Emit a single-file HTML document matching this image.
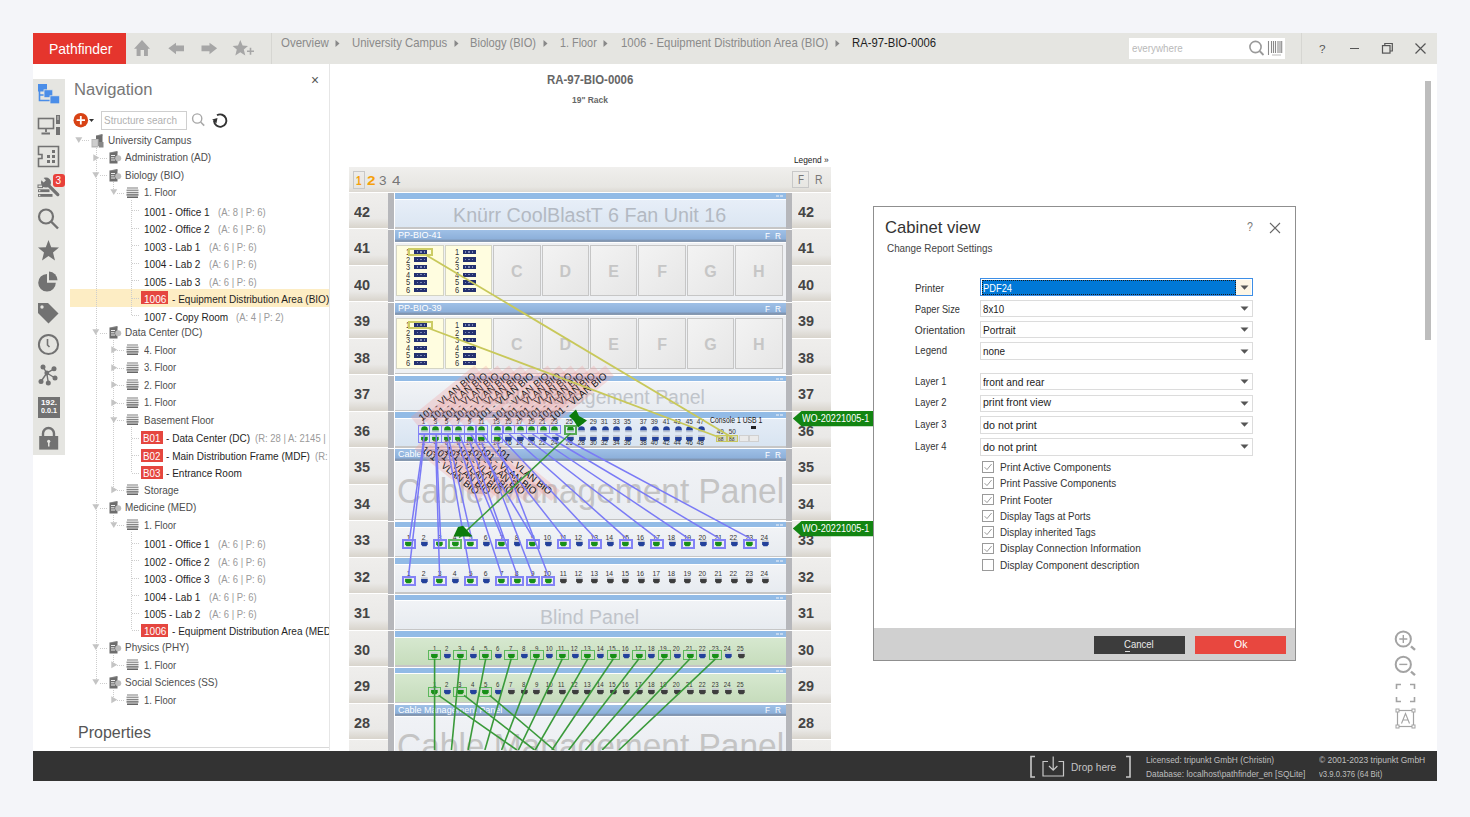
<!DOCTYPE html><html><head><meta charset="utf-8"><style>
html,body{margin:0;padding:0;}
body{width:1470px;height:817px;position:relative;overflow:hidden;background:#f4f5f9;font-family:"Liberation Sans", sans-serif;}
div{position:absolute;box-sizing:border-box;}
.t{white-space:nowrap;line-height:1;transform-origin:0 0;}
</style></head><body>
<div style="left:33.00px;top:33.00px;width:1404.00px;height:748.00px;background:#fff;"></div>
<div style="left:33.00px;top:33.00px;width:1404.00px;height:31.00px;background:#e5e5e1;"></div>
<div style="left:33.00px;top:33.00px;width:93.00px;height:31.00px;background:#e5352d;"></div>
<div class="t" style="left:48.50px;top:40.80px;font-size:15px;color:#fff;transform:scaleX(0.9284);">Pathfinder</div>
<div style="left:271.00px;top:33.00px;width:1.00px;height:31.00px;background:#d6d6d2;"></div>
<div style="left:1301.00px;top:33.00px;width:1.00px;height:31.00px;background:#d6d6d2;"></div>
<svg style="position:absolute;left:133px;top:39px;" width="20" height="18" viewBox="0 0 20 18"><path d="M1 9.8 L9 1 L17 9.8 Z M3.6 9 H14.9 V17 H11 V11 H7.6 V17 H3.6 Z" fill="#a6a6a6"/></svg>
<svg style="position:absolute;left:167px;top:42px;" width="19" height="14" viewBox="0 0 19 14"><path d="M1.3 6.2 L9 0.7 V3.4 H17 V9.2 H9 V12.2 Z" fill="#a6a6a6"/></svg>
<svg style="position:absolute;left:200px;top:42px;" width="19" height="14" viewBox="0 0 19 14"><path d="M17.1 6.2 L9.5 0.7 V3.4 H1.5 V9.2 H9.5 V12.2 Z" fill="#a6a6a6"/></svg>
<svg style="position:absolute;left:231px;top:39px;" width="26" height="18" viewBox="0 0 26 18"><path d="M9.3 1 L11.6 6.6 L17 6.9 L12.8 10.5 L14.3 16.4 L9.3 13.2 L4.3 16.4 L5.8 10.5 L1.6 6.9 L7 6.6 Z" fill="#a6a6a6"/><path d="M16 12.3 H23 M19.5 8.8 V15.8" stroke="#a6a6a6" stroke-width="1.6"/></svg>
<div class="t" style="left:280.60px;top:36.97px;font-size:12.2px;color:#8a8a8a;transform:scaleX(0.9415);">Overview</div>
<div class="t" style="left:351.60px;top:36.97px;font-size:12.2px;color:#8a8a8a;transform:scaleX(0.9310);">University Campus</div>
<div class="t" style="left:470.20px;top:36.97px;font-size:12.2px;color:#8a8a8a;transform:scaleX(0.9114);">Biology (BIO)</div>
<div class="t" style="left:559.70px;top:36.97px;font-size:12.2px;color:#8a8a8a;transform:scaleX(0.8898);">1. Floor</div>
<div class="t" style="left:620.90px;top:36.97px;font-size:12.2px;color:#8a8a8a;transform:scaleX(0.9354);">1006 - Equipment Distribution Area (BIO)</div>
<div class="t" style="left:852.40px;top:36.97px;font-size:12.2px;color:#1e1e1e;transform:scaleX(0.9253);">RA-97-BIO-0006</div>
<svg style="position:absolute;left:335px;top:39px;" width="6" height="9" viewBox="0 0 6 9"><path d="M0.5 1 L4.5 4.5 L0.5 8 Z" fill="#888"/></svg>
<svg style="position:absolute;left:454.3px;top:39px;" width="6" height="9" viewBox="0 0 6 9"><path d="M0.5 1 L4.5 4.5 L0.5 8 Z" fill="#888"/></svg>
<svg style="position:absolute;left:542.7px;top:39px;" width="6" height="9" viewBox="0 0 6 9"><path d="M0.5 1 L4.5 4.5 L0.5 8 Z" fill="#888"/></svg>
<svg style="position:absolute;left:603.3px;top:39px;" width="6" height="9" viewBox="0 0 6 9"><path d="M0.5 1 L4.5 4.5 L0.5 8 Z" fill="#888"/></svg>
<svg style="position:absolute;left:835.1px;top:39px;" width="6" height="9" viewBox="0 0 6 9"><path d="M0.5 1 L4.5 4.5 L0.5 8 Z" fill="#888"/></svg>
<div style="left:1129.00px;top:38.00px;width:156.00px;height:21.00px;background:#fff;"></div>
<div class="t" style="left:1132.40px;top:42.61px;font-size:10.5px;color:#b9b9b9;transform:scaleX(0.9321);">everywhere</div>
<svg style="position:absolute;left:1248px;top:40px;" width="18" height="17" viewBox="0 0 18 17"><circle cx="7.5" cy="7" r="5.6" fill="none" stroke="#9a9a9a" stroke-width="1.6"/><path d="M11.6 11 L15.5 15" stroke="#9a9a9a" stroke-width="1.8"/></svg>
<svg style="position:absolute;left:1267px;top:40px;" width="17" height="17" viewBox="0 0 17 17"><path d="M1.5 1 V15 M4.5 1 V13 M6.5 1 V13 M8.5 1 V13 M11 1 V13 M13 1 V13 M14.7 1 V13" stroke="#8a8a8a" stroke-width="1.1"/><path d="M5 15 H14" stroke="#aaa" stroke-width="0.8"/></svg>
<div class="t" style="left:1318.50px;top:43.77px;font-size:11.5px;color:#555;transform:scaleX(1.0184);">?</div>
<div style="left:1349.60px;top:47.60px;width:9.80px;height:1.20px;background:#555;"></div>
<svg style="position:absolute;left:1381px;top:42px;" width="13" height="13" viewBox="0 0 13 13"><rect x="1.5" y="3.6" width="7.5" height="7.5" fill="none" stroke="#555" stroke-width="1.2"/><path d="M3.8 3.6 V1.5 H11.3 V9 H9" fill="none" stroke="#555" stroke-width="1.2"/></svg>
<svg style="position:absolute;left:1414px;top:42px;" width="13" height="13" viewBox="0 0 13 13"><path d="M1.5 1.5 L11.5 11.5 M11.5 1.5 L1.5 11.5" stroke="#555" stroke-width="1.2"/></svg>
<div style="left:33.00px;top:79.00px;width:32.00px;height:376.00px;background:#e5e5e1;"></div>
<svg style="position:absolute;left:37px;top:83px;" width="24" height="22" viewBox="0 0 24 22"><path d="M2.5 8 V17.5 H13 M2.5 12 H7" fill="none" stroke="#4a8de8" stroke-width="1.6"/><rect x="1" y="1" width="9" height="7.5" fill="#4a8de8"/><rect x="7" y="6.8" width="8.8" height="7.9" fill="#4a8de8" stroke="#e5e5e1" stroke-width="0.8"/><rect x="13" y="12.8" width="9.7" height="8" fill="#4a8de8" stroke="#e5e5e1" stroke-width="0.8"/></svg>
<svg style="position:absolute;left:37px;top:114px;" width="24" height="23" viewBox="0 0 24 23"><rect x="1.5" y="4.5" width="15" height="10" fill="none" stroke="#727272" stroke-width="1.6"/><path d="M9 14.5 V18 M4.5 19.5 H13" stroke="#727272" stroke-width="1.8"/><rect x="19" y="1" width="4" height="9" fill="#727272"/><rect x="19" y="13" width="4" height="8" fill="#727272"/><path d="M20 3 H22 M20 5 H22" stroke="#e5e5e1" stroke-width="0.8"/></svg>
<svg style="position:absolute;left:37px;top:145px;" width="24" height="23" viewBox="0 0 24 23"><path d="M1.5 1.5 H21.5 V21.5 H1.5 V13.5 H5 V9.5 H1.5 Z" fill="none" stroke="#727272" stroke-width="1.6"/><rect x="15" y="5" width="3" height="3" fill="#727272"/><rect x="10" y="10" width="3" height="3" fill="#727272"/><rect x="15" y="10" width="3" height="3" fill="#727272"/><rect x="10" y="15" width="3" height="3" fill="#727272"/><rect x="15" y="15" width="3" height="3" fill="#727272"/></svg>
<svg style="position:absolute;left:37px;top:175px;" width="28" height="26" viewBox="0 0 28 26"><path d="M9 7.8 L20.8 19.6" stroke="#727272" stroke-width="3.3" stroke-linecap="round"/><circle cx="9" cy="7.6" r="5" fill="#727272"/><path d="M3 1.6 L7.8 6.4" stroke="#e5e5e1" stroke-width="3.2"/><rect x="1" y="10" width="4.6" height="2.6" fill="none" stroke="#727272" stroke-width="1"/><rect x="1" y="14.3" width="11.5" height="2.8" fill="#727272"/><rect x="1" y="19" width="14.5" height="2.8" fill="#727272"/><rect x="2" y="15" width="1.3" height="1.3" fill="#e5e5e1"/><rect x="2" y="19.8" width="1.3" height="1.3" fill="#e5e5e1"/></svg>
<div style="left:52.50px;top:174.00px;width:12.00px;height:12.50px;background:#e8413a;border-radius:3px;"></div>
<div class="t" style="left:55.50px;top:175.53px;font-size:10px;color:#fff;">3</div>
<svg style="position:absolute;left:37px;top:207px;" width="24" height="24" viewBox="0 0 24 24"><circle cx="9" cy="9.5" r="7" fill="none" stroke="#727272" stroke-width="2.2"/><path d="M14 14.5 L21 21.5" stroke="#727272" stroke-width="2.4"/></svg>
<svg style="position:absolute;left:37px;top:239px;" width="24" height="24" viewBox="0 0 24 24"><path d="M11.5 1 L14.2 8.2 L22 8.6 L16 13.5 L18 21.5 L11.5 17 L5 21.5 L7 13.5 L1 8.6 L8.8 8.2 Z" fill="#727272"/></svg>
<svg style="position:absolute;left:37px;top:270px;" width="24" height="24" viewBox="0 0 24 24"><path d="M10 4 A8.8 8.8 0 1 0 18.8 12.8 H10 Z" fill="#727272"/><path d="M12 1.5 A8.8 8.8 0 0 1 20.5 10.3 H12 Z" fill="#727272"/></svg>
<svg style="position:absolute;left:37px;top:302px;" width="24" height="24" viewBox="0 0 24 24"><path d="M1 1 H11 L21.5 11.5 L11.5 21.5 L1 11 Z" fill="#727272"/><circle cx="5" cy="5" r="1.7" fill="#e5e5e1"/></svg>
<svg style="position:absolute;left:37px;top:333px;" width="24" height="24" viewBox="0 0 24 24"><circle cx="11.5" cy="11.5" r="9.6" fill="none" stroke="#727272" stroke-width="2"/><path d="M10.5 6 V12 L12.5 14" fill="none" stroke="#727272" stroke-width="1.6"/></svg>
<svg style="position:absolute;left:37px;top:364px;" width="24" height="24" viewBox="0 0 24 24"><path d="M6 3 L9.8 9 L17 4.8 M9.8 9 L4 17.5 M9.8 9 L11.3 19 M9.8 9 L18 14" fill="none" stroke="#727272" stroke-width="1.4"/><circle cx="6" cy="3" r="2.5" fill="#727272"/><circle cx="17" cy="4.8" r="2.5" fill="#727272"/><circle cx="9.8" cy="9" r="2.4" fill="#727272"/><circle cx="4" cy="17.5" r="2.5" fill="#727272"/><circle cx="11.3" cy="19" r="2.5" fill="#727272"/><circle cx="18" cy="14" r="2.5" fill="#727272"/></svg>
<div style="left:38.00px;top:396.70px;width:21.60px;height:21.30px;background:#727272;"></div>
<div class="t" style="left:40.50px;top:399.15px;font-size:7.5px;color:#fff;font-weight:bold;transform:scaleX(1.0968);">192.</div>
<div class="t" style="left:40.50px;top:407.25px;font-size:7.5px;color:#fff;font-weight:bold;transform:scaleX(0.9588);">0.0.1</div>
<svg style="position:absolute;left:37px;top:426px;" width="24" height="26" viewBox="0 0 24 26"><path d="M6 11 V7.5 A5.5 5.5 0 0 1 17 7.5 V11" fill="none" stroke="#727272" stroke-width="2.4"/><rect x="2.2" y="10" width="19" height="13.6" fill="#727272"/><circle cx="11.7" cy="15.3" r="1.6" fill="#e5e5e1"/><rect x="11" y="15.5" width="1.5" height="5" fill="#e5e5e1"/></svg>
<div style="left:329.00px;top:64.00px;width:1.00px;height:686.00px;background:#e6e6e6;"></div>
<div class="t" style="left:73.50px;top:81.16px;font-size:17.3px;color:#777;transform:scaleX(0.9603);">Navigation</div>
<div class="t" style="left:311.00px;top:72.65px;font-size:14px;color:#555;transform:scaleX(0.9768);">×</div>
<svg style="position:absolute;left:72px;top:111px;" width="26" height="19" viewBox="0 0 26 19"><circle cx="8.8" cy="9.2" r="7.3" fill="#d84315"/><path d="M8.8 5 V13.4 M4.6 9.2 H13" stroke="#fff" stroke-width="1.8"/><path d="M17 8 H22 L19.5 11 Z" fill="#333"/></svg>
<div style="left:101.30px;top:110.60px;width:86.20px;height:19.00px;border:1px solid #cfcfcf;background:#fff;"></div>
<div class="t" style="left:104.00px;top:116.17px;font-size:10.2px;color:#b0b0b0;transform:scaleX(0.9757);">Structure search</div>
<svg style="position:absolute;left:191px;top:112px;" width="16" height="16" viewBox="0 0 16 16"><circle cx="6.2" cy="6.5" r="4.6" fill="none" stroke="#a8a8a8" stroke-width="1.4"/><path d="M9.6 10 L13.2 13.6" stroke="#a8a8a8" stroke-width="1.5"/></svg>
<svg style="position:absolute;left:210px;top:110px;" width="20" height="20" viewBox="0 0 20 20"><path d="M4 11 A6.2 6.2 0 1 0 7 5.3" fill="none" stroke="#333" stroke-width="1.9"/><path d="M2.2 9.5 L6.4 13.4 L7.5 8 Z" fill="#333"/></svg>
<div style="left:70.40px;top:289.30px;width:258.60px;height:17.30px;background:#fdedc4;"></div>
<div style="left:95.70px;top:148.00px;width:1.00px;height:533.70px;background:repeating-linear-gradient(#cdcdcd 0 1px,transparent 1px 2px);"></div>
<div style="left:113.20px;top:182.20px;width:1.00px;height:9.50px;background:repeating-linear-gradient(#cdcdcd 0 1px,transparent 1px 2px);"></div>
<div style="left:113.20px;top:339.70px;width:1.00px;height:149.50px;background:repeating-linear-gradient(#cdcdcd 0 1px,transparent 1px 2px);"></div>
<div style="left:113.20px;top:514.70px;width:1.00px;height:9.50px;background:repeating-linear-gradient(#cdcdcd 0 1px,transparent 1px 2px);"></div>
<div style="left:113.20px;top:654.70px;width:1.00px;height:9.50px;background:repeating-linear-gradient(#cdcdcd 0 1px,transparent 1px 2px);"></div>
<div style="left:113.20px;top:689.70px;width:1.00px;height:9.50px;background:repeating-linear-gradient(#cdcdcd 0 1px,transparent 1px 2px);"></div>
<div style="left:130.80px;top:199.70px;width:1.00px;height:115.50px;background:repeating-linear-gradient(#cdcdcd 0 1px,transparent 1px 2px);"></div>
<div style="left:130.80px;top:427.20px;width:1.00px;height:45.50px;background:repeating-linear-gradient(#cdcdcd 0 1px,transparent 1px 2px);"></div>
<div style="left:130.80px;top:532.20px;width:1.00px;height:98.00px;background:repeating-linear-gradient(#cdcdcd 0 1px,transparent 1px 2px);"></div>
<svg style="position:absolute;left:74.7px;top:136.8px;" width="8" height="7" viewBox="0 0 8 7"><path d="M0.3 0.3 H7.3 L3.8 6 Z" fill="#c4c4c4"/></svg>
<div style="left:82.20px;top:140.00px;width:7.50px;height:1.00px;background:repeating-linear-gradient(90deg,#cdcdcd 0 1px,transparent 1px 2px);"></div>
<svg style="position:absolute;left:90.7px;top:134.0px;" width="13" height="14" viewBox="0 0 13 14"><rect x="5" y="1.5" width="6.5" height="10.5" fill="#6d6d6d"/><path d="M5 1.5 L11.5 0 V2 Z" fill="#6d6d6d"/><rect x="0.5" y="5" width="7" height="8.5" fill="#b8b8b8"/><path d="M1.5 7 H6.5 M1.5 9 H6.5 M1.5 11 H6.5" stroke="#eee" stroke-width="0.8"/><rect x="8" y="8" width="4.5" height="5.5" fill="#888"/></svg>
<div class="t" style="left:107.70px;top:135.57px;font-size:10.2px;color:#4d4d4d;transform:scaleX(0.9750);">University Campus</div>
<svg style="position:absolute;left:93.4px;top:153.7px;" width="7" height="8" viewBox="0 0 7 8"><path d="M0.3 0.3 V7.3 L6.3 3.8 Z" fill="#c4c4c4"/></svg>
<div style="left:99.90px;top:157.50px;width:8.20px;height:1.00px;background:repeating-linear-gradient(90deg,#cdcdcd 0 1px,transparent 1px 2px);"></div>
<svg style="position:absolute;left:109.1px;top:151.0px;" width="13" height="13" viewBox="0 0 13 13"><rect x="0.5" y="1.5" width="8" height="11" fill="#6d6d6d"/><path d="M0.5 1.5 L8.5 0 V2 Z" fill="#6d6d6d"/><path d="M2 4.5 H6 M2 6.8 H5.5 M2 9 H6" stroke="#eee" stroke-width="1"/><circle cx="9.2" cy="7.2" r="3" fill="#bdbdbd"/></svg>
<div class="t" style="left:124.90px;top:153.07px;font-size:10.2px;color:#4d4d4d;transform:scaleX(0.9750);">Administration (AD)</div>
<svg style="position:absolute;left:92.4px;top:171.8px;" width="8" height="7" viewBox="0 0 8 7"><path d="M0.3 0.3 H7.3 L3.8 6 Z" fill="#c4c4c4"/></svg>
<div style="left:99.90px;top:175.00px;width:8.20px;height:1.00px;background:repeating-linear-gradient(90deg,#cdcdcd 0 1px,transparent 1px 2px);"></div>
<svg style="position:absolute;left:109.1px;top:168.5px;" width="13" height="13" viewBox="0 0 13 13"><rect x="0.5" y="1.5" width="8" height="11" fill="#6d6d6d"/><path d="M0.5 1.5 L8.5 0 V2 Z" fill="#6d6d6d"/><path d="M2 4.5 H6 M2 6.8 H5.5 M2 9 H6" stroke="#eee" stroke-width="1"/><circle cx="9.2" cy="7.2" r="3" fill="#bdbdbd"/></svg>
<div class="t" style="left:124.90px;top:170.57px;font-size:10.2px;color:#4d4d4d;transform:scaleX(0.9750);">Biology (BIO)</div>
<svg style="position:absolute;left:109.9px;top:189.3px;" width="8" height="7" viewBox="0 0 8 7"><path d="M0.3 0.3 H7.3 L3.8 6 Z" fill="#c4c4c4"/></svg>
<div style="left:117.40px;top:192.50px;width:7.20px;height:1.00px;background:repeating-linear-gradient(90deg,#cdcdcd 0 1px,transparent 1px 2px);"></div>
<svg style="position:absolute;left:125.6px;top:186.9px;" width="13" height="12" viewBox="0 0 13 12"><path d="M1 1 H12" stroke="#a8a8a8" stroke-width="1.5"/><path d="M0.5 3.3 H12.5" stroke="#999" stroke-width="1.5"/><path d="M0.5 5.6 H12.5" stroke="#858585" stroke-width="1.5"/><path d="M0.5 7.9 H12.5" stroke="#707070" stroke-width="1.5"/><path d="M1 10.2 H12" stroke="#5e5e5e" stroke-width="1.5"/></svg>
<div class="t" style="left:143.60px;top:188.07px;font-size:10.2px;color:#4d4d4d;transform:scaleX(0.9300);">1. Floor</div>
<div style="left:131.50px;top:210.00px;width:8.50px;height:1.00px;background:repeating-linear-gradient(90deg,#cdcdcd 0 1px,transparent 1px 2px);"></div>
<div class="t" style="left:143.50px;top:207.77px;font-size:10.2px;color:#1f1f1f;transform:scaleX(0.9850);">1001 - Office 1</div>
<div class="t" style="left:217.81px;top:207.77px;font-size:10.2px;color:#9a9a9a;transform:scaleX(0.9300);">(A: 8 | P: 6)</div>
<div style="left:131.50px;top:227.50px;width:8.50px;height:1.00px;background:repeating-linear-gradient(90deg,#cdcdcd 0 1px,transparent 1px 2px);"></div>
<div class="t" style="left:143.50px;top:225.27px;font-size:10.2px;color:#1f1f1f;transform:scaleX(0.9850);">1002 - Office 2</div>
<div class="t" style="left:217.81px;top:225.27px;font-size:10.2px;color:#9a9a9a;transform:scaleX(0.9300);">(A: 6 | P: 6)</div>
<div style="left:131.50px;top:245.00px;width:8.50px;height:1.00px;background:repeating-linear-gradient(90deg,#cdcdcd 0 1px,transparent 1px 2px);"></div>
<div class="t" style="left:143.50px;top:242.77px;font-size:10.2px;color:#1f1f1f;transform:scaleX(0.9850);">1003 - Lab 1</div>
<div class="t" style="left:208.51px;top:242.77px;font-size:10.2px;color:#9a9a9a;transform:scaleX(0.9300);">(A: 6 | P: 6)</div>
<div style="left:131.50px;top:262.50px;width:8.50px;height:1.00px;background:repeating-linear-gradient(90deg,#cdcdcd 0 1px,transparent 1px 2px);"></div>
<div class="t" style="left:143.50px;top:260.27px;font-size:10.2px;color:#1f1f1f;transform:scaleX(0.9850);">1004 - Lab 2</div>
<div class="t" style="left:208.51px;top:260.27px;font-size:10.2px;color:#9a9a9a;transform:scaleX(0.9300);">(A: 6 | P: 6)</div>
<div style="left:131.50px;top:280.00px;width:8.50px;height:1.00px;background:repeating-linear-gradient(90deg,#cdcdcd 0 1px,transparent 1px 2px);"></div>
<div class="t" style="left:143.50px;top:277.77px;font-size:10.2px;color:#1f1f1f;transform:scaleX(0.9850);">1005 - Lab 3</div>
<div class="t" style="left:208.51px;top:277.77px;font-size:10.2px;color:#9a9a9a;transform:scaleX(0.9300);">(A: 6 | P: 6)</div>
<div style="left:131.50px;top:297.50px;width:8.50px;height:1.00px;background:repeating-linear-gradient(90deg,#cdcdcd 0 1px,transparent 1px 2px);"></div>
<div style="left:140.80px;top:291.20px;width:27.00px;height:13.00px;background:#e5463f;"></div>
<div class="t" style="left:143.60px;top:294.77px;font-size:10.2px;color:#fff;transform:scaleX(0.9850);">1006</div>
<div class="t" style="left:171.80px;top:294.77px;font-size:10.2px;color:#1f1f1f;transform:scaleX(0.9850);"> - Equipment Distribution Area (BIO)</div>
<div style="left:131.50px;top:315.00px;width:8.50px;height:1.00px;background:repeating-linear-gradient(90deg,#cdcdcd 0 1px,transparent 1px 2px);"></div>
<div class="t" style="left:143.50px;top:312.77px;font-size:10.2px;color:#1f1f1f;transform:scaleX(0.9850);">1007 - Copy Room</div>
<div class="t" style="left:236.44px;top:312.77px;font-size:10.2px;color:#9a9a9a;transform:scaleX(0.9300);">(A: 4 | P: 2)</div>
<svg style="position:absolute;left:92.4px;top:329.3px;" width="8" height="7" viewBox="0 0 8 7"><path d="M0.3 0.3 H7.3 L3.8 6 Z" fill="#c4c4c4"/></svg>
<div style="left:99.90px;top:332.50px;width:8.20px;height:1.00px;background:repeating-linear-gradient(90deg,#cdcdcd 0 1px,transparent 1px 2px);"></div>
<svg style="position:absolute;left:109.1px;top:326.0px;" width="13" height="13" viewBox="0 0 13 13"><rect x="0.5" y="1.5" width="8" height="11" fill="#6d6d6d"/><path d="M0.5 1.5 L8.5 0 V2 Z" fill="#6d6d6d"/><path d="M2 4.5 H6 M2 6.8 H5.5 M2 9 H6" stroke="#eee" stroke-width="1"/><circle cx="9.2" cy="7.2" r="3" fill="#bdbdbd"/></svg>
<div class="t" style="left:124.90px;top:328.07px;font-size:10.2px;color:#4d4d4d;transform:scaleX(0.9750);">Data Center (DC)</div>
<svg style="position:absolute;left:110.9px;top:346.2px;" width="7" height="8" viewBox="0 0 7 8"><path d="M0.3 0.3 V7.3 L6.3 3.8 Z" fill="#c4c4c4"/></svg>
<div style="left:117.40px;top:350.00px;width:7.20px;height:1.00px;background:repeating-linear-gradient(90deg,#cdcdcd 0 1px,transparent 1px 2px);"></div>
<svg style="position:absolute;left:125.6px;top:344.4px;" width="13" height="12" viewBox="0 0 13 12"><path d="M1 1 H12" stroke="#a8a8a8" stroke-width="1.5"/><path d="M0.5 3.3 H12.5" stroke="#999" stroke-width="1.5"/><path d="M0.5 5.6 H12.5" stroke="#858585" stroke-width="1.5"/><path d="M0.5 7.9 H12.5" stroke="#707070" stroke-width="1.5"/><path d="M1 10.2 H12" stroke="#5e5e5e" stroke-width="1.5"/></svg>
<div class="t" style="left:143.60px;top:345.57px;font-size:10.2px;color:#4d4d4d;transform:scaleX(0.9300);">4. Floor</div>
<svg style="position:absolute;left:110.9px;top:363.7px;" width="7" height="8" viewBox="0 0 7 8"><path d="M0.3 0.3 V7.3 L6.3 3.8 Z" fill="#c4c4c4"/></svg>
<div style="left:117.40px;top:367.50px;width:7.20px;height:1.00px;background:repeating-linear-gradient(90deg,#cdcdcd 0 1px,transparent 1px 2px);"></div>
<svg style="position:absolute;left:125.6px;top:361.9px;" width="13" height="12" viewBox="0 0 13 12"><path d="M1 1 H12" stroke="#a8a8a8" stroke-width="1.5"/><path d="M0.5 3.3 H12.5" stroke="#999" stroke-width="1.5"/><path d="M0.5 5.6 H12.5" stroke="#858585" stroke-width="1.5"/><path d="M0.5 7.9 H12.5" stroke="#707070" stroke-width="1.5"/><path d="M1 10.2 H12" stroke="#5e5e5e" stroke-width="1.5"/></svg>
<div class="t" style="left:143.60px;top:363.07px;font-size:10.2px;color:#4d4d4d;transform:scaleX(0.9300);">3. Floor</div>
<svg style="position:absolute;left:110.9px;top:381.2px;" width="7" height="8" viewBox="0 0 7 8"><path d="M0.3 0.3 V7.3 L6.3 3.8 Z" fill="#c4c4c4"/></svg>
<div style="left:117.40px;top:385.00px;width:7.20px;height:1.00px;background:repeating-linear-gradient(90deg,#cdcdcd 0 1px,transparent 1px 2px);"></div>
<svg style="position:absolute;left:125.6px;top:379.4px;" width="13" height="12" viewBox="0 0 13 12"><path d="M1 1 H12" stroke="#a8a8a8" stroke-width="1.5"/><path d="M0.5 3.3 H12.5" stroke="#999" stroke-width="1.5"/><path d="M0.5 5.6 H12.5" stroke="#858585" stroke-width="1.5"/><path d="M0.5 7.9 H12.5" stroke="#707070" stroke-width="1.5"/><path d="M1 10.2 H12" stroke="#5e5e5e" stroke-width="1.5"/></svg>
<div class="t" style="left:143.60px;top:380.57px;font-size:10.2px;color:#4d4d4d;transform:scaleX(0.9300);">2. Floor</div>
<svg style="position:absolute;left:110.9px;top:398.7px;" width="7" height="8" viewBox="0 0 7 8"><path d="M0.3 0.3 V7.3 L6.3 3.8 Z" fill="#c4c4c4"/></svg>
<div style="left:117.40px;top:402.50px;width:7.20px;height:1.00px;background:repeating-linear-gradient(90deg,#cdcdcd 0 1px,transparent 1px 2px);"></div>
<svg style="position:absolute;left:125.6px;top:396.9px;" width="13" height="12" viewBox="0 0 13 12"><path d="M1 1 H12" stroke="#a8a8a8" stroke-width="1.5"/><path d="M0.5 3.3 H12.5" stroke="#999" stroke-width="1.5"/><path d="M0.5 5.6 H12.5" stroke="#858585" stroke-width="1.5"/><path d="M0.5 7.9 H12.5" stroke="#707070" stroke-width="1.5"/><path d="M1 10.2 H12" stroke="#5e5e5e" stroke-width="1.5"/></svg>
<div class="t" style="left:143.60px;top:398.07px;font-size:10.2px;color:#4d4d4d;transform:scaleX(0.9300);">1. Floor</div>
<svg style="position:absolute;left:109.9px;top:416.8px;" width="8" height="7" viewBox="0 0 8 7"><path d="M0.3 0.3 H7.3 L3.8 6 Z" fill="#c4c4c4"/></svg>
<div style="left:117.40px;top:420.00px;width:7.20px;height:1.00px;background:repeating-linear-gradient(90deg,#cdcdcd 0 1px,transparent 1px 2px);"></div>
<svg style="position:absolute;left:125.6px;top:414.4px;" width="13" height="12" viewBox="0 0 13 12"><path d="M1 1 H12" stroke="#a8a8a8" stroke-width="1.5"/><path d="M0.5 3.3 H12.5" stroke="#999" stroke-width="1.5"/><path d="M0.5 5.6 H12.5" stroke="#858585" stroke-width="1.5"/><path d="M0.5 7.9 H12.5" stroke="#707070" stroke-width="1.5"/><path d="M1 10.2 H12" stroke="#5e5e5e" stroke-width="1.5"/></svg>
<div class="t" style="left:143.60px;top:415.57px;font-size:10.2px;color:#4d4d4d;transform:scaleX(0.9750);">Basement Floor</div>
<div style="left:131.50px;top:437.50px;width:8.50px;height:1.00px;background:repeating-linear-gradient(90deg,#cdcdcd 0 1px,transparent 1px 2px);"></div>
<div style="left:141.00px;top:431.20px;width:21.50px;height:13.00px;background:#e5463f;"></div>
<div class="t" style="left:143.00px;top:434.27px;font-size:10.2px;color:#fff;transform:scaleX(0.9600);">B01</div>
<div class="t" style="left:165.50px;top:434.27px;font-size:10.2px;color:#1f1f1f;transform:scaleX(0.9850);"> - Data Center (DC)</div>
<div class="t" style="left:254.81px;top:434.27px;font-size:10.2px;color:#9a9a9a;transform:scaleX(0.9300);">(R: 28 | A: 2145 |</div>
<div style="left:131.50px;top:455.00px;width:8.50px;height:1.00px;background:repeating-linear-gradient(90deg,#cdcdcd 0 1px,transparent 1px 2px);"></div>
<div style="left:141.00px;top:448.70px;width:21.50px;height:13.00px;background:#e5463f;"></div>
<div class="t" style="left:143.00px;top:451.77px;font-size:10.2px;color:#fff;transform:scaleX(0.9600);">B02</div>
<div class="t" style="left:165.50px;top:451.77px;font-size:10.2px;color:#1f1f1f;transform:scaleX(0.9850);"> - Main Distribution Frame (MDF)</div>
<div class="t" style="left:314.54px;top:451.77px;font-size:10.2px;color:#9a9a9a;transform:scaleX(0.9300);">(R:</div>
<div style="left:131.50px;top:472.50px;width:8.50px;height:1.00px;background:repeating-linear-gradient(90deg,#cdcdcd 0 1px,transparent 1px 2px);"></div>
<div style="left:141.00px;top:466.20px;width:21.50px;height:13.00px;background:#e5463f;"></div>
<div class="t" style="left:143.00px;top:469.27px;font-size:10.2px;color:#fff;transform:scaleX(0.9600);">B03</div>
<div class="t" style="left:165.50px;top:469.27px;font-size:10.2px;color:#1f1f1f;transform:scaleX(0.9850);"> - Entrance Room</div>
<svg style="position:absolute;left:110.9px;top:486.2px;" width="7" height="8" viewBox="0 0 7 8"><path d="M0.3 0.3 V7.3 L6.3 3.8 Z" fill="#c4c4c4"/></svg>
<div style="left:117.40px;top:490.00px;width:7.20px;height:1.00px;background:repeating-linear-gradient(90deg,#cdcdcd 0 1px,transparent 1px 2px);"></div>
<svg style="position:absolute;left:125.6px;top:484.4px;" width="13" height="12" viewBox="0 0 13 12"><path d="M1 1 H12" stroke="#a8a8a8" stroke-width="1.5"/><path d="M0.5 3.3 H12.5" stroke="#999" stroke-width="1.5"/><path d="M0.5 5.6 H12.5" stroke="#858585" stroke-width="1.5"/><path d="M0.5 7.9 H12.5" stroke="#707070" stroke-width="1.5"/><path d="M1 10.2 H12" stroke="#5e5e5e" stroke-width="1.5"/></svg>
<div class="t" style="left:143.60px;top:485.57px;font-size:10.2px;color:#4d4d4d;transform:scaleX(0.9750);">Storage</div>
<svg style="position:absolute;left:92.4px;top:504.3px;" width="8" height="7" viewBox="0 0 8 7"><path d="M0.3 0.3 H7.3 L3.8 6 Z" fill="#c4c4c4"/></svg>
<div style="left:99.90px;top:507.50px;width:8.20px;height:1.00px;background:repeating-linear-gradient(90deg,#cdcdcd 0 1px,transparent 1px 2px);"></div>
<svg style="position:absolute;left:109.1px;top:501.0px;" width="13" height="13" viewBox="0 0 13 13"><rect x="0.5" y="1.5" width="8" height="11" fill="#6d6d6d"/><path d="M0.5 1.5 L8.5 0 V2 Z" fill="#6d6d6d"/><path d="M2 4.5 H6 M2 6.8 H5.5 M2 9 H6" stroke="#eee" stroke-width="1"/><circle cx="9.2" cy="7.2" r="3" fill="#bdbdbd"/></svg>
<div class="t" style="left:124.90px;top:503.07px;font-size:10.2px;color:#4d4d4d;transform:scaleX(0.9750);">Medicine (MED)</div>
<svg style="position:absolute;left:109.9px;top:521.8px;" width="8" height="7" viewBox="0 0 8 7"><path d="M0.3 0.3 H7.3 L3.8 6 Z" fill="#c4c4c4"/></svg>
<div style="left:117.40px;top:525.00px;width:7.20px;height:1.00px;background:repeating-linear-gradient(90deg,#cdcdcd 0 1px,transparent 1px 2px);"></div>
<svg style="position:absolute;left:125.6px;top:519.4px;" width="13" height="12" viewBox="0 0 13 12"><path d="M1 1 H12" stroke="#a8a8a8" stroke-width="1.5"/><path d="M0.5 3.3 H12.5" stroke="#999" stroke-width="1.5"/><path d="M0.5 5.6 H12.5" stroke="#858585" stroke-width="1.5"/><path d="M0.5 7.9 H12.5" stroke="#707070" stroke-width="1.5"/><path d="M1 10.2 H12" stroke="#5e5e5e" stroke-width="1.5"/></svg>
<div class="t" style="left:143.60px;top:520.57px;font-size:10.2px;color:#4d4d4d;transform:scaleX(0.9300);">1. Floor</div>
<div style="left:131.50px;top:542.50px;width:8.50px;height:1.00px;background:repeating-linear-gradient(90deg,#cdcdcd 0 1px,transparent 1px 2px);"></div>
<div class="t" style="left:143.50px;top:540.27px;font-size:10.2px;color:#1f1f1f;transform:scaleX(0.9850);">1001 - Office 1</div>
<div class="t" style="left:217.81px;top:540.27px;font-size:10.2px;color:#9a9a9a;transform:scaleX(0.9300);">(A: 6 | P: 6)</div>
<div style="left:131.50px;top:560.00px;width:8.50px;height:1.00px;background:repeating-linear-gradient(90deg,#cdcdcd 0 1px,transparent 1px 2px);"></div>
<div class="t" style="left:143.50px;top:557.77px;font-size:10.2px;color:#1f1f1f;transform:scaleX(0.9850);">1002 - Office 2</div>
<div class="t" style="left:217.81px;top:557.77px;font-size:10.2px;color:#9a9a9a;transform:scaleX(0.9300);">(A: 6 | P: 6)</div>
<div style="left:131.50px;top:577.50px;width:8.50px;height:1.00px;background:repeating-linear-gradient(90deg,#cdcdcd 0 1px,transparent 1px 2px);"></div>
<div class="t" style="left:143.50px;top:575.27px;font-size:10.2px;color:#1f1f1f;transform:scaleX(0.9850);">1003 - Office 3</div>
<div class="t" style="left:217.81px;top:575.27px;font-size:10.2px;color:#9a9a9a;transform:scaleX(0.9300);">(A: 6 | P: 6)</div>
<div style="left:131.50px;top:595.00px;width:8.50px;height:1.00px;background:repeating-linear-gradient(90deg,#cdcdcd 0 1px,transparent 1px 2px);"></div>
<div class="t" style="left:143.50px;top:592.77px;font-size:10.2px;color:#1f1f1f;transform:scaleX(0.9850);">1004 - Lab 1</div>
<div class="t" style="left:208.51px;top:592.77px;font-size:10.2px;color:#9a9a9a;transform:scaleX(0.9300);">(A: 6 | P: 6)</div>
<div style="left:131.50px;top:612.50px;width:8.50px;height:1.00px;background:repeating-linear-gradient(90deg,#cdcdcd 0 1px,transparent 1px 2px);"></div>
<div class="t" style="left:143.50px;top:610.27px;font-size:10.2px;color:#1f1f1f;transform:scaleX(0.9850);">1005 - Lab 2</div>
<div class="t" style="left:208.51px;top:610.27px;font-size:10.2px;color:#9a9a9a;transform:scaleX(0.9300);">(A: 6 | P: 6)</div>
<div style="left:131.50px;top:630.00px;width:8.50px;height:1.00px;background:repeating-linear-gradient(90deg,#cdcdcd 0 1px,transparent 1px 2px);"></div>
<div style="left:140.80px;top:623.70px;width:27.00px;height:13.00px;background:#e5463f;"></div>
<div class="t" style="left:143.60px;top:627.27px;font-size:10.2px;color:#fff;transform:scaleX(0.9850);">1006</div>
<div class="t" style="left:171.80px;top:627.27px;font-size:10.2px;color:#1f1f1f;transform:scaleX(0.9850);"> - Equipment Distribution Area (MED</div>
<svg style="position:absolute;left:92.4px;top:644.3px;" width="8" height="7" viewBox="0 0 8 7"><path d="M0.3 0.3 H7.3 L3.8 6 Z" fill="#c4c4c4"/></svg>
<div style="left:99.90px;top:647.50px;width:8.20px;height:1.00px;background:repeating-linear-gradient(90deg,#cdcdcd 0 1px,transparent 1px 2px);"></div>
<svg style="position:absolute;left:109.1px;top:641.0px;" width="13" height="13" viewBox="0 0 13 13"><rect x="0.5" y="1.5" width="8" height="11" fill="#6d6d6d"/><path d="M0.5 1.5 L8.5 0 V2 Z" fill="#6d6d6d"/><path d="M2 4.5 H6 M2 6.8 H5.5 M2 9 H6" stroke="#eee" stroke-width="1"/><circle cx="9.2" cy="7.2" r="3" fill="#bdbdbd"/></svg>
<div class="t" style="left:124.90px;top:643.07px;font-size:10.2px;color:#4d4d4d;transform:scaleX(0.9750);">Physics (PHY)</div>
<svg style="position:absolute;left:110.9px;top:661.2px;" width="7" height="8" viewBox="0 0 7 8"><path d="M0.3 0.3 V7.3 L6.3 3.8 Z" fill="#c4c4c4"/></svg>
<div style="left:117.40px;top:665.00px;width:7.20px;height:1.00px;background:repeating-linear-gradient(90deg,#cdcdcd 0 1px,transparent 1px 2px);"></div>
<svg style="position:absolute;left:125.6px;top:659.4px;" width="13" height="12" viewBox="0 0 13 12"><path d="M1 1 H12" stroke="#a8a8a8" stroke-width="1.5"/><path d="M0.5 3.3 H12.5" stroke="#999" stroke-width="1.5"/><path d="M0.5 5.6 H12.5" stroke="#858585" stroke-width="1.5"/><path d="M0.5 7.9 H12.5" stroke="#707070" stroke-width="1.5"/><path d="M1 10.2 H12" stroke="#5e5e5e" stroke-width="1.5"/></svg>
<div class="t" style="left:143.60px;top:660.57px;font-size:10.2px;color:#4d4d4d;transform:scaleX(0.9300);">1. Floor</div>
<svg style="position:absolute;left:92.4px;top:679.3px;" width="8" height="7" viewBox="0 0 8 7"><path d="M0.3 0.3 H7.3 L3.8 6 Z" fill="#c4c4c4"/></svg>
<div style="left:99.90px;top:682.50px;width:8.20px;height:1.00px;background:repeating-linear-gradient(90deg,#cdcdcd 0 1px,transparent 1px 2px);"></div>
<svg style="position:absolute;left:109.1px;top:676.0px;" width="13" height="13" viewBox="0 0 13 13"><rect x="0.5" y="1.5" width="8" height="11" fill="#6d6d6d"/><path d="M0.5 1.5 L8.5 0 V2 Z" fill="#6d6d6d"/><path d="M2 4.5 H6 M2 6.8 H5.5 M2 9 H6" stroke="#eee" stroke-width="1"/><circle cx="9.2" cy="7.2" r="3" fill="#bdbdbd"/></svg>
<div class="t" style="left:124.90px;top:678.07px;font-size:10.2px;color:#4d4d4d;transform:scaleX(0.9750);">Social Sciences (SS)</div>
<svg style="position:absolute;left:110.9px;top:696.2px;" width="7" height="8" viewBox="0 0 7 8"><path d="M0.3 0.3 V7.3 L6.3 3.8 Z" fill="#c4c4c4"/></svg>
<div style="left:117.40px;top:700.00px;width:7.20px;height:1.00px;background:repeating-linear-gradient(90deg,#cdcdcd 0 1px,transparent 1px 2px);"></div>
<svg style="position:absolute;left:125.6px;top:694.4px;" width="13" height="12" viewBox="0 0 13 12"><path d="M1 1 H12" stroke="#a8a8a8" stroke-width="1.5"/><path d="M0.5 3.3 H12.5" stroke="#999" stroke-width="1.5"/><path d="M0.5 5.6 H12.5" stroke="#858585" stroke-width="1.5"/><path d="M0.5 7.9 H12.5" stroke="#707070" stroke-width="1.5"/><path d="M1 10.2 H12" stroke="#5e5e5e" stroke-width="1.5"/></svg>
<div class="t" style="left:143.60px;top:695.57px;font-size:10.2px;color:#4d4d4d;transform:scaleX(0.9300);">1. Floor</div>
<div style="left:329.00px;top:64.00px;width:1108.00px;height:686.00px;background:#fff;"></div>
<div style="left:329.00px;top:64.00px;width:1.00px;height:686.00px;background:#e6e6e6;"></div>
<div class="t" style="left:547.00px;top:73.74px;font-size:12px;color:#666;font-weight:bold;transform:scaleX(0.9513);">RA-97-BIO-0006</div>
<div class="t" style="left:572.10px;top:96.38px;font-size:9px;color:#666;font-weight:bold;transform:scaleX(0.9390);">19" Rack</div>
<div class="t" style="left:793.80px;top:155.62px;font-size:8.6px;color:#222;transform:scaleX(0.9676);">Legend »</div>
<div style="left:349.00px;top:167.30px;width:482.00px;height:24.50px;background:linear-gradient(#f0efed,#e7e6e2 80%,#dcd8d2);"></div>
<div style="left:353.30px;top:171.30px;width:11.60px;height:17.30px;border:1px solid #c8c8c8;"></div>
<div class="t" style="left:356.00px;top:174.00px;font-size:13px;color:#f5a00a;font-weight:bold;transform:scaleX(0.7623);">1</div>
<div class="t" style="left:367.00px;top:174.00px;font-size:13px;color:#f5a00a;font-weight:bold;transform:scaleX(1.1781);">2</div>
<div class="t" style="left:379.00px;top:174.00px;font-size:13px;color:#777;transform:scaleX(1.0395);">3</div>
<div class="t" style="left:391.50px;top:174.00px;font-size:13px;color:#777;transform:scaleX(1.1781);">4</div>
<div style="left:792.10px;top:171.20px;width:17.30px;height:17.10px;border:1px solid #c8c8c8;"></div>
<div class="t" style="left:797.50px;top:174.42px;font-size:12.5px;color:#777;transform:scaleX(0.7869);">F</div>
<div class="t" style="left:814.50px;top:174.42px;font-size:12.5px;color:#777;transform:scaleX(0.8333);">R</div>
<div style="left:349.00px;top:192.80px;width:38.50px;height:35.70px;background:linear-gradient(#efeeec 0,#eae9e7 72%,#d8d4cc 100%);"></div>
<div style="left:792.00px;top:192.80px;width:39.00px;height:35.70px;background:linear-gradient(#efeeec 0,#eae9e7 72%,#d8d4cc 100%);"></div>
<div class="t" style="left:353.60px;top:203.90px;font-size:15px;color:#454545;font-weight:bold;transform:scaleX(0.9610);">42</div>
<div class="t" style="left:797.60px;top:203.90px;font-size:15px;color:#454545;font-weight:bold;transform:scaleX(0.9610);">42</div>
<div style="left:349.00px;top:229.30px;width:38.50px;height:35.70px;background:linear-gradient(#efeeec 0,#eae9e7 72%,#d8d4cc 100%);"></div>
<div style="left:792.00px;top:229.30px;width:39.00px;height:35.70px;background:linear-gradient(#efeeec 0,#eae9e7 72%,#d8d4cc 100%);"></div>
<div class="t" style="left:353.60px;top:240.40px;font-size:15px;color:#454545;font-weight:bold;transform:scaleX(0.9610);">41</div>
<div class="t" style="left:797.60px;top:240.40px;font-size:15px;color:#454545;font-weight:bold;transform:scaleX(0.9610);">41</div>
<div style="left:349.00px;top:265.80px;width:38.50px;height:35.70px;background:linear-gradient(#efeeec 0,#eae9e7 72%,#d8d4cc 100%);"></div>
<div style="left:792.00px;top:265.80px;width:39.00px;height:35.70px;background:linear-gradient(#efeeec 0,#eae9e7 72%,#d8d4cc 100%);"></div>
<div class="t" style="left:353.60px;top:276.90px;font-size:15px;color:#454545;font-weight:bold;transform:scaleX(0.9610);">40</div>
<div class="t" style="left:797.60px;top:276.90px;font-size:15px;color:#454545;font-weight:bold;transform:scaleX(0.9610);">40</div>
<div style="left:349.00px;top:302.30px;width:38.50px;height:35.70px;background:linear-gradient(#efeeec 0,#eae9e7 72%,#d8d4cc 100%);"></div>
<div style="left:792.00px;top:302.30px;width:39.00px;height:35.70px;background:linear-gradient(#efeeec 0,#eae9e7 72%,#d8d4cc 100%);"></div>
<div class="t" style="left:353.60px;top:313.40px;font-size:15px;color:#454545;font-weight:bold;transform:scaleX(0.9610);">39</div>
<div class="t" style="left:797.60px;top:313.40px;font-size:15px;color:#454545;font-weight:bold;transform:scaleX(0.9610);">39</div>
<div style="left:349.00px;top:338.80px;width:38.50px;height:35.70px;background:linear-gradient(#efeeec 0,#eae9e7 72%,#d8d4cc 100%);"></div>
<div style="left:792.00px;top:338.80px;width:39.00px;height:35.70px;background:linear-gradient(#efeeec 0,#eae9e7 72%,#d8d4cc 100%);"></div>
<div class="t" style="left:353.60px;top:349.90px;font-size:15px;color:#454545;font-weight:bold;transform:scaleX(0.9610);">38</div>
<div class="t" style="left:797.60px;top:349.90px;font-size:15px;color:#454545;font-weight:bold;transform:scaleX(0.9610);">38</div>
<div style="left:349.00px;top:375.30px;width:38.50px;height:35.70px;background:linear-gradient(#efeeec 0,#eae9e7 72%,#d8d4cc 100%);"></div>
<div style="left:792.00px;top:375.30px;width:39.00px;height:35.70px;background:linear-gradient(#efeeec 0,#eae9e7 72%,#d8d4cc 100%);"></div>
<div class="t" style="left:353.60px;top:386.40px;font-size:15px;color:#454545;font-weight:bold;transform:scaleX(0.9610);">37</div>
<div class="t" style="left:797.60px;top:386.40px;font-size:15px;color:#454545;font-weight:bold;transform:scaleX(0.9610);">37</div>
<div style="left:349.00px;top:411.80px;width:38.50px;height:35.70px;background:linear-gradient(#efeeec 0,#eae9e7 72%,#d8d4cc 100%);"></div>
<div style="left:792.00px;top:411.80px;width:39.00px;height:35.70px;background:linear-gradient(#efeeec 0,#eae9e7 72%,#d8d4cc 100%);"></div>
<div class="t" style="left:353.60px;top:422.90px;font-size:15px;color:#454545;font-weight:bold;transform:scaleX(0.9610);">36</div>
<div class="t" style="left:797.60px;top:422.90px;font-size:15px;color:#454545;font-weight:bold;transform:scaleX(0.9610);">36</div>
<div style="left:349.00px;top:448.30px;width:38.50px;height:35.70px;background:linear-gradient(#efeeec 0,#eae9e7 72%,#d8d4cc 100%);"></div>
<div style="left:792.00px;top:448.30px;width:39.00px;height:35.70px;background:linear-gradient(#efeeec 0,#eae9e7 72%,#d8d4cc 100%);"></div>
<div class="t" style="left:353.60px;top:459.40px;font-size:15px;color:#454545;font-weight:bold;transform:scaleX(0.9610);">35</div>
<div class="t" style="left:797.60px;top:459.40px;font-size:15px;color:#454545;font-weight:bold;transform:scaleX(0.9610);">35</div>
<div style="left:349.00px;top:484.80px;width:38.50px;height:35.70px;background:linear-gradient(#efeeec 0,#eae9e7 72%,#d8d4cc 100%);"></div>
<div style="left:792.00px;top:484.80px;width:39.00px;height:35.70px;background:linear-gradient(#efeeec 0,#eae9e7 72%,#d8d4cc 100%);"></div>
<div class="t" style="left:353.60px;top:495.90px;font-size:15px;color:#454545;font-weight:bold;transform:scaleX(0.9610);">34</div>
<div class="t" style="left:797.60px;top:495.90px;font-size:15px;color:#454545;font-weight:bold;transform:scaleX(0.9610);">34</div>
<div style="left:349.00px;top:521.30px;width:38.50px;height:35.70px;background:linear-gradient(#efeeec 0,#eae9e7 72%,#d8d4cc 100%);"></div>
<div style="left:792.00px;top:521.30px;width:39.00px;height:35.70px;background:linear-gradient(#efeeec 0,#eae9e7 72%,#d8d4cc 100%);"></div>
<div class="t" style="left:353.60px;top:532.40px;font-size:15px;color:#454545;font-weight:bold;transform:scaleX(0.9610);">33</div>
<div class="t" style="left:797.60px;top:532.40px;font-size:15px;color:#454545;font-weight:bold;transform:scaleX(0.9610);">33</div>
<div style="left:349.00px;top:557.80px;width:38.50px;height:35.70px;background:linear-gradient(#efeeec 0,#eae9e7 72%,#d8d4cc 100%);"></div>
<div style="left:792.00px;top:557.80px;width:39.00px;height:35.70px;background:linear-gradient(#efeeec 0,#eae9e7 72%,#d8d4cc 100%);"></div>
<div class="t" style="left:353.60px;top:568.90px;font-size:15px;color:#454545;font-weight:bold;transform:scaleX(0.9610);">32</div>
<div class="t" style="left:797.60px;top:568.90px;font-size:15px;color:#454545;font-weight:bold;transform:scaleX(0.9610);">32</div>
<div style="left:349.00px;top:594.30px;width:38.50px;height:35.70px;background:linear-gradient(#efeeec 0,#eae9e7 72%,#d8d4cc 100%);"></div>
<div style="left:792.00px;top:594.30px;width:39.00px;height:35.70px;background:linear-gradient(#efeeec 0,#eae9e7 72%,#d8d4cc 100%);"></div>
<div class="t" style="left:353.60px;top:605.40px;font-size:15px;color:#454545;font-weight:bold;transform:scaleX(0.9610);">31</div>
<div class="t" style="left:797.60px;top:605.40px;font-size:15px;color:#454545;font-weight:bold;transform:scaleX(0.9610);">31</div>
<div style="left:349.00px;top:630.80px;width:38.50px;height:35.70px;background:linear-gradient(#efeeec 0,#eae9e7 72%,#d8d4cc 100%);"></div>
<div style="left:792.00px;top:630.80px;width:39.00px;height:35.70px;background:linear-gradient(#efeeec 0,#eae9e7 72%,#d8d4cc 100%);"></div>
<div class="t" style="left:353.60px;top:641.90px;font-size:15px;color:#454545;font-weight:bold;transform:scaleX(0.9610);">30</div>
<div class="t" style="left:797.60px;top:641.90px;font-size:15px;color:#454545;font-weight:bold;transform:scaleX(0.9610);">30</div>
<div style="left:349.00px;top:667.30px;width:38.50px;height:35.70px;background:linear-gradient(#efeeec 0,#eae9e7 72%,#d8d4cc 100%);"></div>
<div style="left:792.00px;top:667.30px;width:39.00px;height:35.70px;background:linear-gradient(#efeeec 0,#eae9e7 72%,#d8d4cc 100%);"></div>
<div class="t" style="left:353.60px;top:678.40px;font-size:15px;color:#454545;font-weight:bold;transform:scaleX(0.9610);">29</div>
<div class="t" style="left:797.60px;top:678.40px;font-size:15px;color:#454545;font-weight:bold;transform:scaleX(0.9610);">29</div>
<div style="left:349.00px;top:703.80px;width:38.50px;height:35.70px;background:linear-gradient(#efeeec 0,#eae9e7 72%,#d8d4cc 100%);"></div>
<div style="left:792.00px;top:703.80px;width:39.00px;height:35.70px;background:linear-gradient(#efeeec 0,#eae9e7 72%,#d8d4cc 100%);"></div>
<div class="t" style="left:353.60px;top:714.90px;font-size:15px;color:#454545;font-weight:bold;transform:scaleX(0.9610);">28</div>
<div class="t" style="left:797.60px;top:714.90px;font-size:15px;color:#454545;font-weight:bold;transform:scaleX(0.9610);">28</div>
<div style="left:349.00px;top:740.30px;width:38.50px;height:35.70px;background:linear-gradient(#efeeec 0,#eae9e7 72%,#d8d4cc 100%);"></div>
<div style="left:792.00px;top:740.30px;width:39.00px;height:35.70px;background:linear-gradient(#efeeec 0,#eae9e7 72%,#d8d4cc 100%);"></div>
<div class="t" style="left:353.60px;top:751.40px;font-size:15px;color:#454545;font-weight:bold;transform:scaleX(0.9610);">27</div>
<div class="t" style="left:797.60px;top:751.40px;font-size:15px;color:#454545;font-weight:bold;transform:scaleX(0.9610);">27</div>
<div style="left:388.20px;top:193.10px;width:5.80px;height:35.90px;background:#b6b7bb;"></div>
<div style="left:786.20px;top:193.10px;width:5.80px;height:35.90px;background:#b6b7bb;"></div>
<div style="left:388.20px;top:229.60px;width:5.80px;height:72.40px;background:#b6b7bb;"></div>
<div style="left:786.20px;top:229.60px;width:5.80px;height:72.40px;background:#b6b7bb;"></div>
<div style="left:388.20px;top:302.60px;width:5.80px;height:72.40px;background:#b6b7bb;"></div>
<div style="left:786.20px;top:302.60px;width:5.80px;height:72.40px;background:#b6b7bb;"></div>
<div style="left:388.20px;top:375.60px;width:5.80px;height:35.90px;background:#b6b7bb;"></div>
<div style="left:786.20px;top:375.60px;width:5.80px;height:35.90px;background:#b6b7bb;"></div>
<div style="left:388.20px;top:412.10px;width:5.80px;height:35.90px;background:#b6b7bb;"></div>
<div style="left:786.20px;top:412.10px;width:5.80px;height:35.90px;background:#b6b7bb;"></div>
<div style="left:388.20px;top:448.60px;width:5.80px;height:72.40px;background:#b6b7bb;"></div>
<div style="left:786.20px;top:448.60px;width:5.80px;height:72.40px;background:#b6b7bb;"></div>
<div style="left:388.20px;top:521.60px;width:5.80px;height:35.90px;background:#b6b7bb;"></div>
<div style="left:786.20px;top:521.60px;width:5.80px;height:35.90px;background:#b6b7bb;"></div>
<div style="left:388.20px;top:558.10px;width:5.80px;height:35.90px;background:#b6b7bb;"></div>
<div style="left:786.20px;top:558.10px;width:5.80px;height:35.90px;background:#b6b7bb;"></div>
<div style="left:388.20px;top:594.60px;width:5.80px;height:35.90px;background:#b6b7bb;"></div>
<div style="left:786.20px;top:594.60px;width:5.80px;height:35.90px;background:#b6b7bb;"></div>
<div style="left:388.20px;top:631.10px;width:5.80px;height:35.90px;background:#b6b7bb;"></div>
<div style="left:786.20px;top:631.10px;width:5.80px;height:35.90px;background:#b6b7bb;"></div>
<div style="left:388.20px;top:667.60px;width:5.80px;height:35.90px;background:#b6b7bb;"></div>
<div style="left:786.20px;top:667.60px;width:5.80px;height:35.90px;background:#b6b7bb;"></div>
<div style="left:388.20px;top:704.10px;width:5.80px;height:72.40px;background:#b6b7bb;"></div>
<div style="left:786.20px;top:704.10px;width:5.80px;height:72.40px;background:#b6b7bb;"></div>
<div style="left:395.00px;top:193.10px;width:391.00px;height:35.20px;background:#fff;"></div>
<div style="left:395.00px;top:193.40px;width:391.00px;height:5.40px;background:#92bbe6;"></div>
<div style="left:395.00px;top:199.60px;width:391.00px;height:28.40px;background:linear-gradient(#e7eef8,#dbe6f2);"></div>
<div style="left:395.00px;top:227.40px;width:391.00px;height:1.30px;background:#c6c6c6;"></div>
<div style="left:776.00px;top:195.00px;width:3.00px;height:2.00px;background:#c4d8ef;"></div>
<div style="left:780.00px;top:195.00px;width:3.00px;height:2.00px;background:#c4d8ef;"></div>
<div class="t" style="left:453.40px;top:206.41px;font-size:19.6px;color:#b3b9c2;transform:scaleX(1.0046);">Knürr CoolBlastT 6 Fan Unit 16</div>
<div style="left:395.00px;top:229.60px;width:391.00px;height:72.20px;background:#fff;"></div>
<div style="left:395.00px;top:230.30px;width:391.00px;height:11.60px;background:linear-gradient(#9fc0e6,#8db0da 75%,#7f95b3 85%,#8a9bb0);"></div>
<div class="t" style="left:397.60px;top:231.03px;font-size:9.3px;color:#fff;transform:scaleX(0.9700);">PP-BIO-41</div>
<div class="t" style="left:764.50px;top:231.68px;font-size:9px;color:#fff;transform:scaleX(0.9000);">F</div>
<div class="t" style="left:774.50px;top:231.68px;font-size:9px;color:#fff;transform:scaleX(0.9000);">R</div>
<div style="left:395.00px;top:242.60px;width:391.00px;height:57.60px;background:#eef0f3;"></div>
<div style="left:395.00px;top:299.90px;width:391.00px;height:1.60px;background:#c2c2c2;"></div>
<div style="left:396.30px;top:245.20px;width:47.60px;height:50.80px;background:#fffde0;border:1px solid #d4d4c4;"></div>
<div class="t" style="left:406.10px;top:248.07px;font-size:8.3px;color:#333;transform:scaleX(0.9000);">1</div>
<div style="left:414.30px;top:249.80px;width:13.10px;height:4.40px;background:#243170;"></div>
<div style="left:416.50px;top:251.20px;width:1.60px;height:1.40px;background:#7d89b5;"></div>
<div style="left:420.00px;top:251.20px;width:1.60px;height:1.40px;background:#7d89b5;"></div>
<div style="left:423.50px;top:251.20px;width:1.60px;height:1.40px;background:#7d89b5;"></div>
<div class="t" style="left:406.10px;top:255.65px;font-size:8.3px;color:#333;transform:scaleX(0.9000);">2</div>
<div style="left:414.30px;top:257.38px;width:13.10px;height:4.40px;background:#243170;"></div>
<div style="left:416.50px;top:258.78px;width:1.60px;height:1.40px;background:#7d89b5;"></div>
<div style="left:420.00px;top:258.78px;width:1.60px;height:1.40px;background:#7d89b5;"></div>
<div style="left:423.50px;top:258.78px;width:1.60px;height:1.40px;background:#7d89b5;"></div>
<div class="t" style="left:406.10px;top:263.23px;font-size:8.3px;color:#333;transform:scaleX(0.9000);">3</div>
<div style="left:414.30px;top:264.96px;width:13.10px;height:4.40px;background:#243170;"></div>
<div style="left:416.50px;top:266.36px;width:1.60px;height:1.40px;background:#7d89b5;"></div>
<div style="left:420.00px;top:266.36px;width:1.60px;height:1.40px;background:#7d89b5;"></div>
<div style="left:423.50px;top:266.36px;width:1.60px;height:1.40px;background:#7d89b5;"></div>
<div class="t" style="left:406.10px;top:270.81px;font-size:8.3px;color:#333;transform:scaleX(0.9000);">4</div>
<div style="left:414.30px;top:272.54px;width:13.10px;height:4.40px;background:#243170;"></div>
<div style="left:416.50px;top:273.94px;width:1.60px;height:1.40px;background:#7d89b5;"></div>
<div style="left:420.00px;top:273.94px;width:1.60px;height:1.40px;background:#7d89b5;"></div>
<div style="left:423.50px;top:273.94px;width:1.60px;height:1.40px;background:#7d89b5;"></div>
<div class="t" style="left:406.10px;top:278.39px;font-size:8.3px;color:#333;transform:scaleX(0.9000);">5</div>
<div style="left:414.30px;top:280.12px;width:13.10px;height:4.40px;background:#243170;"></div>
<div style="left:416.50px;top:281.52px;width:1.60px;height:1.40px;background:#7d89b5;"></div>
<div style="left:420.00px;top:281.52px;width:1.60px;height:1.40px;background:#7d89b5;"></div>
<div style="left:423.50px;top:281.52px;width:1.60px;height:1.40px;background:#7d89b5;"></div>
<div class="t" style="left:406.10px;top:285.97px;font-size:8.3px;color:#333;transform:scaleX(0.9000);">6</div>
<div style="left:414.30px;top:287.70px;width:13.10px;height:4.40px;background:#243170;"></div>
<div style="left:416.50px;top:289.10px;width:1.60px;height:1.40px;background:#7d89b5;"></div>
<div style="left:420.00px;top:289.10px;width:1.60px;height:1.40px;background:#7d89b5;"></div>
<div style="left:423.50px;top:289.10px;width:1.60px;height:1.40px;background:#7d89b5;"></div>
<div style="left:408.00px;top:247.70px;width:24.60px;height:8.20px;border:2px solid #cccc66;"></div>
<div style="left:444.70px;top:245.20px;width:47.60px;height:50.80px;background:#fffde0;border:1px solid #d4d4c4;"></div>
<div class="t" style="left:454.50px;top:248.07px;font-size:8.3px;color:#333;transform:scaleX(0.9000);">1</div>
<div style="left:462.60px;top:249.80px;width:13.10px;height:4.40px;background:#243170;"></div>
<div style="left:464.80px;top:251.20px;width:1.60px;height:1.40px;background:#7d89b5;"></div>
<div style="left:468.30px;top:251.20px;width:1.60px;height:1.40px;background:#7d89b5;"></div>
<div style="left:471.80px;top:251.20px;width:1.60px;height:1.40px;background:#7d89b5;"></div>
<div class="t" style="left:454.50px;top:255.65px;font-size:8.3px;color:#333;transform:scaleX(0.9000);">2</div>
<div style="left:462.60px;top:257.38px;width:13.10px;height:4.40px;background:#243170;"></div>
<div style="left:464.80px;top:258.78px;width:1.60px;height:1.40px;background:#7d89b5;"></div>
<div style="left:468.30px;top:258.78px;width:1.60px;height:1.40px;background:#7d89b5;"></div>
<div style="left:471.80px;top:258.78px;width:1.60px;height:1.40px;background:#7d89b5;"></div>
<div class="t" style="left:454.50px;top:263.23px;font-size:8.3px;color:#333;transform:scaleX(0.9000);">3</div>
<div style="left:462.60px;top:264.96px;width:13.10px;height:4.40px;background:#243170;"></div>
<div style="left:464.80px;top:266.36px;width:1.60px;height:1.40px;background:#7d89b5;"></div>
<div style="left:468.30px;top:266.36px;width:1.60px;height:1.40px;background:#7d89b5;"></div>
<div style="left:471.80px;top:266.36px;width:1.60px;height:1.40px;background:#7d89b5;"></div>
<div class="t" style="left:454.50px;top:270.81px;font-size:8.3px;color:#333;transform:scaleX(0.9000);">4</div>
<div style="left:462.60px;top:272.54px;width:13.10px;height:4.40px;background:#243170;"></div>
<div style="left:464.80px;top:273.94px;width:1.60px;height:1.40px;background:#7d89b5;"></div>
<div style="left:468.30px;top:273.94px;width:1.60px;height:1.40px;background:#7d89b5;"></div>
<div style="left:471.80px;top:273.94px;width:1.60px;height:1.40px;background:#7d89b5;"></div>
<div class="t" style="left:454.50px;top:278.39px;font-size:8.3px;color:#333;transform:scaleX(0.9000);">5</div>
<div style="left:462.60px;top:280.12px;width:13.10px;height:4.40px;background:#243170;"></div>
<div style="left:464.80px;top:281.52px;width:1.60px;height:1.40px;background:#7d89b5;"></div>
<div style="left:468.30px;top:281.52px;width:1.60px;height:1.40px;background:#7d89b5;"></div>
<div style="left:471.80px;top:281.52px;width:1.60px;height:1.40px;background:#7d89b5;"></div>
<div class="t" style="left:454.50px;top:285.97px;font-size:8.3px;color:#333;transform:scaleX(0.9000);">6</div>
<div style="left:462.60px;top:287.70px;width:13.10px;height:4.40px;background:#243170;"></div>
<div style="left:464.80px;top:289.10px;width:1.60px;height:1.40px;background:#7d89b5;"></div>
<div style="left:468.30px;top:289.10px;width:1.60px;height:1.40px;background:#7d89b5;"></div>
<div style="left:471.80px;top:289.10px;width:1.60px;height:1.40px;background:#7d89b5;"></div>
<div style="left:493.10px;top:245.20px;width:47.60px;height:50.80px;background:linear-gradient(135deg,#f3f3f3,#e6e6e6);border:1px solid #c6c6c6;"></div>
<div class="t" style="left:516.90px;top:264.06px;font-size:16px;color:#c6c6c6;font-weight:bold;transform:translateX(-50%);">C</div>
<div style="left:541.50px;top:245.20px;width:47.60px;height:50.80px;background:linear-gradient(135deg,#f3f3f3,#e6e6e6);border:1px solid #c6c6c6;"></div>
<div class="t" style="left:565.30px;top:264.06px;font-size:16px;color:#c6c6c6;font-weight:bold;transform:translateX(-50%);">D</div>
<div style="left:589.90px;top:245.20px;width:47.60px;height:50.80px;background:linear-gradient(135deg,#f3f3f3,#e6e6e6);border:1px solid #c6c6c6;"></div>
<div class="t" style="left:613.70px;top:264.06px;font-size:16px;color:#c6c6c6;font-weight:bold;transform:translateX(-50%);">E</div>
<div style="left:638.30px;top:245.20px;width:47.60px;height:50.80px;background:linear-gradient(135deg,#f3f3f3,#e6e6e6);border:1px solid #c6c6c6;"></div>
<div class="t" style="left:662.10px;top:264.06px;font-size:16px;color:#c6c6c6;font-weight:bold;transform:translateX(-50%);">F</div>
<div style="left:686.70px;top:245.20px;width:47.60px;height:50.80px;background:linear-gradient(135deg,#f3f3f3,#e6e6e6);border:1px solid #c6c6c6;"></div>
<div class="t" style="left:710.50px;top:264.06px;font-size:16px;color:#c6c6c6;font-weight:bold;transform:translateX(-50%);">G</div>
<div style="left:735.10px;top:245.20px;width:47.60px;height:50.80px;background:linear-gradient(135deg,#f3f3f3,#e6e6e6);border:1px solid #c6c6c6;"></div>
<div class="t" style="left:758.90px;top:264.06px;font-size:16px;color:#c6c6c6;font-weight:bold;transform:translateX(-50%);">H</div>
<div style="left:395.00px;top:302.60px;width:391.00px;height:72.20px;background:#fff;"></div>
<div style="left:395.00px;top:303.30px;width:391.00px;height:11.60px;background:linear-gradient(#9fc0e6,#8db0da 75%,#7f95b3 85%,#8a9bb0);"></div>
<div class="t" style="left:397.60px;top:304.03px;font-size:9.3px;color:#fff;transform:scaleX(0.9700);">PP-BIO-39</div>
<div class="t" style="left:764.50px;top:304.68px;font-size:9px;color:#fff;transform:scaleX(0.9000);">F</div>
<div class="t" style="left:774.50px;top:304.68px;font-size:9px;color:#fff;transform:scaleX(0.9000);">R</div>
<div style="left:395.00px;top:315.60px;width:391.00px;height:57.60px;background:#eef0f3;"></div>
<div style="left:395.00px;top:372.90px;width:391.00px;height:1.60px;background:#c2c2c2;"></div>
<div style="left:396.30px;top:318.20px;width:47.60px;height:50.80px;background:#fffde0;border:1px solid #d4d4c4;"></div>
<div class="t" style="left:406.10px;top:321.07px;font-size:8.3px;color:#333;transform:scaleX(0.9000);">1</div>
<div style="left:414.30px;top:322.80px;width:13.10px;height:4.40px;background:#243170;"></div>
<div style="left:416.50px;top:324.20px;width:1.60px;height:1.40px;background:#7d89b5;"></div>
<div style="left:420.00px;top:324.20px;width:1.60px;height:1.40px;background:#7d89b5;"></div>
<div style="left:423.50px;top:324.20px;width:1.60px;height:1.40px;background:#7d89b5;"></div>
<div class="t" style="left:406.10px;top:328.65px;font-size:8.3px;color:#333;transform:scaleX(0.9000);">2</div>
<div style="left:414.30px;top:330.38px;width:13.10px;height:4.40px;background:#243170;"></div>
<div style="left:416.50px;top:331.78px;width:1.60px;height:1.40px;background:#7d89b5;"></div>
<div style="left:420.00px;top:331.78px;width:1.60px;height:1.40px;background:#7d89b5;"></div>
<div style="left:423.50px;top:331.78px;width:1.60px;height:1.40px;background:#7d89b5;"></div>
<div class="t" style="left:406.10px;top:336.23px;font-size:8.3px;color:#333;transform:scaleX(0.9000);">3</div>
<div style="left:414.30px;top:337.96px;width:13.10px;height:4.40px;background:#243170;"></div>
<div style="left:416.50px;top:339.36px;width:1.60px;height:1.40px;background:#7d89b5;"></div>
<div style="left:420.00px;top:339.36px;width:1.60px;height:1.40px;background:#7d89b5;"></div>
<div style="left:423.50px;top:339.36px;width:1.60px;height:1.40px;background:#7d89b5;"></div>
<div class="t" style="left:406.10px;top:343.81px;font-size:8.3px;color:#333;transform:scaleX(0.9000);">4</div>
<div style="left:414.30px;top:345.54px;width:13.10px;height:4.40px;background:#243170;"></div>
<div style="left:416.50px;top:346.94px;width:1.60px;height:1.40px;background:#7d89b5;"></div>
<div style="left:420.00px;top:346.94px;width:1.60px;height:1.40px;background:#7d89b5;"></div>
<div style="left:423.50px;top:346.94px;width:1.60px;height:1.40px;background:#7d89b5;"></div>
<div class="t" style="left:406.10px;top:351.39px;font-size:8.3px;color:#333;transform:scaleX(0.9000);">5</div>
<div style="left:414.30px;top:353.12px;width:13.10px;height:4.40px;background:#243170;"></div>
<div style="left:416.50px;top:354.52px;width:1.60px;height:1.40px;background:#7d89b5;"></div>
<div style="left:420.00px;top:354.52px;width:1.60px;height:1.40px;background:#7d89b5;"></div>
<div style="left:423.50px;top:354.52px;width:1.60px;height:1.40px;background:#7d89b5;"></div>
<div class="t" style="left:406.10px;top:358.97px;font-size:8.3px;color:#333;transform:scaleX(0.9000);">6</div>
<div style="left:414.30px;top:360.70px;width:13.10px;height:4.40px;background:#243170;"></div>
<div style="left:416.50px;top:362.10px;width:1.60px;height:1.40px;background:#7d89b5;"></div>
<div style="left:420.00px;top:362.10px;width:1.60px;height:1.40px;background:#7d89b5;"></div>
<div style="left:423.50px;top:362.10px;width:1.60px;height:1.40px;background:#7d89b5;"></div>
<div style="left:408.00px;top:320.70px;width:24.60px;height:8.20px;border:2px solid #cccc66;"></div>
<div style="left:444.70px;top:318.20px;width:47.60px;height:50.80px;background:#fffde0;border:1px solid #d4d4c4;"></div>
<div class="t" style="left:454.50px;top:321.07px;font-size:8.3px;color:#333;transform:scaleX(0.9000);">1</div>
<div style="left:462.60px;top:322.80px;width:13.10px;height:4.40px;background:#243170;"></div>
<div style="left:464.80px;top:324.20px;width:1.60px;height:1.40px;background:#7d89b5;"></div>
<div style="left:468.30px;top:324.20px;width:1.60px;height:1.40px;background:#7d89b5;"></div>
<div style="left:471.80px;top:324.20px;width:1.60px;height:1.40px;background:#7d89b5;"></div>
<div class="t" style="left:454.50px;top:328.65px;font-size:8.3px;color:#333;transform:scaleX(0.9000);">2</div>
<div style="left:462.60px;top:330.38px;width:13.10px;height:4.40px;background:#243170;"></div>
<div style="left:464.80px;top:331.78px;width:1.60px;height:1.40px;background:#7d89b5;"></div>
<div style="left:468.30px;top:331.78px;width:1.60px;height:1.40px;background:#7d89b5;"></div>
<div style="left:471.80px;top:331.78px;width:1.60px;height:1.40px;background:#7d89b5;"></div>
<div class="t" style="left:454.50px;top:336.23px;font-size:8.3px;color:#333;transform:scaleX(0.9000);">3</div>
<div style="left:462.60px;top:337.96px;width:13.10px;height:4.40px;background:#243170;"></div>
<div style="left:464.80px;top:339.36px;width:1.60px;height:1.40px;background:#7d89b5;"></div>
<div style="left:468.30px;top:339.36px;width:1.60px;height:1.40px;background:#7d89b5;"></div>
<div style="left:471.80px;top:339.36px;width:1.60px;height:1.40px;background:#7d89b5;"></div>
<div class="t" style="left:454.50px;top:343.81px;font-size:8.3px;color:#333;transform:scaleX(0.9000);">4</div>
<div style="left:462.60px;top:345.54px;width:13.10px;height:4.40px;background:#243170;"></div>
<div style="left:464.80px;top:346.94px;width:1.60px;height:1.40px;background:#7d89b5;"></div>
<div style="left:468.30px;top:346.94px;width:1.60px;height:1.40px;background:#7d89b5;"></div>
<div style="left:471.80px;top:346.94px;width:1.60px;height:1.40px;background:#7d89b5;"></div>
<div class="t" style="left:454.50px;top:351.39px;font-size:8.3px;color:#333;transform:scaleX(0.9000);">5</div>
<div style="left:462.60px;top:353.12px;width:13.10px;height:4.40px;background:#243170;"></div>
<div style="left:464.80px;top:354.52px;width:1.60px;height:1.40px;background:#7d89b5;"></div>
<div style="left:468.30px;top:354.52px;width:1.60px;height:1.40px;background:#7d89b5;"></div>
<div style="left:471.80px;top:354.52px;width:1.60px;height:1.40px;background:#7d89b5;"></div>
<div class="t" style="left:454.50px;top:358.97px;font-size:8.3px;color:#333;transform:scaleX(0.9000);">6</div>
<div style="left:462.60px;top:360.70px;width:13.10px;height:4.40px;background:#243170;"></div>
<div style="left:464.80px;top:362.10px;width:1.60px;height:1.40px;background:#7d89b5;"></div>
<div style="left:468.30px;top:362.10px;width:1.60px;height:1.40px;background:#7d89b5;"></div>
<div style="left:471.80px;top:362.10px;width:1.60px;height:1.40px;background:#7d89b5;"></div>
<div style="left:493.10px;top:318.20px;width:47.60px;height:50.80px;background:linear-gradient(135deg,#f3f3f3,#e6e6e6);border:1px solid #c6c6c6;"></div>
<div class="t" style="left:516.90px;top:337.06px;font-size:16px;color:#c6c6c6;font-weight:bold;transform:translateX(-50%);">C</div>
<div style="left:541.50px;top:318.20px;width:47.60px;height:50.80px;background:linear-gradient(135deg,#f3f3f3,#e6e6e6);border:1px solid #c6c6c6;"></div>
<div class="t" style="left:565.30px;top:337.06px;font-size:16px;color:#c6c6c6;font-weight:bold;transform:translateX(-50%);">D</div>
<div style="left:589.90px;top:318.20px;width:47.60px;height:50.80px;background:linear-gradient(135deg,#f3f3f3,#e6e6e6);border:1px solid #c6c6c6;"></div>
<div class="t" style="left:613.70px;top:337.06px;font-size:16px;color:#c6c6c6;font-weight:bold;transform:translateX(-50%);">E</div>
<div style="left:638.30px;top:318.20px;width:47.60px;height:50.80px;background:linear-gradient(135deg,#f3f3f3,#e6e6e6);border:1px solid #c6c6c6;"></div>
<div class="t" style="left:662.10px;top:337.06px;font-size:16px;color:#c6c6c6;font-weight:bold;transform:translateX(-50%);">F</div>
<div style="left:686.70px;top:318.20px;width:47.60px;height:50.80px;background:linear-gradient(135deg,#f3f3f3,#e6e6e6);border:1px solid #c6c6c6;"></div>
<div class="t" style="left:710.50px;top:337.06px;font-size:16px;color:#c6c6c6;font-weight:bold;transform:translateX(-50%);">G</div>
<div style="left:735.10px;top:318.20px;width:47.60px;height:50.80px;background:linear-gradient(135deg,#f3f3f3,#e6e6e6);border:1px solid #c6c6c6;"></div>
<div class="t" style="left:758.90px;top:337.06px;font-size:16px;color:#c6c6c6;font-weight:bold;transform:translateX(-50%);">H</div>
<div style="left:395.00px;top:375.60px;width:391.00px;height:35.20px;background:#fff;"></div>
<div style="left:395.00px;top:375.90px;width:391.00px;height:5.40px;background:#92bbe6;"></div>
<div style="left:395.00px;top:382.10px;width:391.00px;height:28.40px;background:linear-gradient(#f1f3f6,#e7ebf0);"></div>
<div style="left:395.00px;top:409.90px;width:391.00px;height:1.30px;background:#c6c6c6;"></div>
<div style="left:776.00px;top:377.50px;width:3.00px;height:2.00px;background:#c4d8ef;"></div>
<div style="left:780.00px;top:377.50px;width:3.00px;height:2.00px;background:#c4d8ef;"></div>
<div class="t" style="left:480.00px;top:387.71px;font-size:19.6px;color:#c0c4ca;transform:scaleX(0.9926);">Cable Management Panel</div>
<div style="left:395.00px;top:412.10px;width:391.00px;height:35.20px;background:#fff;"></div>
<div style="left:395.00px;top:412.40px;width:391.00px;height:5.40px;background:#92bbe6;"></div>
<div style="left:395.00px;top:418.60px;width:391.00px;height:28.40px;background:linear-gradient(#e4ecf6,#d8e4f1);"></div>
<div style="left:395.00px;top:446.40px;width:391.00px;height:1.30px;background:#c6c6c6;"></div>
<div style="left:776.00px;top:414.00px;width:3.00px;height:2.00px;background:#c4d8ef;"></div>
<div style="left:780.00px;top:414.00px;width:3.00px;height:2.00px;background:#c4d8ef;"></div>
<div style="left:395.00px;top:448.60px;width:391.00px;height:72.20px;background:#fff;"></div>
<div style="left:395.00px;top:449.30px;width:391.00px;height:11.60px;background:linear-gradient(#9fc0e6,#8db0da 75%,#7f95b3 85%,#8a9bb0);"></div>
<div class="t" style="left:397.60px;top:450.03px;font-size:9.3px;color:#fff;transform:scaleX(0.9700);">Cable Management Panel</div>
<div class="t" style="left:764.50px;top:450.68px;font-size:9px;color:#fff;transform:scaleX(0.9000);">F</div>
<div class="t" style="left:774.50px;top:450.68px;font-size:9px;color:#fff;transform:scaleX(0.9000);">R</div>
<div style="left:395.00px;top:461.60px;width:391.00px;height:57.60px;background:linear-gradient(#f0f2f6,#e9ecf0);"></div>
<div style="left:395.00px;top:518.90px;width:391.00px;height:1.60px;background:#c2c2c2;"></div>
<div class="t" style="left:396.50px;top:473.63px;font-size:34.7px;color:#c4c4c4;transform:scaleX(0.9653);">Cable Management Panel</div>
<div style="left:395.00px;top:521.60px;width:391.00px;height:35.20px;background:#fff;"></div>
<div style="left:395.00px;top:521.90px;width:391.00px;height:5.40px;background:#92bbe6;"></div>
<div style="left:395.00px;top:528.10px;width:391.00px;height:28.40px;background:linear-gradient(#f1f3f6,#e7ebf0);"></div>
<div style="left:395.00px;top:555.90px;width:391.00px;height:1.30px;background:#c6c6c6;"></div>
<div style="left:776.00px;top:523.50px;width:3.00px;height:2.00px;background:#c4d8ef;"></div>
<div style="left:780.00px;top:523.50px;width:3.00px;height:2.00px;background:#c4d8ef;"></div>
<div style="left:395.00px;top:558.10px;width:391.00px;height:35.20px;background:#fff;"></div>
<div style="left:395.00px;top:558.40px;width:391.00px;height:5.40px;background:#92bbe6;"></div>
<div style="left:395.00px;top:564.60px;width:391.00px;height:28.40px;background:linear-gradient(#f1f3f6,#e7ebf0);"></div>
<div style="left:395.00px;top:592.40px;width:391.00px;height:1.30px;background:#c6c6c6;"></div>
<div style="left:776.00px;top:560.00px;width:3.00px;height:2.00px;background:#c4d8ef;"></div>
<div style="left:780.00px;top:560.00px;width:3.00px;height:2.00px;background:#c4d8ef;"></div>
<div style="left:395.00px;top:594.60px;width:391.00px;height:35.20px;background:#fff;"></div>
<div style="left:395.00px;top:594.90px;width:391.00px;height:5.40px;background:#92bbe6;"></div>
<div style="left:395.00px;top:601.10px;width:391.00px;height:28.40px;background:linear-gradient(#f1f3f6,#e7ebf0);"></div>
<div style="left:395.00px;top:628.90px;width:391.00px;height:1.30px;background:#c6c6c6;"></div>
<div style="left:776.00px;top:596.50px;width:3.00px;height:2.00px;background:#c4d8ef;"></div>
<div style="left:780.00px;top:596.50px;width:3.00px;height:2.00px;background:#c4d8ef;"></div>
<div class="t" style="left:540.00px;top:607.51px;font-size:19.6px;color:#c0c4ca;">Blind Panel</div>
<div style="left:395.00px;top:631.10px;width:391.00px;height:35.20px;background:#fff;"></div>
<div style="left:395.00px;top:631.40px;width:391.00px;height:5.40px;background:#92bbe6;"></div>
<div style="left:395.00px;top:637.60px;width:391.00px;height:28.40px;background:linear-gradient(#d6e8cf,#c6dcbc);"></div>
<div style="left:395.00px;top:665.40px;width:391.00px;height:1.30px;background:#c6c6c6;"></div>
<div style="left:776.00px;top:633.00px;width:3.00px;height:2.00px;background:#c4d8ef;"></div>
<div style="left:780.00px;top:633.00px;width:3.00px;height:2.00px;background:#c4d8ef;"></div>
<div style="left:395.00px;top:667.60px;width:391.00px;height:35.20px;background:#fff;"></div>
<div style="left:395.00px;top:667.90px;width:391.00px;height:5.40px;background:#92bbe6;"></div>
<div style="left:395.00px;top:674.10px;width:391.00px;height:28.40px;background:linear-gradient(#d6e8cf,#c6dcbc);"></div>
<div style="left:395.00px;top:701.90px;width:391.00px;height:1.30px;background:#c6c6c6;"></div>
<div style="left:776.00px;top:669.50px;width:3.00px;height:2.00px;background:#c4d8ef;"></div>
<div style="left:780.00px;top:669.50px;width:3.00px;height:2.00px;background:#c4d8ef;"></div>
<div style="left:395.00px;top:704.10px;width:391.00px;height:72.20px;background:#fff;"></div>
<div style="left:395.00px;top:704.80px;width:391.00px;height:11.60px;background:linear-gradient(#9fc0e6,#8db0da 75%,#7f95b3 85%,#8a9bb0);"></div>
<div class="t" style="left:397.60px;top:705.53px;font-size:9.3px;color:#fff;transform:scaleX(0.9700);">Cable Management Panel</div>
<div class="t" style="left:764.50px;top:706.18px;font-size:9px;color:#fff;transform:scaleX(0.9000);">F</div>
<div class="t" style="left:774.50px;top:706.18px;font-size:9px;color:#fff;transform:scaleX(0.9000);">R</div>
<div style="left:395.00px;top:717.10px;width:391.00px;height:57.60px;background:linear-gradient(#f0f2f6,#e9ecf0);"></div>
<div style="left:395.00px;top:774.40px;width:391.00px;height:1.60px;background:#c2c2c2;"></div>
<div class="t" style="left:396.50px;top:729.13px;font-size:34.7px;color:#c4c4c4;transform:scaleX(0.9653);">Cable Management Panel</div>
<svg style="position:absolute;left:405.2px;top:540.4px;" width="7" height="7" viewBox="0 0 7 7"><rect x="0.1" y="0.2" width="6.6" height="1.8" fill="#c4c8d0"/><path d="M0.1 2 H6.7 V4.2 L5.4 6.3 H1.4 L0.1 4.2 Z" fill="#178f17"/></svg>
<div class="t" style="left:408.60px;top:533.63px;font-size:8px;color:#333;transform:scaleX(0.8500);transform:translateX(-50%) scaleX(0.85);">1</div>
<svg style="position:absolute;left:420.7px;top:540.4px;" width="7" height="7" viewBox="0 0 7 7"><rect x="0.1" y="0.2" width="6.6" height="1.8" fill="#c4c8d0"/><path d="M0.1 2 H6.7 V4.2 L5.4 6.3 H1.4 L0.1 4.2 Z" fill="#23419b"/></svg>
<div class="t" style="left:424.10px;top:533.63px;font-size:8px;color:#333;transform:scaleX(0.8500);transform:translateX(-50%) scaleX(0.85);">2</div>
<svg style="position:absolute;left:436.2px;top:540.4px;" width="7" height="7" viewBox="0 0 7 7"><rect x="0.1" y="0.2" width="6.6" height="1.8" fill="#c4c8d0"/><path d="M0.1 2 H6.7 V4.2 L5.4 6.3 H1.4 L0.1 4.2 Z" fill="#178f17"/></svg>
<div class="t" style="left:439.60px;top:533.63px;font-size:8px;color:#333;transform:scaleX(0.8500);transform:translateX(-50%) scaleX(0.85);">3</div>
<svg style="position:absolute;left:451.7px;top:540.4px;" width="7" height="7" viewBox="0 0 7 7"><rect x="0.1" y="0.2" width="6.6" height="1.8" fill="#c4c8d0"/><path d="M0.1 2 H6.7 V4.2 L5.4 6.3 H1.4 L0.1 4.2 Z" fill="#178f17"/></svg>
<div class="t" style="left:455.10px;top:533.63px;font-size:8px;color:#333;transform:scaleX(0.8500);transform:translateX(-50%) scaleX(0.85);">4</div>
<svg style="position:absolute;left:467.2px;top:540.4px;" width="7" height="7" viewBox="0 0 7 7"><rect x="0.1" y="0.2" width="6.6" height="1.8" fill="#c4c8d0"/><path d="M0.1 2 H6.7 V4.2 L5.4 6.3 H1.4 L0.1 4.2 Z" fill="#178f17"/></svg>
<div class="t" style="left:470.60px;top:533.63px;font-size:8px;color:#333;transform:scaleX(0.8500);transform:translateX(-50%) scaleX(0.85);">5</div>
<svg style="position:absolute;left:482.7px;top:540.4px;" width="7" height="7" viewBox="0 0 7 7"><rect x="0.1" y="0.2" width="6.6" height="1.8" fill="#c4c8d0"/><path d="M0.1 2 H6.7 V4.2 L5.4 6.3 H1.4 L0.1 4.2 Z" fill="#23419b"/></svg>
<div class="t" style="left:486.10px;top:533.63px;font-size:8px;color:#333;transform:scaleX(0.8500);transform:translateX(-50%) scaleX(0.85);">6</div>
<svg style="position:absolute;left:498.2px;top:540.4px;" width="7" height="7" viewBox="0 0 7 7"><rect x="0.1" y="0.2" width="6.6" height="1.8" fill="#c4c8d0"/><path d="M0.1 2 H6.7 V4.2 L5.4 6.3 H1.4 L0.1 4.2 Z" fill="#178f17"/></svg>
<div class="t" style="left:501.60px;top:533.63px;font-size:8px;color:#333;transform:scaleX(0.8500);transform:translateX(-50%) scaleX(0.85);">7</div>
<svg style="position:absolute;left:513.7px;top:540.4px;" width="7" height="7" viewBox="0 0 7 7"><rect x="0.1" y="0.2" width="6.6" height="1.8" fill="#c4c8d0"/><path d="M0.1 2 H6.7 V4.2 L5.4 6.3 H1.4 L0.1 4.2 Z" fill="#23419b"/></svg>
<div class="t" style="left:517.10px;top:533.63px;font-size:8px;color:#333;transform:scaleX(0.8500);transform:translateX(-50%) scaleX(0.85);">8</div>
<svg style="position:absolute;left:529.2px;top:540.4px;" width="7" height="7" viewBox="0 0 7 7"><rect x="0.1" y="0.2" width="6.6" height="1.8" fill="#c4c8d0"/><path d="M0.1 2 H6.7 V4.2 L5.4 6.3 H1.4 L0.1 4.2 Z" fill="#178f17"/></svg>
<div class="t" style="left:532.60px;top:533.63px;font-size:8px;color:#333;transform:scaleX(0.8500);transform:translateX(-50%) scaleX(0.85);">9</div>
<svg style="position:absolute;left:544.7px;top:540.4px;" width="7" height="7" viewBox="0 0 7 7"><rect x="0.1" y="0.2" width="6.6" height="1.8" fill="#c4c8d0"/><path d="M0.1 2 H6.7 V4.2 L5.4 6.3 H1.4 L0.1 4.2 Z" fill="#23419b"/></svg>
<div class="t" style="left:548.10px;top:533.63px;font-size:8px;color:#333;transform:scaleX(0.8500);transform:translateX(-50%) scaleX(0.85);">10</div>
<svg style="position:absolute;left:560.2px;top:540.4px;" width="7" height="7" viewBox="0 0 7 7"><rect x="0.1" y="0.2" width="6.6" height="1.8" fill="#c4c8d0"/><path d="M0.1 2 H6.7 V4.2 L5.4 6.3 H1.4 L0.1 4.2 Z" fill="#178f17"/></svg>
<div class="t" style="left:563.60px;top:533.63px;font-size:8px;color:#333;transform:scaleX(0.8500);transform:translateX(-50%) scaleX(0.85);">11</div>
<svg style="position:absolute;left:575.7px;top:540.4px;" width="7" height="7" viewBox="0 0 7 7"><rect x="0.1" y="0.2" width="6.6" height="1.8" fill="#c4c8d0"/><path d="M0.1 2 H6.7 V4.2 L5.4 6.3 H1.4 L0.1 4.2 Z" fill="#23419b"/></svg>
<div class="t" style="left:579.10px;top:533.63px;font-size:8px;color:#333;transform:scaleX(0.8500);transform:translateX(-50%) scaleX(0.85);">12</div>
<svg style="position:absolute;left:591.2px;top:540.4px;" width="7" height="7" viewBox="0 0 7 7"><rect x="0.1" y="0.2" width="6.6" height="1.8" fill="#c4c8d0"/><path d="M0.1 2 H6.7 V4.2 L5.4 6.3 H1.4 L0.1 4.2 Z" fill="#178f17"/></svg>
<div class="t" style="left:594.60px;top:533.63px;font-size:8px;color:#333;transform:scaleX(0.8500);transform:translateX(-50%) scaleX(0.85);">13</div>
<svg style="position:absolute;left:606.7px;top:540.4px;" width="7" height="7" viewBox="0 0 7 7"><rect x="0.1" y="0.2" width="6.6" height="1.8" fill="#c4c8d0"/><path d="M0.1 2 H6.7 V4.2 L5.4 6.3 H1.4 L0.1 4.2 Z" fill="#23419b"/></svg>
<div class="t" style="left:610.10px;top:533.63px;font-size:8px;color:#333;transform:scaleX(0.8500);transform:translateX(-50%) scaleX(0.85);">14</div>
<svg style="position:absolute;left:622.2px;top:540.4px;" width="7" height="7" viewBox="0 0 7 7"><rect x="0.1" y="0.2" width="6.6" height="1.8" fill="#c4c8d0"/><path d="M0.1 2 H6.7 V4.2 L5.4 6.3 H1.4 L0.1 4.2 Z" fill="#178f17"/></svg>
<div class="t" style="left:625.60px;top:533.63px;font-size:8px;color:#333;transform:scaleX(0.8500);transform:translateX(-50%) scaleX(0.85);">15</div>
<svg style="position:absolute;left:637.7px;top:540.4px;" width="7" height="7" viewBox="0 0 7 7"><rect x="0.1" y="0.2" width="6.6" height="1.8" fill="#c4c8d0"/><path d="M0.1 2 H6.7 V4.2 L5.4 6.3 H1.4 L0.1 4.2 Z" fill="#23419b"/></svg>
<div class="t" style="left:641.10px;top:533.63px;font-size:8px;color:#333;transform:scaleX(0.8500);transform:translateX(-50%) scaleX(0.85);">16</div>
<svg style="position:absolute;left:653.2px;top:540.4px;" width="7" height="7" viewBox="0 0 7 7"><rect x="0.1" y="0.2" width="6.6" height="1.8" fill="#c4c8d0"/><path d="M0.1 2 H6.7 V4.2 L5.4 6.3 H1.4 L0.1 4.2 Z" fill="#178f17"/></svg>
<div class="t" style="left:656.60px;top:533.63px;font-size:8px;color:#333;transform:scaleX(0.8500);transform:translateX(-50%) scaleX(0.85);">17</div>
<svg style="position:absolute;left:668.7px;top:540.4px;" width="7" height="7" viewBox="0 0 7 7"><rect x="0.1" y="0.2" width="6.6" height="1.8" fill="#c4c8d0"/><path d="M0.1 2 H6.7 V4.2 L5.4 6.3 H1.4 L0.1 4.2 Z" fill="#23419b"/></svg>
<div class="t" style="left:672.10px;top:533.63px;font-size:8px;color:#333;transform:scaleX(0.8500);transform:translateX(-50%) scaleX(0.85);">18</div>
<svg style="position:absolute;left:684.2px;top:540.4px;" width="7" height="7" viewBox="0 0 7 7"><rect x="0.1" y="0.2" width="6.6" height="1.8" fill="#c4c8d0"/><path d="M0.1 2 H6.7 V4.2 L5.4 6.3 H1.4 L0.1 4.2 Z" fill="#178f17"/></svg>
<div class="t" style="left:687.60px;top:533.63px;font-size:8px;color:#333;transform:scaleX(0.8500);transform:translateX(-50%) scaleX(0.85);">19</div>
<svg style="position:absolute;left:699.7px;top:540.4px;" width="7" height="7" viewBox="0 0 7 7"><rect x="0.1" y="0.2" width="6.6" height="1.8" fill="#c4c8d0"/><path d="M0.1 2 H6.7 V4.2 L5.4 6.3 H1.4 L0.1 4.2 Z" fill="#23419b"/></svg>
<div class="t" style="left:703.10px;top:533.63px;font-size:8px;color:#333;transform:scaleX(0.8500);transform:translateX(-50%) scaleX(0.85);">20</div>
<svg style="position:absolute;left:715.2px;top:540.4px;" width="7" height="7" viewBox="0 0 7 7"><rect x="0.1" y="0.2" width="6.6" height="1.8" fill="#c4c8d0"/><path d="M0.1 2 H6.7 V4.2 L5.4 6.3 H1.4 L0.1 4.2 Z" fill="#178f17"/></svg>
<div class="t" style="left:718.60px;top:533.63px;font-size:8px;color:#333;transform:scaleX(0.8500);transform:translateX(-50%) scaleX(0.85);">21</div>
<svg style="position:absolute;left:730.7px;top:540.4px;" width="7" height="7" viewBox="0 0 7 7"><rect x="0.1" y="0.2" width="6.6" height="1.8" fill="#c4c8d0"/><path d="M0.1 2 H6.7 V4.2 L5.4 6.3 H1.4 L0.1 4.2 Z" fill="#23419b"/></svg>
<div class="t" style="left:734.10px;top:533.63px;font-size:8px;color:#333;transform:scaleX(0.8500);transform:translateX(-50%) scaleX(0.85);">22</div>
<svg style="position:absolute;left:746.2px;top:540.4px;" width="7" height="7" viewBox="0 0 7 7"><rect x="0.1" y="0.2" width="6.6" height="1.8" fill="#c4c8d0"/><path d="M0.1 2 H6.7 V4.2 L5.4 6.3 H1.4 L0.1 4.2 Z" fill="#178f17"/></svg>
<div class="t" style="left:749.60px;top:533.63px;font-size:8px;color:#333;transform:scaleX(0.8500);transform:translateX(-50%) scaleX(0.85);">23</div>
<svg style="position:absolute;left:761.7px;top:540.4px;" width="7" height="7" viewBox="0 0 7 7"><rect x="0.1" y="0.2" width="6.6" height="1.8" fill="#c4c8d0"/><path d="M0.1 2 H6.7 V4.2 L5.4 6.3 H1.4 L0.1 4.2 Z" fill="#23419b"/></svg>
<div class="t" style="left:765.10px;top:533.63px;font-size:8px;color:#333;transform:scaleX(0.8500);transform:translateX(-50%) scaleX(0.85);">24</div>
<svg style="position:absolute;left:405.2px;top:576.9px;" width="7" height="7" viewBox="0 0 7 7"><rect x="0.1" y="0.2" width="6.6" height="1.8" fill="#c4c8d0"/><path d="M0.1 2 H6.7 V4.2 L5.4 6.3 H1.4 L0.1 4.2 Z" fill="#178f17"/></svg>
<div class="t" style="left:408.60px;top:570.13px;font-size:8px;color:#333;transform:scaleX(0.8500);transform:translateX(-50%) scaleX(0.85);">1</div>
<svg style="position:absolute;left:420.7px;top:576.9px;" width="7" height="7" viewBox="0 0 7 7"><rect x="0.1" y="0.2" width="6.6" height="1.8" fill="#c4c8d0"/><path d="M0.1 2 H6.7 V4.2 L5.4 6.3 H1.4 L0.1 4.2 Z" fill="#23419b"/></svg>
<div class="t" style="left:424.10px;top:570.13px;font-size:8px;color:#333;transform:scaleX(0.8500);transform:translateX(-50%) scaleX(0.85);">2</div>
<svg style="position:absolute;left:436.2px;top:576.9px;" width="7" height="7" viewBox="0 0 7 7"><rect x="0.1" y="0.2" width="6.6" height="1.8" fill="#c4c8d0"/><path d="M0.1 2 H6.7 V4.2 L5.4 6.3 H1.4 L0.1 4.2 Z" fill="#178f17"/></svg>
<div class="t" style="left:439.60px;top:570.13px;font-size:8px;color:#333;transform:scaleX(0.8500);transform:translateX(-50%) scaleX(0.85);">3</div>
<svg style="position:absolute;left:451.7px;top:576.9px;" width="7" height="7" viewBox="0 0 7 7"><rect x="0.1" y="0.2" width="6.6" height="1.8" fill="#c4c8d0"/><path d="M0.1 2 H6.7 V4.2 L5.4 6.3 H1.4 L0.1 4.2 Z" fill="#23419b"/></svg>
<div class="t" style="left:455.10px;top:570.13px;font-size:8px;color:#333;transform:scaleX(0.8500);transform:translateX(-50%) scaleX(0.85);">4</div>
<svg style="position:absolute;left:467.2px;top:576.9px;" width="7" height="7" viewBox="0 0 7 7"><rect x="0.1" y="0.2" width="6.6" height="1.8" fill="#c4c8d0"/><path d="M0.1 2 H6.7 V4.2 L5.4 6.3 H1.4 L0.1 4.2 Z" fill="#178f17"/></svg>
<div class="t" style="left:470.60px;top:570.13px;font-size:8px;color:#333;transform:scaleX(0.8500);transform:translateX(-50%) scaleX(0.85);">5</div>
<svg style="position:absolute;left:482.7px;top:576.9px;" width="7" height="7" viewBox="0 0 7 7"><rect x="0.1" y="0.2" width="6.6" height="1.8" fill="#c4c8d0"/><path d="M0.1 2 H6.7 V4.2 L5.4 6.3 H1.4 L0.1 4.2 Z" fill="#23419b"/></svg>
<div class="t" style="left:486.10px;top:570.13px;font-size:8px;color:#333;transform:scaleX(0.8500);transform:translateX(-50%) scaleX(0.85);">6</div>
<svg style="position:absolute;left:498.2px;top:576.9px;" width="7" height="7" viewBox="0 0 7 7"><rect x="0.1" y="0.2" width="6.6" height="1.8" fill="#c4c8d0"/><path d="M0.1 2 H6.7 V4.2 L5.4 6.3 H1.4 L0.1 4.2 Z" fill="#178f17"/></svg>
<div class="t" style="left:501.60px;top:570.13px;font-size:8px;color:#333;transform:scaleX(0.8500);transform:translateX(-50%) scaleX(0.85);">7</div>
<svg style="position:absolute;left:513.7px;top:576.9px;" width="7" height="7" viewBox="0 0 7 7"><rect x="0.1" y="0.2" width="6.6" height="1.8" fill="#c4c8d0"/><path d="M0.1 2 H6.7 V4.2 L5.4 6.3 H1.4 L0.1 4.2 Z" fill="#178f17"/></svg>
<div class="t" style="left:517.10px;top:570.13px;font-size:8px;color:#333;transform:scaleX(0.8500);transform:translateX(-50%) scaleX(0.85);">8</div>
<svg style="position:absolute;left:529.2px;top:576.9px;" width="7" height="7" viewBox="0 0 7 7"><rect x="0.1" y="0.2" width="6.6" height="1.8" fill="#c4c8d0"/><path d="M0.1 2 H6.7 V4.2 L5.4 6.3 H1.4 L0.1 4.2 Z" fill="#178f17"/></svg>
<div class="t" style="left:532.60px;top:570.13px;font-size:8px;color:#333;transform:scaleX(0.8500);transform:translateX(-50%) scaleX(0.85);">9</div>
<svg style="position:absolute;left:544.7px;top:576.9px;" width="7" height="7" viewBox="0 0 7 7"><rect x="0.1" y="0.2" width="6.6" height="1.8" fill="#c4c8d0"/><path d="M0.1 2 H6.7 V4.2 L5.4 6.3 H1.4 L0.1 4.2 Z" fill="#178f17"/></svg>
<div class="t" style="left:548.10px;top:570.13px;font-size:8px;color:#333;transform:scaleX(0.8500);transform:translateX(-50%) scaleX(0.85);">10</div>
<svg style="position:absolute;left:560.2px;top:576.9px;" width="7" height="7" viewBox="0 0 7 7"><rect x="0.1" y="0.2" width="6.6" height="1.8" fill="#c4c8d0"/><path d="M0.1 2 H6.7 V4.2 L5.4 6.3 H1.4 L0.1 4.2 Z" fill="#3e3e3e"/></svg>
<div class="t" style="left:563.60px;top:570.13px;font-size:8px;color:#333;transform:scaleX(0.8500);transform:translateX(-50%) scaleX(0.85);">11</div>
<svg style="position:absolute;left:575.7px;top:576.9px;" width="7" height="7" viewBox="0 0 7 7"><rect x="0.1" y="0.2" width="6.6" height="1.8" fill="#c4c8d0"/><path d="M0.1 2 H6.7 V4.2 L5.4 6.3 H1.4 L0.1 4.2 Z" fill="#3e3e3e"/></svg>
<div class="t" style="left:579.10px;top:570.13px;font-size:8px;color:#333;transform:scaleX(0.8500);transform:translateX(-50%) scaleX(0.85);">12</div>
<svg style="position:absolute;left:591.2px;top:576.9px;" width="7" height="7" viewBox="0 0 7 7"><rect x="0.1" y="0.2" width="6.6" height="1.8" fill="#c4c8d0"/><path d="M0.1 2 H6.7 V4.2 L5.4 6.3 H1.4 L0.1 4.2 Z" fill="#3e3e3e"/></svg>
<div class="t" style="left:594.60px;top:570.13px;font-size:8px;color:#333;transform:scaleX(0.8500);transform:translateX(-50%) scaleX(0.85);">13</div>
<svg style="position:absolute;left:606.7px;top:576.9px;" width="7" height="7" viewBox="0 0 7 7"><rect x="0.1" y="0.2" width="6.6" height="1.8" fill="#c4c8d0"/><path d="M0.1 2 H6.7 V4.2 L5.4 6.3 H1.4 L0.1 4.2 Z" fill="#3e3e3e"/></svg>
<div class="t" style="left:610.10px;top:570.13px;font-size:8px;color:#333;transform:scaleX(0.8500);transform:translateX(-50%) scaleX(0.85);">14</div>
<svg style="position:absolute;left:622.2px;top:576.9px;" width="7" height="7" viewBox="0 0 7 7"><rect x="0.1" y="0.2" width="6.6" height="1.8" fill="#c4c8d0"/><path d="M0.1 2 H6.7 V4.2 L5.4 6.3 H1.4 L0.1 4.2 Z" fill="#3e3e3e"/></svg>
<div class="t" style="left:625.60px;top:570.13px;font-size:8px;color:#333;transform:scaleX(0.8500);transform:translateX(-50%) scaleX(0.85);">15</div>
<svg style="position:absolute;left:637.7px;top:576.9px;" width="7" height="7" viewBox="0 0 7 7"><rect x="0.1" y="0.2" width="6.6" height="1.8" fill="#c4c8d0"/><path d="M0.1 2 H6.7 V4.2 L5.4 6.3 H1.4 L0.1 4.2 Z" fill="#3e3e3e"/></svg>
<div class="t" style="left:641.10px;top:570.13px;font-size:8px;color:#333;transform:scaleX(0.8500);transform:translateX(-50%) scaleX(0.85);">16</div>
<svg style="position:absolute;left:653.2px;top:576.9px;" width="7" height="7" viewBox="0 0 7 7"><rect x="0.1" y="0.2" width="6.6" height="1.8" fill="#c4c8d0"/><path d="M0.1 2 H6.7 V4.2 L5.4 6.3 H1.4 L0.1 4.2 Z" fill="#3e3e3e"/></svg>
<div class="t" style="left:656.60px;top:570.13px;font-size:8px;color:#333;transform:scaleX(0.8500);transform:translateX(-50%) scaleX(0.85);">17</div>
<svg style="position:absolute;left:668.7px;top:576.9px;" width="7" height="7" viewBox="0 0 7 7"><rect x="0.1" y="0.2" width="6.6" height="1.8" fill="#c4c8d0"/><path d="M0.1 2 H6.7 V4.2 L5.4 6.3 H1.4 L0.1 4.2 Z" fill="#3e3e3e"/></svg>
<div class="t" style="left:672.10px;top:570.13px;font-size:8px;color:#333;transform:scaleX(0.8500);transform:translateX(-50%) scaleX(0.85);">18</div>
<svg style="position:absolute;left:684.2px;top:576.9px;" width="7" height="7" viewBox="0 0 7 7"><rect x="0.1" y="0.2" width="6.6" height="1.8" fill="#c4c8d0"/><path d="M0.1 2 H6.7 V4.2 L5.4 6.3 H1.4 L0.1 4.2 Z" fill="#3e3e3e"/></svg>
<div class="t" style="left:687.60px;top:570.13px;font-size:8px;color:#333;transform:scaleX(0.8500);transform:translateX(-50%) scaleX(0.85);">19</div>
<svg style="position:absolute;left:699.7px;top:576.9px;" width="7" height="7" viewBox="0 0 7 7"><rect x="0.1" y="0.2" width="6.6" height="1.8" fill="#c4c8d0"/><path d="M0.1 2 H6.7 V4.2 L5.4 6.3 H1.4 L0.1 4.2 Z" fill="#3e3e3e"/></svg>
<div class="t" style="left:703.10px;top:570.13px;font-size:8px;color:#333;transform:scaleX(0.8500);transform:translateX(-50%) scaleX(0.85);">20</div>
<svg style="position:absolute;left:715.2px;top:576.9px;" width="7" height="7" viewBox="0 0 7 7"><rect x="0.1" y="0.2" width="6.6" height="1.8" fill="#c4c8d0"/><path d="M0.1 2 H6.7 V4.2 L5.4 6.3 H1.4 L0.1 4.2 Z" fill="#3e3e3e"/></svg>
<div class="t" style="left:718.60px;top:570.13px;font-size:8px;color:#333;transform:scaleX(0.8500);transform:translateX(-50%) scaleX(0.85);">21</div>
<svg style="position:absolute;left:730.7px;top:576.9px;" width="7" height="7" viewBox="0 0 7 7"><rect x="0.1" y="0.2" width="6.6" height="1.8" fill="#c4c8d0"/><path d="M0.1 2 H6.7 V4.2 L5.4 6.3 H1.4 L0.1 4.2 Z" fill="#3e3e3e"/></svg>
<div class="t" style="left:734.10px;top:570.13px;font-size:8px;color:#333;transform:scaleX(0.8500);transform:translateX(-50%) scaleX(0.85);">22</div>
<svg style="position:absolute;left:746.2px;top:576.9px;" width="7" height="7" viewBox="0 0 7 7"><rect x="0.1" y="0.2" width="6.6" height="1.8" fill="#c4c8d0"/><path d="M0.1 2 H6.7 V4.2 L5.4 6.3 H1.4 L0.1 4.2 Z" fill="#3e3e3e"/></svg>
<div class="t" style="left:749.60px;top:570.13px;font-size:8px;color:#333;transform:scaleX(0.8500);transform:translateX(-50%) scaleX(0.85);">23</div>
<svg style="position:absolute;left:761.7px;top:576.9px;" width="7" height="7" viewBox="0 0 7 7"><rect x="0.1" y="0.2" width="6.6" height="1.8" fill="#c4c8d0"/><path d="M0.1 2 H6.7 V4.2 L5.4 6.3 H1.4 L0.1 4.2 Z" fill="#3e3e3e"/></svg>
<div class="t" style="left:765.10px;top:570.13px;font-size:8px;color:#333;transform:scaleX(0.8500);transform:translateX(-50%) scaleX(0.85);">24</div>
<svg style="position:absolute;left:431.2px;top:651.6px;" width="7" height="7" viewBox="0 0 7 7"><rect x="0.1" y="0.2" width="6.6" height="1.8" fill="#c4c8d0"/><path d="M0.1 2 H6.7 V4.2 L5.4 6.3 H1.4 L0.1 4.2 Z" fill="#178f17"/></svg>
<div class="t" style="left:434.60px;top:644.97px;font-size:7.6px;color:#333;transform:scaleX(0.8000);transform:translateX(-50%) scaleX(0.8);">1</div>
<svg style="position:absolute;left:431.2px;top:688.1px;" width="7" height="7" viewBox="0 0 7 7"><rect x="0.1" y="0.2" width="6.6" height="1.8" fill="#c4c8d0"/><path d="M0.1 2 H6.7 V4.2 L5.4 6.3 H1.4 L0.1 4.2 Z" fill="#178f17"/></svg>
<div class="t" style="left:434.60px;top:681.47px;font-size:7.6px;color:#333;transform:scaleX(0.8000);transform:translateX(-50%) scaleX(0.8);">1</div>
<svg style="position:absolute;left:443.97px;top:651.6px;" width="7" height="7" viewBox="0 0 7 7"><rect x="0.1" y="0.2" width="6.6" height="1.8" fill="#c4c8d0"/><path d="M0.1 2 H6.7 V4.2 L5.4 6.3 H1.4 L0.1 4.2 Z" fill="#23419b"/></svg>
<div class="t" style="left:447.37px;top:644.97px;font-size:7.6px;color:#333;transform:scaleX(0.8000);transform:translateX(-50%) scaleX(0.8);">2</div>
<svg style="position:absolute;left:443.97px;top:688.1px;" width="7" height="7" viewBox="0 0 7 7"><rect x="0.1" y="0.2" width="6.6" height="1.8" fill="#c4c8d0"/><path d="M0.1 2 H6.7 V4.2 L5.4 6.3 H1.4 L0.1 4.2 Z" fill="#23419b"/></svg>
<div class="t" style="left:447.37px;top:681.47px;font-size:7.6px;color:#333;transform:scaleX(0.8000);transform:translateX(-50%) scaleX(0.8);">2</div>
<svg style="position:absolute;left:456.74px;top:651.6px;" width="7" height="7" viewBox="0 0 7 7"><rect x="0.1" y="0.2" width="6.6" height="1.8" fill="#c4c8d0"/><path d="M0.1 2 H6.7 V4.2 L5.4 6.3 H1.4 L0.1 4.2 Z" fill="#178f17"/></svg>
<div class="t" style="left:460.14px;top:644.97px;font-size:7.6px;color:#333;transform:scaleX(0.8000);transform:translateX(-50%) scaleX(0.8);">3</div>
<svg style="position:absolute;left:456.74px;top:688.1px;" width="7" height="7" viewBox="0 0 7 7"><rect x="0.1" y="0.2" width="6.6" height="1.8" fill="#c4c8d0"/><path d="M0.1 2 H6.7 V4.2 L5.4 6.3 H1.4 L0.1 4.2 Z" fill="#178f17"/></svg>
<div class="t" style="left:460.14px;top:681.47px;font-size:7.6px;color:#333;transform:scaleX(0.8000);transform:translateX(-50%) scaleX(0.8);">3</div>
<svg style="position:absolute;left:469.51px;top:651.6px;" width="7" height="7" viewBox="0 0 7 7"><rect x="0.1" y="0.2" width="6.6" height="1.8" fill="#c4c8d0"/><path d="M0.1 2 H6.7 V4.2 L5.4 6.3 H1.4 L0.1 4.2 Z" fill="#23419b"/></svg>
<div class="t" style="left:472.91px;top:644.97px;font-size:7.6px;color:#333;transform:scaleX(0.8000);transform:translateX(-50%) scaleX(0.8);">4</div>
<svg style="position:absolute;left:469.51px;top:688.1px;" width="7" height="7" viewBox="0 0 7 7"><rect x="0.1" y="0.2" width="6.6" height="1.8" fill="#c4c8d0"/><path d="M0.1 2 H6.7 V4.2 L5.4 6.3 H1.4 L0.1 4.2 Z" fill="#23419b"/></svg>
<div class="t" style="left:472.91px;top:681.47px;font-size:7.6px;color:#333;transform:scaleX(0.8000);transform:translateX(-50%) scaleX(0.8);">4</div>
<svg style="position:absolute;left:482.28px;top:651.6px;" width="7" height="7" viewBox="0 0 7 7"><rect x="0.1" y="0.2" width="6.6" height="1.8" fill="#c4c8d0"/><path d="M0.1 2 H6.7 V4.2 L5.4 6.3 H1.4 L0.1 4.2 Z" fill="#178f17"/></svg>
<div class="t" style="left:485.68px;top:644.97px;font-size:7.6px;color:#333;transform:scaleX(0.8000);transform:translateX(-50%) scaleX(0.8);">5</div>
<svg style="position:absolute;left:482.28px;top:688.1px;" width="7" height="7" viewBox="0 0 7 7"><rect x="0.1" y="0.2" width="6.6" height="1.8" fill="#c4c8d0"/><path d="M0.1 2 H6.7 V4.2 L5.4 6.3 H1.4 L0.1 4.2 Z" fill="#178f17"/></svg>
<div class="t" style="left:485.68px;top:681.47px;font-size:7.6px;color:#333;transform:scaleX(0.8000);transform:translateX(-50%) scaleX(0.8);">5</div>
<svg style="position:absolute;left:495.05px;top:651.6px;" width="7" height="7" viewBox="0 0 7 7"><rect x="0.1" y="0.2" width="6.6" height="1.8" fill="#c4c8d0"/><path d="M0.1 2 H6.7 V4.2 L5.4 6.3 H1.4 L0.1 4.2 Z" fill="#23419b"/></svg>
<div class="t" style="left:498.45px;top:644.97px;font-size:7.6px;color:#333;transform:scaleX(0.8000);transform:translateX(-50%) scaleX(0.8);">6</div>
<svg style="position:absolute;left:495.05px;top:688.1px;" width="7" height="7" viewBox="0 0 7 7"><rect x="0.1" y="0.2" width="6.6" height="1.8" fill="#c4c8d0"/><path d="M0.1 2 H6.7 V4.2 L5.4 6.3 H1.4 L0.1 4.2 Z" fill="#23419b"/></svg>
<div class="t" style="left:498.45px;top:681.47px;font-size:7.6px;color:#333;transform:scaleX(0.8000);transform:translateX(-50%) scaleX(0.8);">6</div>
<svg style="position:absolute;left:507.82px;top:651.6px;" width="7" height="7" viewBox="0 0 7 7"><rect x="0.1" y="0.2" width="6.6" height="1.8" fill="#c4c8d0"/><path d="M0.1 2 H6.7 V4.2 L5.4 6.3 H1.4 L0.1 4.2 Z" fill="#178f17"/></svg>
<div class="t" style="left:511.22px;top:644.97px;font-size:7.6px;color:#333;transform:scaleX(0.8000);transform:translateX(-50%) scaleX(0.8);">7</div>
<svg style="position:absolute;left:507.82px;top:688.1px;" width="7" height="7" viewBox="0 0 7 7"><rect x="0.1" y="0.2" width="6.6" height="1.8" fill="#c4c8d0"/><path d="M0.1 2 H6.7 V4.2 L5.4 6.3 H1.4 L0.1 4.2 Z" fill="#3e3e3e"/></svg>
<div class="t" style="left:511.22px;top:681.47px;font-size:7.6px;color:#333;transform:scaleX(0.8000);transform:translateX(-50%) scaleX(0.8);">7</div>
<svg style="position:absolute;left:520.59px;top:651.6px;" width="7" height="7" viewBox="0 0 7 7"><rect x="0.1" y="0.2" width="6.6" height="1.8" fill="#c4c8d0"/><path d="M0.1 2 H6.7 V4.2 L5.4 6.3 H1.4 L0.1 4.2 Z" fill="#23419b"/></svg>
<div class="t" style="left:523.99px;top:644.97px;font-size:7.6px;color:#333;transform:scaleX(0.8000);transform:translateX(-50%) scaleX(0.8);">8</div>
<svg style="position:absolute;left:520.59px;top:688.1px;" width="7" height="7" viewBox="0 0 7 7"><rect x="0.1" y="0.2" width="6.6" height="1.8" fill="#c4c8d0"/><path d="M0.1 2 H6.7 V4.2 L5.4 6.3 H1.4 L0.1 4.2 Z" fill="#3e3e3e"/></svg>
<div class="t" style="left:523.99px;top:681.47px;font-size:7.6px;color:#333;transform:scaleX(0.8000);transform:translateX(-50%) scaleX(0.8);">8</div>
<svg style="position:absolute;left:533.36px;top:651.6px;" width="7" height="7" viewBox="0 0 7 7"><rect x="0.1" y="0.2" width="6.6" height="1.8" fill="#c4c8d0"/><path d="M0.1 2 H6.7 V4.2 L5.4 6.3 H1.4 L0.1 4.2 Z" fill="#178f17"/></svg>
<div class="t" style="left:536.76px;top:644.97px;font-size:7.6px;color:#333;transform:scaleX(0.8000);transform:translateX(-50%) scaleX(0.8);">9</div>
<svg style="position:absolute;left:533.36px;top:688.1px;" width="7" height="7" viewBox="0 0 7 7"><rect x="0.1" y="0.2" width="6.6" height="1.8" fill="#c4c8d0"/><path d="M0.1 2 H6.7 V4.2 L5.4 6.3 H1.4 L0.1 4.2 Z" fill="#3e3e3e"/></svg>
<div class="t" style="left:536.76px;top:681.47px;font-size:7.6px;color:#333;transform:scaleX(0.8000);transform:translateX(-50%) scaleX(0.8);">9</div>
<svg style="position:absolute;left:546.13px;top:651.6px;" width="7" height="7" viewBox="0 0 7 7"><rect x="0.1" y="0.2" width="6.6" height="1.8" fill="#c4c8d0"/><path d="M0.1 2 H6.7 V4.2 L5.4 6.3 H1.4 L0.1 4.2 Z" fill="#23419b"/></svg>
<div class="t" style="left:549.53px;top:644.97px;font-size:7.6px;color:#333;transform:scaleX(0.8000);transform:translateX(-50%) scaleX(0.8);">10</div>
<svg style="position:absolute;left:546.13px;top:688.1px;" width="7" height="7" viewBox="0 0 7 7"><rect x="0.1" y="0.2" width="6.6" height="1.8" fill="#c4c8d0"/><path d="M0.1 2 H6.7 V4.2 L5.4 6.3 H1.4 L0.1 4.2 Z" fill="#3e3e3e"/></svg>
<div class="t" style="left:549.53px;top:681.47px;font-size:7.6px;color:#333;transform:scaleX(0.8000);transform:translateX(-50%) scaleX(0.8);">10</div>
<svg style="position:absolute;left:558.9px;top:651.6px;" width="7" height="7" viewBox="0 0 7 7"><rect x="0.1" y="0.2" width="6.6" height="1.8" fill="#c4c8d0"/><path d="M0.1 2 H6.7 V4.2 L5.4 6.3 H1.4 L0.1 4.2 Z" fill="#178f17"/></svg>
<div class="t" style="left:562.30px;top:644.97px;font-size:7.6px;color:#333;transform:scaleX(0.8000);transform:translateX(-50%) scaleX(0.8);">11</div>
<svg style="position:absolute;left:558.9px;top:688.1px;" width="7" height="7" viewBox="0 0 7 7"><rect x="0.1" y="0.2" width="6.6" height="1.8" fill="#c4c8d0"/><path d="M0.1 2 H6.7 V4.2 L5.4 6.3 H1.4 L0.1 4.2 Z" fill="#3e3e3e"/></svg>
<div class="t" style="left:562.30px;top:681.47px;font-size:7.6px;color:#333;transform:scaleX(0.8000);transform:translateX(-50%) scaleX(0.8);">11</div>
<svg style="position:absolute;left:571.67px;top:651.6px;" width="7" height="7" viewBox="0 0 7 7"><rect x="0.1" y="0.2" width="6.6" height="1.8" fill="#c4c8d0"/><path d="M0.1 2 H6.7 V4.2 L5.4 6.3 H1.4 L0.1 4.2 Z" fill="#23419b"/></svg>
<div class="t" style="left:575.07px;top:644.97px;font-size:7.6px;color:#333;transform:scaleX(0.8000);transform:translateX(-50%) scaleX(0.8);">12</div>
<svg style="position:absolute;left:571.67px;top:688.1px;" width="7" height="7" viewBox="0 0 7 7"><rect x="0.1" y="0.2" width="6.6" height="1.8" fill="#c4c8d0"/><path d="M0.1 2 H6.7 V4.2 L5.4 6.3 H1.4 L0.1 4.2 Z" fill="#3e3e3e"/></svg>
<div class="t" style="left:575.07px;top:681.47px;font-size:7.6px;color:#333;transform:scaleX(0.8000);transform:translateX(-50%) scaleX(0.8);">12</div>
<svg style="position:absolute;left:584.44px;top:651.6px;" width="7" height="7" viewBox="0 0 7 7"><rect x="0.1" y="0.2" width="6.6" height="1.8" fill="#c4c8d0"/><path d="M0.1 2 H6.7 V4.2 L5.4 6.3 H1.4 L0.1 4.2 Z" fill="#178f17"/></svg>
<div class="t" style="left:587.84px;top:644.97px;font-size:7.6px;color:#333;transform:scaleX(0.8000);transform:translateX(-50%) scaleX(0.8);">13</div>
<svg style="position:absolute;left:584.44px;top:688.1px;" width="7" height="7" viewBox="0 0 7 7"><rect x="0.1" y="0.2" width="6.6" height="1.8" fill="#c4c8d0"/><path d="M0.1 2 H6.7 V4.2 L5.4 6.3 H1.4 L0.1 4.2 Z" fill="#3e3e3e"/></svg>
<div class="t" style="left:587.84px;top:681.47px;font-size:7.6px;color:#333;transform:scaleX(0.8000);transform:translateX(-50%) scaleX(0.8);">13</div>
<svg style="position:absolute;left:597.21px;top:651.6px;" width="7" height="7" viewBox="0 0 7 7"><rect x="0.1" y="0.2" width="6.6" height="1.8" fill="#c4c8d0"/><path d="M0.1 2 H6.7 V4.2 L5.4 6.3 H1.4 L0.1 4.2 Z" fill="#23419b"/></svg>
<div class="t" style="left:600.61px;top:644.97px;font-size:7.6px;color:#333;transform:scaleX(0.8000);transform:translateX(-50%) scaleX(0.8);">14</div>
<svg style="position:absolute;left:597.21px;top:688.1px;" width="7" height="7" viewBox="0 0 7 7"><rect x="0.1" y="0.2" width="6.6" height="1.8" fill="#c4c8d0"/><path d="M0.1 2 H6.7 V4.2 L5.4 6.3 H1.4 L0.1 4.2 Z" fill="#3e3e3e"/></svg>
<div class="t" style="left:600.61px;top:681.47px;font-size:7.6px;color:#333;transform:scaleX(0.8000);transform:translateX(-50%) scaleX(0.8);">14</div>
<svg style="position:absolute;left:609.98px;top:651.6px;" width="7" height="7" viewBox="0 0 7 7"><rect x="0.1" y="0.2" width="6.6" height="1.8" fill="#c4c8d0"/><path d="M0.1 2 H6.7 V4.2 L5.4 6.3 H1.4 L0.1 4.2 Z" fill="#178f17"/></svg>
<div class="t" style="left:613.38px;top:644.97px;font-size:7.6px;color:#333;transform:scaleX(0.8000);transform:translateX(-50%) scaleX(0.8);">15</div>
<svg style="position:absolute;left:609.98px;top:688.1px;" width="7" height="7" viewBox="0 0 7 7"><rect x="0.1" y="0.2" width="6.6" height="1.8" fill="#c4c8d0"/><path d="M0.1 2 H6.7 V4.2 L5.4 6.3 H1.4 L0.1 4.2 Z" fill="#3e3e3e"/></svg>
<div class="t" style="left:613.38px;top:681.47px;font-size:7.6px;color:#333;transform:scaleX(0.8000);transform:translateX(-50%) scaleX(0.8);">15</div>
<svg style="position:absolute;left:622.75px;top:651.6px;" width="7" height="7" viewBox="0 0 7 7"><rect x="0.1" y="0.2" width="6.6" height="1.8" fill="#c4c8d0"/><path d="M0.1 2 H6.7 V4.2 L5.4 6.3 H1.4 L0.1 4.2 Z" fill="#23419b"/></svg>
<div class="t" style="left:626.15px;top:644.97px;font-size:7.6px;color:#333;transform:scaleX(0.8000);transform:translateX(-50%) scaleX(0.8);">16</div>
<svg style="position:absolute;left:622.75px;top:688.1px;" width="7" height="7" viewBox="0 0 7 7"><rect x="0.1" y="0.2" width="6.6" height="1.8" fill="#c4c8d0"/><path d="M0.1 2 H6.7 V4.2 L5.4 6.3 H1.4 L0.1 4.2 Z" fill="#3e3e3e"/></svg>
<div class="t" style="left:626.15px;top:681.47px;font-size:7.6px;color:#333;transform:scaleX(0.8000);transform:translateX(-50%) scaleX(0.8);">16</div>
<svg style="position:absolute;left:635.52px;top:651.6px;" width="7" height="7" viewBox="0 0 7 7"><rect x="0.1" y="0.2" width="6.6" height="1.8" fill="#c4c8d0"/><path d="M0.1 2 H6.7 V4.2 L5.4 6.3 H1.4 L0.1 4.2 Z" fill="#178f17"/></svg>
<div class="t" style="left:638.92px;top:644.97px;font-size:7.6px;color:#333;transform:scaleX(0.8000);transform:translateX(-50%) scaleX(0.8);">17</div>
<svg style="position:absolute;left:635.52px;top:688.1px;" width="7" height="7" viewBox="0 0 7 7"><rect x="0.1" y="0.2" width="6.6" height="1.8" fill="#c4c8d0"/><path d="M0.1 2 H6.7 V4.2 L5.4 6.3 H1.4 L0.1 4.2 Z" fill="#3e3e3e"/></svg>
<div class="t" style="left:638.92px;top:681.47px;font-size:7.6px;color:#333;transform:scaleX(0.8000);transform:translateX(-50%) scaleX(0.8);">17</div>
<svg style="position:absolute;left:648.29px;top:651.6px;" width="7" height="7" viewBox="0 0 7 7"><rect x="0.1" y="0.2" width="6.6" height="1.8" fill="#c4c8d0"/><path d="M0.1 2 H6.7 V4.2 L5.4 6.3 H1.4 L0.1 4.2 Z" fill="#23419b"/></svg>
<div class="t" style="left:651.69px;top:644.97px;font-size:7.6px;color:#333;transform:scaleX(0.8000);transform:translateX(-50%) scaleX(0.8);">18</div>
<svg style="position:absolute;left:648.29px;top:688.1px;" width="7" height="7" viewBox="0 0 7 7"><rect x="0.1" y="0.2" width="6.6" height="1.8" fill="#c4c8d0"/><path d="M0.1 2 H6.7 V4.2 L5.4 6.3 H1.4 L0.1 4.2 Z" fill="#3e3e3e"/></svg>
<div class="t" style="left:651.69px;top:681.47px;font-size:7.6px;color:#333;transform:scaleX(0.8000);transform:translateX(-50%) scaleX(0.8);">18</div>
<svg style="position:absolute;left:661.06px;top:651.6px;" width="7" height="7" viewBox="0 0 7 7"><rect x="0.1" y="0.2" width="6.6" height="1.8" fill="#c4c8d0"/><path d="M0.1 2 H6.7 V4.2 L5.4 6.3 H1.4 L0.1 4.2 Z" fill="#178f17"/></svg>
<div class="t" style="left:664.46px;top:644.97px;font-size:7.6px;color:#333;transform:scaleX(0.8000);transform:translateX(-50%) scaleX(0.8);">19</div>
<svg style="position:absolute;left:661.06px;top:688.1px;" width="7" height="7" viewBox="0 0 7 7"><rect x="0.1" y="0.2" width="6.6" height="1.8" fill="#c4c8d0"/><path d="M0.1 2 H6.7 V4.2 L5.4 6.3 H1.4 L0.1 4.2 Z" fill="#3e3e3e"/></svg>
<div class="t" style="left:664.46px;top:681.47px;font-size:7.6px;color:#333;transform:scaleX(0.8000);transform:translateX(-50%) scaleX(0.8);">19</div>
<svg style="position:absolute;left:673.83px;top:651.6px;" width="7" height="7" viewBox="0 0 7 7"><rect x="0.1" y="0.2" width="6.6" height="1.8" fill="#c4c8d0"/><path d="M0.1 2 H6.7 V4.2 L5.4 6.3 H1.4 L0.1 4.2 Z" fill="#23419b"/></svg>
<div class="t" style="left:677.23px;top:644.97px;font-size:7.6px;color:#333;transform:scaleX(0.8000);transform:translateX(-50%) scaleX(0.8);">20</div>
<svg style="position:absolute;left:673.83px;top:688.1px;" width="7" height="7" viewBox="0 0 7 7"><rect x="0.1" y="0.2" width="6.6" height="1.8" fill="#c4c8d0"/><path d="M0.1 2 H6.7 V4.2 L5.4 6.3 H1.4 L0.1 4.2 Z" fill="#3e3e3e"/></svg>
<div class="t" style="left:677.23px;top:681.47px;font-size:7.6px;color:#333;transform:scaleX(0.8000);transform:translateX(-50%) scaleX(0.8);">20</div>
<svg style="position:absolute;left:686.6px;top:651.6px;" width="7" height="7" viewBox="0 0 7 7"><rect x="0.1" y="0.2" width="6.6" height="1.8" fill="#c4c8d0"/><path d="M0.1 2 H6.7 V4.2 L5.4 6.3 H1.4 L0.1 4.2 Z" fill="#178f17"/></svg>
<div class="t" style="left:690.00px;top:644.97px;font-size:7.6px;color:#333;transform:scaleX(0.8000);transform:translateX(-50%) scaleX(0.8);">21</div>
<svg style="position:absolute;left:686.6px;top:688.1px;" width="7" height="7" viewBox="0 0 7 7"><rect x="0.1" y="0.2" width="6.6" height="1.8" fill="#c4c8d0"/><path d="M0.1 2 H6.7 V4.2 L5.4 6.3 H1.4 L0.1 4.2 Z" fill="#3e3e3e"/></svg>
<div class="t" style="left:690.00px;top:681.47px;font-size:7.6px;color:#333;transform:scaleX(0.8000);transform:translateX(-50%) scaleX(0.8);">21</div>
<svg style="position:absolute;left:699.37px;top:651.6px;" width="7" height="7" viewBox="0 0 7 7"><rect x="0.1" y="0.2" width="6.6" height="1.8" fill="#c4c8d0"/><path d="M0.1 2 H6.7 V4.2 L5.4 6.3 H1.4 L0.1 4.2 Z" fill="#23419b"/></svg>
<div class="t" style="left:702.77px;top:644.97px;font-size:7.6px;color:#333;transform:scaleX(0.8000);transform:translateX(-50%) scaleX(0.8);">22</div>
<svg style="position:absolute;left:699.37px;top:688.1px;" width="7" height="7" viewBox="0 0 7 7"><rect x="0.1" y="0.2" width="6.6" height="1.8" fill="#c4c8d0"/><path d="M0.1 2 H6.7 V4.2 L5.4 6.3 H1.4 L0.1 4.2 Z" fill="#3e3e3e"/></svg>
<div class="t" style="left:702.77px;top:681.47px;font-size:7.6px;color:#333;transform:scaleX(0.8000);transform:translateX(-50%) scaleX(0.8);">22</div>
<svg style="position:absolute;left:712.14px;top:651.6px;" width="7" height="7" viewBox="0 0 7 7"><rect x="0.1" y="0.2" width="6.6" height="1.8" fill="#c4c8d0"/><path d="M0.1 2 H6.7 V4.2 L5.4 6.3 H1.4 L0.1 4.2 Z" fill="#178f17"/></svg>
<div class="t" style="left:715.54px;top:644.97px;font-size:7.6px;color:#333;transform:scaleX(0.8000);transform:translateX(-50%) scaleX(0.8);">23</div>
<svg style="position:absolute;left:712.14px;top:688.1px;" width="7" height="7" viewBox="0 0 7 7"><rect x="0.1" y="0.2" width="6.6" height="1.8" fill="#c4c8d0"/><path d="M0.1 2 H6.7 V4.2 L5.4 6.3 H1.4 L0.1 4.2 Z" fill="#3e3e3e"/></svg>
<div class="t" style="left:715.54px;top:681.47px;font-size:7.6px;color:#333;transform:scaleX(0.8000);transform:translateX(-50%) scaleX(0.8);">23</div>
<svg style="position:absolute;left:724.91px;top:651.6px;" width="7" height="7" viewBox="0 0 7 7"><rect x="0.1" y="0.2" width="6.6" height="1.8" fill="#c4c8d0"/><path d="M0.1 2 H6.7 V4.2 L5.4 6.3 H1.4 L0.1 4.2 Z" fill="#23419b"/></svg>
<div class="t" style="left:728.31px;top:644.97px;font-size:7.6px;color:#333;transform:scaleX(0.8000);transform:translateX(-50%) scaleX(0.8);">24</div>
<svg style="position:absolute;left:724.91px;top:688.1px;" width="7" height="7" viewBox="0 0 7 7"><rect x="0.1" y="0.2" width="6.6" height="1.8" fill="#c4c8d0"/><path d="M0.1 2 H6.7 V4.2 L5.4 6.3 H1.4 L0.1 4.2 Z" fill="#3e3e3e"/></svg>
<div class="t" style="left:728.31px;top:681.47px;font-size:7.6px;color:#333;transform:scaleX(0.8000);transform:translateX(-50%) scaleX(0.8);">24</div>
<svg style="position:absolute;left:737.68px;top:651.6px;" width="7" height="7" viewBox="0 0 7 7"><rect x="0.1" y="0.2" width="6.6" height="1.8" fill="#c4c8d0"/><path d="M0.1 2 H6.7 V4.2 L5.4 6.3 H1.4 L0.1 4.2 Z" fill="#3e3e3e"/></svg>
<div class="t" style="left:741.08px;top:644.97px;font-size:7.6px;color:#333;transform:scaleX(0.8000);transform:translateX(-50%) scaleX(0.8);">25</div>
<svg style="position:absolute;left:737.68px;top:688.1px;" width="7" height="7" viewBox="0 0 7 7"><rect x="0.1" y="0.2" width="6.6" height="1.8" fill="#c4c8d0"/><path d="M0.1 2 H6.7 V4.2 L5.4 6.3 H1.4 L0.1 4.2 Z" fill="#3e3e3e"/></svg>
<div class="t" style="left:741.08px;top:681.47px;font-size:7.6px;color:#333;transform:scaleX(0.8000);transform:translateX(-50%) scaleX(0.8);">25</div>
<svg style="position:absolute;left:420.5px;top:426.0px;" width="8" height="7" viewBox="0 0 8 7"><path d="M0.2 4.6 V3.4 A3.3 3.2 0 0 1 6.8 3.4 V4.6 Z" fill="#178f17"/><rect x="0.2" y="4.6" width="6.6" height="1.6" fill="#b8c2d2"/></svg>
<svg style="position:absolute;left:420.6px;top:435.2px;" width="7" height="7" viewBox="0 0 7 7"><rect x="0.1" y="0.2" width="6.6" height="1.8" fill="#c4c8d0"/><path d="M0.1 2 H6.7 V4.2 L5.4 6.3 H1.4 L0.1 4.2 Z" fill="#178f17"/></svg>
<div class="t" style="left:424.00px;top:418.30px;font-size:7.8px;color:#333;transform:scaleX(0.8200);transform:translateX(-50%) scaleX(0.82);">1</div>
<div class="t" style="left:424.00px;top:439.00px;font-size:7.8px;color:#333;transform:scaleX(0.8200);transform:translateX(-50%) scaleX(0.82);">2</div>
<svg style="position:absolute;left:432.05px;top:426.0px;" width="8" height="7" viewBox="0 0 8 7"><path d="M0.2 4.6 V3.4 A3.3 3.2 0 0 1 6.8 3.4 V4.6 Z" fill="#178f17"/><rect x="0.2" y="4.6" width="6.6" height="1.6" fill="#b8c2d2"/></svg>
<svg style="position:absolute;left:432.15px;top:435.2px;" width="7" height="7" viewBox="0 0 7 7"><rect x="0.1" y="0.2" width="6.6" height="1.8" fill="#c4c8d0"/><path d="M0.1 2 H6.7 V4.2 L5.4 6.3 H1.4 L0.1 4.2 Z" fill="#178f17"/></svg>
<div class="t" style="left:435.55px;top:418.30px;font-size:7.8px;color:#333;transform:scaleX(0.8200);transform:translateX(-50%) scaleX(0.82);">3</div>
<div class="t" style="left:435.55px;top:439.00px;font-size:7.8px;color:#333;transform:scaleX(0.8200);transform:translateX(-50%) scaleX(0.82);">4</div>
<svg style="position:absolute;left:443.6px;top:426.0px;" width="8" height="7" viewBox="0 0 8 7"><path d="M0.2 4.6 V3.4 A3.3 3.2 0 0 1 6.8 3.4 V4.6 Z" fill="#178f17"/><rect x="0.2" y="4.6" width="6.6" height="1.6" fill="#b8c2d2"/></svg>
<svg style="position:absolute;left:443.7px;top:435.2px;" width="7" height="7" viewBox="0 0 7 7"><rect x="0.1" y="0.2" width="6.6" height="1.8" fill="#c4c8d0"/><path d="M0.1 2 H6.7 V4.2 L5.4 6.3 H1.4 L0.1 4.2 Z" fill="#178f17"/></svg>
<div class="t" style="left:447.10px;top:418.30px;font-size:7.8px;color:#333;transform:scaleX(0.8200);transform:translateX(-50%) scaleX(0.82);">5</div>
<div class="t" style="left:447.10px;top:439.00px;font-size:7.8px;color:#333;transform:scaleX(0.8200);transform:translateX(-50%) scaleX(0.82);">6</div>
<svg style="position:absolute;left:455.15px;top:426.0px;" width="8" height="7" viewBox="0 0 8 7"><path d="M0.2 4.6 V3.4 A3.3 3.2 0 0 1 6.8 3.4 V4.6 Z" fill="#178f17"/><rect x="0.2" y="4.6" width="6.6" height="1.6" fill="#b8c2d2"/></svg>
<svg style="position:absolute;left:455.25px;top:435.2px;" width="7" height="7" viewBox="0 0 7 7"><rect x="0.1" y="0.2" width="6.6" height="1.8" fill="#c4c8d0"/><path d="M0.1 2 H6.7 V4.2 L5.4 6.3 H1.4 L0.1 4.2 Z" fill="#178f17"/></svg>
<div class="t" style="left:458.65px;top:418.30px;font-size:7.8px;color:#333;transform:scaleX(0.8200);transform:translateX(-50%) scaleX(0.82);">7</div>
<div class="t" style="left:458.65px;top:439.00px;font-size:7.8px;color:#333;transform:scaleX(0.8200);transform:translateX(-50%) scaleX(0.82);">8</div>
<svg style="position:absolute;left:466.7px;top:426.0px;" width="8" height="7" viewBox="0 0 8 7"><path d="M0.2 4.6 V3.4 A3.3 3.2 0 0 1 6.8 3.4 V4.6 Z" fill="#178f17"/><rect x="0.2" y="4.6" width="6.6" height="1.6" fill="#b8c2d2"/></svg>
<svg style="position:absolute;left:466.8px;top:435.2px;" width="7" height="7" viewBox="0 0 7 7"><rect x="0.1" y="0.2" width="6.6" height="1.8" fill="#c4c8d0"/><path d="M0.1 2 H6.7 V4.2 L5.4 6.3 H1.4 L0.1 4.2 Z" fill="#178f17"/></svg>
<div class="t" style="left:470.20px;top:418.30px;font-size:7.8px;color:#333;transform:scaleX(0.8200);transform:translateX(-50%) scaleX(0.82);">9</div>
<div class="t" style="left:470.20px;top:439.00px;font-size:7.8px;color:#333;transform:scaleX(0.8200);transform:translateX(-50%) scaleX(0.82);">10</div>
<svg style="position:absolute;left:478.25px;top:426.0px;" width="8" height="7" viewBox="0 0 8 7"><path d="M0.2 4.6 V3.4 A3.3 3.2 0 0 1 6.8 3.4 V4.6 Z" fill="#178f17"/><rect x="0.2" y="4.6" width="6.6" height="1.6" fill="#b8c2d2"/></svg>
<svg style="position:absolute;left:478.35px;top:435.2px;" width="7" height="7" viewBox="0 0 7 7"><rect x="0.1" y="0.2" width="6.6" height="1.8" fill="#c4c8d0"/><path d="M0.1 2 H6.7 V4.2 L5.4 6.3 H1.4 L0.1 4.2 Z" fill="#178f17"/></svg>
<div class="t" style="left:481.75px;top:418.30px;font-size:7.8px;color:#333;transform:scaleX(0.8200);transform:translateX(-50%) scaleX(0.82);">11</div>
<div class="t" style="left:481.75px;top:439.00px;font-size:7.8px;color:#333;transform:scaleX(0.8200);transform:translateX(-50%) scaleX(0.82);">12</div>
<svg style="position:absolute;left:493.7px;top:426.0px;" width="8" height="7" viewBox="0 0 8 7"><path d="M0.2 4.6 V3.4 A3.3 3.2 0 0 1 6.8 3.4 V4.6 Z" fill="#178f17"/><rect x="0.2" y="4.6" width="6.6" height="1.6" fill="#b8c2d2"/></svg>
<svg style="position:absolute;left:493.8px;top:435.2px;" width="7" height="7" viewBox="0 0 7 7"><rect x="0.1" y="0.2" width="6.6" height="1.8" fill="#c4c8d0"/><path d="M0.1 2 H6.7 V4.2 L5.4 6.3 H1.4 L0.1 4.2 Z" fill="#178f17"/></svg>
<div class="t" style="left:497.20px;top:418.30px;font-size:7.8px;color:#333;transform:scaleX(0.8200);transform:translateX(-50%) scaleX(0.82);">13</div>
<div class="t" style="left:497.20px;top:439.00px;font-size:7.8px;color:#333;transform:scaleX(0.8200);transform:translateX(-50%) scaleX(0.82);">14</div>
<svg style="position:absolute;left:505.25px;top:426.0px;" width="8" height="7" viewBox="0 0 8 7"><path d="M0.2 4.6 V3.4 A3.3 3.2 0 0 1 6.8 3.4 V4.6 Z" fill="#178f17"/><rect x="0.2" y="4.6" width="6.6" height="1.6" fill="#b8c2d2"/></svg>
<svg style="position:absolute;left:505.35px;top:435.2px;" width="7" height="7" viewBox="0 0 7 7"><rect x="0.1" y="0.2" width="6.6" height="1.8" fill="#c4c8d0"/><path d="M0.1 2 H6.7 V4.2 L5.4 6.3 H1.4 L0.1 4.2 Z" fill="#23419b"/></svg>
<div class="t" style="left:508.75px;top:418.30px;font-size:7.8px;color:#333;transform:scaleX(0.8200);transform:translateX(-50%) scaleX(0.82);">15</div>
<div class="t" style="left:508.75px;top:439.00px;font-size:7.8px;color:#333;transform:scaleX(0.8200);transform:translateX(-50%) scaleX(0.82);">16</div>
<svg style="position:absolute;left:516.8px;top:426.0px;" width="8" height="7" viewBox="0 0 8 7"><path d="M0.2 4.6 V3.4 A3.3 3.2 0 0 1 6.8 3.4 V4.6 Z" fill="#178f17"/><rect x="0.2" y="4.6" width="6.6" height="1.6" fill="#b8c2d2"/></svg>
<svg style="position:absolute;left:516.9px;top:435.2px;" width="7" height="7" viewBox="0 0 7 7"><rect x="0.1" y="0.2" width="6.6" height="1.8" fill="#c4c8d0"/><path d="M0.1 2 H6.7 V4.2 L5.4 6.3 H1.4 L0.1 4.2 Z" fill="#23419b"/></svg>
<div class="t" style="left:520.30px;top:418.30px;font-size:7.8px;color:#333;transform:scaleX(0.8200);transform:translateX(-50%) scaleX(0.82);">17</div>
<div class="t" style="left:520.30px;top:439.00px;font-size:7.8px;color:#333;transform:scaleX(0.8200);transform:translateX(-50%) scaleX(0.82);">18</div>
<svg style="position:absolute;left:528.35px;top:426.0px;" width="8" height="7" viewBox="0 0 8 7"><path d="M0.2 4.6 V3.4 A3.3 3.2 0 0 1 6.8 3.4 V4.6 Z" fill="#178f17"/><rect x="0.2" y="4.6" width="6.6" height="1.6" fill="#b8c2d2"/></svg>
<svg style="position:absolute;left:528.45px;top:435.2px;" width="7" height="7" viewBox="0 0 7 7"><rect x="0.1" y="0.2" width="6.6" height="1.8" fill="#c4c8d0"/><path d="M0.1 2 H6.7 V4.2 L5.4 6.3 H1.4 L0.1 4.2 Z" fill="#23419b"/></svg>
<div class="t" style="left:531.85px;top:418.30px;font-size:7.8px;color:#333;transform:scaleX(0.8200);transform:translateX(-50%) scaleX(0.82);">19</div>
<div class="t" style="left:531.85px;top:439.00px;font-size:7.8px;color:#333;transform:scaleX(0.8200);transform:translateX(-50%) scaleX(0.82);">20</div>
<svg style="position:absolute;left:539.9px;top:426.0px;" width="8" height="7" viewBox="0 0 8 7"><path d="M0.2 4.6 V3.4 A3.3 3.2 0 0 1 6.8 3.4 V4.6 Z" fill="#178f17"/><rect x="0.2" y="4.6" width="6.6" height="1.6" fill="#b8c2d2"/></svg>
<svg style="position:absolute;left:540.0px;top:435.2px;" width="7" height="7" viewBox="0 0 7 7"><rect x="0.1" y="0.2" width="6.6" height="1.8" fill="#c4c8d0"/><path d="M0.1 2 H6.7 V4.2 L5.4 6.3 H1.4 L0.1 4.2 Z" fill="#23419b"/></svg>
<div class="t" style="left:543.40px;top:418.30px;font-size:7.8px;color:#333;transform:scaleX(0.8200);transform:translateX(-50%) scaleX(0.82);">21</div>
<div class="t" style="left:543.40px;top:439.00px;font-size:7.8px;color:#333;transform:scaleX(0.8200);transform:translateX(-50%) scaleX(0.82);">22</div>
<svg style="position:absolute;left:551.45px;top:426.0px;" width="8" height="7" viewBox="0 0 8 7"><path d="M0.2 4.6 V3.4 A3.3 3.2 0 0 1 6.8 3.4 V4.6 Z" fill="#178f17"/><rect x="0.2" y="4.6" width="6.6" height="1.6" fill="#b8c2d2"/></svg>
<svg style="position:absolute;left:551.55px;top:435.2px;" width="7" height="7" viewBox="0 0 7 7"><rect x="0.1" y="0.2" width="6.6" height="1.8" fill="#c4c8d0"/><path d="M0.1 2 H6.7 V4.2 L5.4 6.3 H1.4 L0.1 4.2 Z" fill="#23419b"/></svg>
<div class="t" style="left:554.95px;top:418.30px;font-size:7.8px;color:#333;transform:scaleX(0.8200);transform:translateX(-50%) scaleX(0.82);">23</div>
<div class="t" style="left:554.95px;top:439.00px;font-size:7.8px;color:#333;transform:scaleX(0.8200);transform:translateX(-50%) scaleX(0.82);">24</div>
<svg style="position:absolute;left:566.9px;top:426.0px;" width="8" height="7" viewBox="0 0 8 7"><path d="M0.2 4.6 V3.4 A3.3 3.2 0 0 1 6.8 3.4 V4.6 Z" fill="#178f17"/><rect x="0.2" y="4.6" width="6.6" height="1.6" fill="#b8c2d2"/></svg>
<svg style="position:absolute;left:567.0px;top:435.2px;" width="7" height="7" viewBox="0 0 7 7"><rect x="0.1" y="0.2" width="6.6" height="1.8" fill="#c4c8d0"/><path d="M0.1 2 H6.7 V4.2 L5.4 6.3 H1.4 L0.1 4.2 Z" fill="#23419b"/></svg>
<div class="t" style="left:570.40px;top:418.30px;font-size:7.8px;color:#333;transform:scaleX(0.8200);transform:translateX(-50%) scaleX(0.82);">25</div>
<div class="t" style="left:570.40px;top:439.00px;font-size:7.8px;color:#333;transform:scaleX(0.8200);transform:translateX(-50%) scaleX(0.82);">26</div>
<svg style="position:absolute;left:578.45px;top:426.0px;" width="8" height="7" viewBox="0 0 8 7"><path d="M0.2 4.6 V3.4 A3.3 3.2 0 0 1 6.8 3.4 V4.6 Z" fill="#23419b"/><rect x="0.2" y="4.6" width="6.6" height="1.6" fill="#b8c2d2"/></svg>
<svg style="position:absolute;left:578.55px;top:435.2px;" width="7" height="7" viewBox="0 0 7 7"><rect x="0.1" y="0.2" width="6.6" height="1.8" fill="#c4c8d0"/><path d="M0.1 2 H6.7 V4.2 L5.4 6.3 H1.4 L0.1 4.2 Z" fill="#23419b"/></svg>
<div class="t" style="left:581.95px;top:418.30px;font-size:7.8px;color:#333;transform:scaleX(0.8200);transform:translateX(-50%) scaleX(0.82);">27</div>
<div class="t" style="left:581.95px;top:439.00px;font-size:7.8px;color:#333;transform:scaleX(0.8200);transform:translateX(-50%) scaleX(0.82);">28</div>
<svg style="position:absolute;left:590.0px;top:426.0px;" width="8" height="7" viewBox="0 0 8 7"><path d="M0.2 4.6 V3.4 A3.3 3.2 0 0 1 6.8 3.4 V4.6 Z" fill="#23419b"/><rect x="0.2" y="4.6" width="6.6" height="1.6" fill="#b8c2d2"/></svg>
<svg style="position:absolute;left:590.1px;top:435.2px;" width="7" height="7" viewBox="0 0 7 7"><rect x="0.1" y="0.2" width="6.6" height="1.8" fill="#c4c8d0"/><path d="M0.1 2 H6.7 V4.2 L5.4 6.3 H1.4 L0.1 4.2 Z" fill="#23419b"/></svg>
<div class="t" style="left:593.50px;top:418.30px;font-size:7.8px;color:#333;transform:scaleX(0.8200);transform:translateX(-50%) scaleX(0.82);">29</div>
<div class="t" style="left:593.50px;top:439.00px;font-size:7.8px;color:#333;transform:scaleX(0.8200);transform:translateX(-50%) scaleX(0.82);">30</div>
<svg style="position:absolute;left:601.55px;top:426.0px;" width="8" height="7" viewBox="0 0 8 7"><path d="M0.2 4.6 V3.4 A3.3 3.2 0 0 1 6.8 3.4 V4.6 Z" fill="#23419b"/><rect x="0.2" y="4.6" width="6.6" height="1.6" fill="#b8c2d2"/></svg>
<svg style="position:absolute;left:601.65px;top:435.2px;" width="7" height="7" viewBox="0 0 7 7"><rect x="0.1" y="0.2" width="6.6" height="1.8" fill="#c4c8d0"/><path d="M0.1 2 H6.7 V4.2 L5.4 6.3 H1.4 L0.1 4.2 Z" fill="#23419b"/></svg>
<div class="t" style="left:605.05px;top:418.30px;font-size:7.8px;color:#333;transform:scaleX(0.8200);transform:translateX(-50%) scaleX(0.82);">31</div>
<div class="t" style="left:605.05px;top:439.00px;font-size:7.8px;color:#333;transform:scaleX(0.8200);transform:translateX(-50%) scaleX(0.82);">32</div>
<svg style="position:absolute;left:613.1px;top:426.0px;" width="8" height="7" viewBox="0 0 8 7"><path d="M0.2 4.6 V3.4 A3.3 3.2 0 0 1 6.8 3.4 V4.6 Z" fill="#23419b"/><rect x="0.2" y="4.6" width="6.6" height="1.6" fill="#b8c2d2"/></svg>
<svg style="position:absolute;left:613.2px;top:435.2px;" width="7" height="7" viewBox="0 0 7 7"><rect x="0.1" y="0.2" width="6.6" height="1.8" fill="#c4c8d0"/><path d="M0.1 2 H6.7 V4.2 L5.4 6.3 H1.4 L0.1 4.2 Z" fill="#23419b"/></svg>
<div class="t" style="left:616.60px;top:418.30px;font-size:7.8px;color:#333;transform:scaleX(0.8200);transform:translateX(-50%) scaleX(0.82);">33</div>
<div class="t" style="left:616.60px;top:439.00px;font-size:7.8px;color:#333;transform:scaleX(0.8200);transform:translateX(-50%) scaleX(0.82);">34</div>
<svg style="position:absolute;left:624.65px;top:426.0px;" width="8" height="7" viewBox="0 0 8 7"><path d="M0.2 4.6 V3.4 A3.3 3.2 0 0 1 6.8 3.4 V4.6 Z" fill="#23419b"/><rect x="0.2" y="4.6" width="6.6" height="1.6" fill="#b8c2d2"/></svg>
<svg style="position:absolute;left:624.75px;top:435.2px;" width="7" height="7" viewBox="0 0 7 7"><rect x="0.1" y="0.2" width="6.6" height="1.8" fill="#c4c8d0"/><path d="M0.1 2 H6.7 V4.2 L5.4 6.3 H1.4 L0.1 4.2 Z" fill="#23419b"/></svg>
<div class="t" style="left:628.15px;top:418.30px;font-size:7.8px;color:#333;transform:scaleX(0.8200);transform:translateX(-50%) scaleX(0.82);">35</div>
<div class="t" style="left:628.15px;top:439.00px;font-size:7.8px;color:#333;transform:scaleX(0.8200);transform:translateX(-50%) scaleX(0.82);">36</div>
<svg style="position:absolute;left:640.1px;top:426.0px;" width="8" height="7" viewBox="0 0 8 7"><path d="M0.2 4.6 V3.4 A3.3 3.2 0 0 1 6.8 3.4 V4.6 Z" fill="#23419b"/><rect x="0.2" y="4.6" width="6.6" height="1.6" fill="#b8c2d2"/></svg>
<svg style="position:absolute;left:640.2px;top:435.2px;" width="7" height="7" viewBox="0 0 7 7"><rect x="0.1" y="0.2" width="6.6" height="1.8" fill="#c4c8d0"/><path d="M0.1 2 H6.7 V4.2 L5.4 6.3 H1.4 L0.1 4.2 Z" fill="#23419b"/></svg>
<div class="t" style="left:643.60px;top:418.30px;font-size:7.8px;color:#333;transform:scaleX(0.8200);transform:translateX(-50%) scaleX(0.82);">37</div>
<div class="t" style="left:643.60px;top:439.00px;font-size:7.8px;color:#333;transform:scaleX(0.8200);transform:translateX(-50%) scaleX(0.82);">38</div>
<svg style="position:absolute;left:651.65px;top:426.0px;" width="8" height="7" viewBox="0 0 8 7"><path d="M0.2 4.6 V3.4 A3.3 3.2 0 0 1 6.8 3.4 V4.6 Z" fill="#23419b"/><rect x="0.2" y="4.6" width="6.6" height="1.6" fill="#b8c2d2"/></svg>
<svg style="position:absolute;left:651.75px;top:435.2px;" width="7" height="7" viewBox="0 0 7 7"><rect x="0.1" y="0.2" width="6.6" height="1.8" fill="#c4c8d0"/><path d="M0.1 2 H6.7 V4.2 L5.4 6.3 H1.4 L0.1 4.2 Z" fill="#23419b"/></svg>
<div class="t" style="left:655.15px;top:418.30px;font-size:7.8px;color:#333;transform:scaleX(0.8200);transform:translateX(-50%) scaleX(0.82);">39</div>
<div class="t" style="left:655.15px;top:439.00px;font-size:7.8px;color:#333;transform:scaleX(0.8200);transform:translateX(-50%) scaleX(0.82);">40</div>
<svg style="position:absolute;left:663.2px;top:426.0px;" width="8" height="7" viewBox="0 0 8 7"><path d="M0.2 4.6 V3.4 A3.3 3.2 0 0 1 6.8 3.4 V4.6 Z" fill="#23419b"/><rect x="0.2" y="4.6" width="6.6" height="1.6" fill="#b8c2d2"/></svg>
<svg style="position:absolute;left:663.3px;top:435.2px;" width="7" height="7" viewBox="0 0 7 7"><rect x="0.1" y="0.2" width="6.6" height="1.8" fill="#c4c8d0"/><path d="M0.1 2 H6.7 V4.2 L5.4 6.3 H1.4 L0.1 4.2 Z" fill="#23419b"/></svg>
<div class="t" style="left:666.70px;top:418.30px;font-size:7.8px;color:#333;transform:scaleX(0.8200);transform:translateX(-50%) scaleX(0.82);">41</div>
<div class="t" style="left:666.70px;top:439.00px;font-size:7.8px;color:#333;transform:scaleX(0.8200);transform:translateX(-50%) scaleX(0.82);">42</div>
<svg style="position:absolute;left:674.75px;top:426.0px;" width="8" height="7" viewBox="0 0 8 7"><path d="M0.2 4.6 V3.4 A3.3 3.2 0 0 1 6.8 3.4 V4.6 Z" fill="#23419b"/><rect x="0.2" y="4.6" width="6.6" height="1.6" fill="#b8c2d2"/></svg>
<svg style="position:absolute;left:674.85px;top:435.2px;" width="7" height="7" viewBox="0 0 7 7"><rect x="0.1" y="0.2" width="6.6" height="1.8" fill="#c4c8d0"/><path d="M0.1 2 H6.7 V4.2 L5.4 6.3 H1.4 L0.1 4.2 Z" fill="#23419b"/></svg>
<div class="t" style="left:678.25px;top:418.30px;font-size:7.8px;color:#333;transform:scaleX(0.8200);transform:translateX(-50%) scaleX(0.82);">43</div>
<div class="t" style="left:678.25px;top:439.00px;font-size:7.8px;color:#333;transform:scaleX(0.8200);transform:translateX(-50%) scaleX(0.82);">44</div>
<svg style="position:absolute;left:686.3px;top:426.0px;" width="8" height="7" viewBox="0 0 8 7"><path d="M0.2 4.6 V3.4 A3.3 3.2 0 0 1 6.8 3.4 V4.6 Z" fill="#23419b"/><rect x="0.2" y="4.6" width="6.6" height="1.6" fill="#b8c2d2"/></svg>
<svg style="position:absolute;left:686.4px;top:435.2px;" width="7" height="7" viewBox="0 0 7 7"><rect x="0.1" y="0.2" width="6.6" height="1.8" fill="#c4c8d0"/><path d="M0.1 2 H6.7 V4.2 L5.4 6.3 H1.4 L0.1 4.2 Z" fill="#23419b"/></svg>
<div class="t" style="left:689.80px;top:418.30px;font-size:7.8px;color:#333;transform:scaleX(0.8200);transform:translateX(-50%) scaleX(0.82);">45</div>
<div class="t" style="left:689.80px;top:439.00px;font-size:7.8px;color:#333;transform:scaleX(0.8200);transform:translateX(-50%) scaleX(0.82);">46</div>
<svg style="position:absolute;left:697.85px;top:426.0px;" width="8" height="7" viewBox="0 0 8 7"><path d="M0.2 4.6 V3.4 A3.3 3.2 0 0 1 6.8 3.4 V4.6 Z" fill="#23419b"/><rect x="0.2" y="4.6" width="6.6" height="1.6" fill="#b8c2d2"/></svg>
<svg style="position:absolute;left:697.95px;top:435.2px;" width="7" height="7" viewBox="0 0 7 7"><rect x="0.1" y="0.2" width="6.6" height="1.8" fill="#c4c8d0"/><path d="M0.1 2 H6.7 V4.2 L5.4 6.3 H1.4 L0.1 4.2 Z" fill="#23419b"/></svg>
<div class="t" style="left:701.35px;top:418.30px;font-size:7.8px;color:#333;transform:scaleX(0.8200);transform:translateX(-50%) scaleX(0.82);">47</div>
<div class="t" style="left:701.35px;top:439.00px;font-size:7.8px;color:#333;transform:scaleX(0.8200);transform:translateX(-50%) scaleX(0.82);">48</div>
<div class="t" style="left:709.50px;top:416.22px;font-size:8.6px;color:#222;transform:scaleX(0.7944);">Console 1 USB 1</div>
<div style="left:750.60px;top:426.00px;width:5.80px;height:2.60px;background:#222;"></div>
<div class="t" style="left:720.80px;top:428.10px;font-size:7.8px;color:#333;transform:scaleX(0.8200);transform:translateX(-50%) scaleX(0.82);">49</div>
<div class="t" style="left:732.60px;top:428.10px;font-size:7.8px;color:#333;transform:scaleX(0.8200);transform:translateX(-50%) scaleX(0.82);">50</div>
<div style="left:715.70px;top:435.00px;width:11.30px;height:7.40px;background:#d8d8c8;border:1.5px solid #c8c860;"></div>
<div class="t" style="left:717.90px;top:436.54px;font-size:5.5px;color:#333;transform:scaleX(0.9000);">88</div>
<div style="left:727.00px;top:435.00px;width:11.30px;height:7.40px;background:#d8d8c8;border:1.5px solid #c8c860;"></div>
<div class="t" style="left:729.20px;top:436.54px;font-size:5.5px;color:#333;transform:scaleX(0.9000);">88</div>
<div style="left:738.50px;top:435.30px;width:10.00px;height:7.00px;background:#eaeaea;border:1px solid #d0d0d0;"></div>
<div style="left:748.50px;top:435.30px;width:10.00px;height:7.00px;background:#eaeaea;border:1px solid #d0d0d0;"></div>
<div style="left:417.75px;top:425.30px;width:12.50px;height:9.00px;border:1.6px solid #8282f6;"></div>
<div style="left:429.30px;top:425.30px;width:12.50px;height:9.00px;border:1.6px solid #8282f6;"></div>
<div style="left:440.85px;top:425.30px;width:12.50px;height:9.00px;border:1.6px solid #8282f6;"></div>
<div style="left:452.40px;top:425.30px;width:12.50px;height:9.00px;border:1.6px solid #8282f6;"></div>
<div style="left:463.95px;top:425.30px;width:12.50px;height:9.00px;border:1.6px solid #8282f6;"></div>
<div style="left:475.50px;top:425.30px;width:12.50px;height:9.00px;border:1.6px solid #8282f6;"></div>
<div style="left:490.95px;top:425.30px;width:12.50px;height:9.00px;border:1.6px solid #8282f6;"></div>
<div style="left:502.50px;top:425.30px;width:12.50px;height:9.00px;border:1.6px solid #8282f6;"></div>
<div style="left:514.05px;top:425.30px;width:12.50px;height:9.00px;border:1.6px solid #8282f6;"></div>
<div style="left:525.60px;top:425.30px;width:12.50px;height:9.00px;border:1.6px solid #8282f6;"></div>
<div style="left:537.15px;top:425.30px;width:12.50px;height:9.00px;border:1.6px solid #8282f6;"></div>
<div style="left:548.70px;top:425.30px;width:12.50px;height:9.00px;border:1.6px solid #8282f6;"></div>
<div style="left:417.75px;top:434.10px;width:12.50px;height:9.00px;border:1.6px solid #8282f6;"></div>
<div style="left:429.30px;top:434.10px;width:12.50px;height:9.00px;border:1.6px solid #8282f6;"></div>
<div style="left:440.85px;top:434.10px;width:12.50px;height:9.00px;border:1.6px solid #8282f6;"></div>
<div style="left:452.40px;top:434.10px;width:12.50px;height:9.00px;border:1.6px solid #8282f6;"></div>
<div style="left:463.95px;top:434.10px;width:12.50px;height:9.00px;border:1.6px solid #8282f6;"></div>
<div style="left:475.50px;top:434.10px;width:12.50px;height:9.00px;border:1.6px solid #8282f6;"></div>
<div style="left:490.95px;top:434.10px;width:12.50px;height:9.00px;border:1.6px solid #8282f6;"></div>
<div style="left:563.90px;top:425.30px;width:13.00px;height:10.00px;border:2px solid #55aa55;"></div>
<div style="left:401.60px;top:539.10px;width:14.00px;height:10.00px;border:2px solid #8282f6;"></div>
<div style="left:432.60px;top:539.10px;width:14.00px;height:10.00px;border:2px solid #8282f6;"></div>
<div style="left:463.60px;top:539.10px;width:14.00px;height:10.00px;border:2px solid #8282f6;"></div>
<div style="left:494.60px;top:539.10px;width:14.00px;height:10.00px;border:2px solid #8282f6;"></div>
<div style="left:525.60px;top:539.10px;width:14.00px;height:10.00px;border:2px solid #8282f6;"></div>
<div style="left:556.60px;top:539.10px;width:14.00px;height:10.00px;border:2px solid #8282f6;"></div>
<div style="left:587.60px;top:539.10px;width:14.00px;height:10.00px;border:2px solid #8282f6;"></div>
<div style="left:618.60px;top:539.10px;width:14.00px;height:10.00px;border:2px solid #8282f6;"></div>
<div style="left:649.60px;top:539.10px;width:14.00px;height:10.00px;border:2px solid #8282f6;"></div>
<div style="left:680.60px;top:539.10px;width:14.00px;height:10.00px;border:2px solid #8282f6;"></div>
<div style="left:711.60px;top:539.10px;width:14.00px;height:10.00px;border:2px solid #8282f6;"></div>
<div style="left:742.60px;top:539.10px;width:14.00px;height:10.00px;border:2px solid #8282f6;"></div>
<div style="left:448.10px;top:539.10px;width:14.00px;height:10.00px;border:2px solid #66bb66;"></div>
<div style="left:401.60px;top:575.60px;width:14.00px;height:10.00px;border:2px solid #8282f6;"></div>
<div style="left:432.60px;top:575.60px;width:14.00px;height:10.00px;border:2px solid #8282f6;"></div>
<div style="left:463.60px;top:575.60px;width:14.00px;height:10.00px;border:2px solid #8282f6;"></div>
<div style="left:494.60px;top:575.60px;width:14.00px;height:10.00px;border:2px solid #8282f6;"></div>
<div style="left:510.10px;top:575.60px;width:14.00px;height:10.00px;border:2px solid #8282f6;"></div>
<div style="left:525.60px;top:575.60px;width:14.00px;height:10.00px;border:2px solid #8282f6;"></div>
<div style="left:541.10px;top:575.60px;width:14.00px;height:10.00px;border:2px solid #8282f6;"></div>
<div style="left:427.85px;top:650.30px;width:13.50px;height:10.00px;border:1.8px solid #5cb85c;"></div>
<div style="left:453.39px;top:650.30px;width:13.50px;height:10.00px;border:1.8px solid #5cb85c;"></div>
<div style="left:478.93px;top:650.30px;width:13.50px;height:10.00px;border:1.8px solid #5cb85c;"></div>
<div style="left:504.47px;top:650.30px;width:13.50px;height:10.00px;border:1.8px solid #5cb85c;"></div>
<div style="left:530.01px;top:650.30px;width:13.50px;height:10.00px;border:1.8px solid #5cb85c;"></div>
<div style="left:555.55px;top:650.30px;width:13.50px;height:10.00px;border:1.8px solid #5cb85c;"></div>
<div style="left:581.09px;top:650.30px;width:13.50px;height:10.00px;border:1.8px solid #5cb85c;"></div>
<div style="left:606.63px;top:650.30px;width:13.50px;height:10.00px;border:1.8px solid #5cb85c;"></div>
<div style="left:632.17px;top:650.30px;width:13.50px;height:10.00px;border:1.8px solid #5cb85c;"></div>
<div style="left:657.71px;top:650.30px;width:13.50px;height:10.00px;border:1.8px solid #5cb85c;"></div>
<div style="left:683.25px;top:650.30px;width:13.50px;height:10.00px;border:1.8px solid #5cb85c;"></div>
<div style="left:708.79px;top:650.30px;width:13.50px;height:10.00px;border:1.8px solid #5cb85c;"></div>
<div style="left:427.85px;top:686.80px;width:13.50px;height:10.00px;border:1.8px solid #5cb85c;"></div>
<div style="left:453.39px;top:686.80px;width:13.50px;height:10.00px;border:1.8px solid #5cb85c;"></div>
<div style="left:478.93px;top:686.80px;width:13.50px;height:10.00px;border:1.8px solid #5cb85c;"></div>
<svg style="position:absolute;left:330px;top:64px;" width="1107" height="686"><g transform="translate(92.0,357.5) rotate(-39)"><rect x="-6" y="-10.5" width="82" height="13.5" fill="#f29a9a" fill-opacity="0.28"/><text x="0" y="0" font-size="9.8" fill="#111" font-family="Liberation Sans">101 - VLAN BIO</text></g><g transform="translate(103.6,357.5) rotate(-39)"><rect x="-6" y="-10.5" width="82" height="13.5" fill="#f29a9a" fill-opacity="0.28"/><text x="0" y="0" font-size="9.8" fill="#111" font-family="Liberation Sans">101 - VLAN BIO</text></g><g transform="translate(115.1,357.5) rotate(-39)"><rect x="-6" y="-10.5" width="82" height="13.5" fill="#f29a9a" fill-opacity="0.28"/><text x="0" y="0" font-size="9.8" fill="#111" font-family="Liberation Sans">101 - VLAN BIO</text></g><g transform="translate(126.6,357.5) rotate(-39)"><rect x="-6" y="-10.5" width="82" height="13.5" fill="#f29a9a" fill-opacity="0.28"/><text x="0" y="0" font-size="9.8" fill="#111" font-family="Liberation Sans">101 - VLAN BIO</text></g><g transform="translate(138.2,357.5) rotate(-39)"><rect x="-6" y="-10.5" width="82" height="13.5" fill="#f29a9a" fill-opacity="0.28"/><text x="0" y="0" font-size="9.8" fill="#111" font-family="Liberation Sans">101 - VLAN BIO</text></g><g transform="translate(149.8,357.5) rotate(-39)"><rect x="-6" y="-10.5" width="82" height="13.5" fill="#f29a9a" fill-opacity="0.28"/><text x="0" y="0" font-size="9.8" fill="#111" font-family="Liberation Sans">101 - VLAN BIO</text></g><g transform="translate(165.2,357.5) rotate(-39)"><rect x="-6" y="-10.5" width="82" height="13.5" fill="#f29a9a" fill-opacity="0.28"/><text x="0" y="0" font-size="9.8" fill="#111" font-family="Liberation Sans">101 - VLAN BIO</text></g><g transform="translate(176.8,357.5) rotate(-39)"><rect x="-6" y="-10.5" width="82" height="13.5" fill="#f29a9a" fill-opacity="0.28"/><text x="0" y="0" font-size="9.8" fill="#111" font-family="Liberation Sans">101 - VLAN BIO</text></g><g transform="translate(188.3,357.5) rotate(-39)"><rect x="-6" y="-10.5" width="82" height="13.5" fill="#f29a9a" fill-opacity="0.28"/><text x="0" y="0" font-size="9.8" fill="#111" font-family="Liberation Sans">101 - VLAN BIO</text></g><g transform="translate(199.9,357.5) rotate(-39)"><rect x="-6" y="-10.5" width="82" height="13.5" fill="#f29a9a" fill-opacity="0.28"/><text x="0" y="0" font-size="9.8" fill="#111" font-family="Liberation Sans">101 - VLAN BIO</text></g><g transform="translate(211.4,357.5) rotate(-39)"><rect x="-6" y="-10.5" width="82" height="13.5" fill="#f29a9a" fill-opacity="0.28"/><text x="0" y="0" font-size="9.8" fill="#111" font-family="Liberation Sans">101 - VLAN BIO</text></g><g transform="translate(223.0,357.5) rotate(-39)"><rect x="-6" y="-10.5" width="82" height="13.5" fill="#f29a9a" fill-opacity="0.28"/><text x="0" y="0" font-size="9.8" fill="#111" font-family="Liberation Sans">101 - VLAN BIO</text></g><g transform="translate(91.0,386.9) rotate(39)"><rect x="-6" y="-10.5" width="82" height="13.5" fill="#f29a9a" fill-opacity="0.28"/><text x="0" y="0" font-size="9.8" fill="#111" font-family="Liberation Sans">101 - VLAN BIO</text></g><g transform="translate(102.6,386.9) rotate(39)"><rect x="-6" y="-10.5" width="82" height="13.5" fill="#f29a9a" fill-opacity="0.28"/><text x="0" y="0" font-size="9.8" fill="#111" font-family="Liberation Sans">101 - VLAN BIO</text></g><g transform="translate(114.1,386.9) rotate(39)"><rect x="-6" y="-10.5" width="82" height="13.5" fill="#f29a9a" fill-opacity="0.28"/><text x="0" y="0" font-size="9.8" fill="#111" font-family="Liberation Sans">101 - VLAN BIO</text></g><g transform="translate(125.6,386.9) rotate(39)"><rect x="-6" y="-10.5" width="82" height="13.5" fill="#f29a9a" fill-opacity="0.28"/><text x="0" y="0" font-size="9.8" fill="#111" font-family="Liberation Sans">101 - VLAN BIO</text></g><g transform="translate(137.2,386.9) rotate(39)"><rect x="-6" y="-10.5" width="82" height="13.5" fill="#f29a9a" fill-opacity="0.28"/><text x="0" y="0" font-size="9.8" fill="#111" font-family="Liberation Sans">101 - VLAN BIO</text></g><g transform="translate(148.8,386.9) rotate(39)"><rect x="-6" y="-10.5" width="82" height="13.5" fill="#f29a9a" fill-opacity="0.28"/><text x="0" y="0" font-size="9.8" fill="#111" font-family="Liberation Sans">101 - VLAN BIO</text></g><g transform="translate(164.2,386.9) rotate(39)"><rect x="-6" y="-10.5" width="82" height="13.5" fill="#f29a9a" fill-opacity="0.28"/><text x="0" y="0" font-size="9.8" fill="#111" font-family="Liberation Sans">101 - VLAN BIO</text></g><line x1="96.0" y1="191.0" x2="403.0" y2="374.0" stroke="#c8c85a" stroke-width="1.8" stroke-opacity="1"/><line x1="98.0" y1="264.0" x2="391.0" y2="374.0" stroke="#c8c85a" stroke-width="1.8" stroke-opacity="1"/><line x1="94.5" y1="370.0" x2="79.6" y2="474.6" stroke="#7a7af6" stroke-width="1.5" stroke-opacity="1"/><line x1="106.1" y1="370.0" x2="110.6" y2="474.6" stroke="#7a7af6" stroke-width="1.5" stroke-opacity="1"/><line x1="117.6" y1="370.0" x2="141.6" y2="474.6" stroke="#7a7af6" stroke-width="1.5" stroke-opacity="1"/><line x1="129.1" y1="370.0" x2="172.6" y2="474.6" stroke="#7a7af6" stroke-width="1.5" stroke-opacity="1"/><line x1="140.7" y1="370.0" x2="203.6" y2="474.6" stroke="#7a7af6" stroke-width="1.5" stroke-opacity="1"/><line x1="152.2" y1="370.0" x2="234.6" y2="474.6" stroke="#7a7af6" stroke-width="1.5" stroke-opacity="1"/><line x1="167.7" y1="370.0" x2="265.6" y2="474.6" stroke="#7a7af6" stroke-width="1.5" stroke-opacity="1"/><line x1="179.2" y1="370.0" x2="296.6" y2="474.6" stroke="#7a7af6" stroke-width="1.5" stroke-opacity="1"/><line x1="190.8" y1="370.0" x2="327.6" y2="474.6" stroke="#7a7af6" stroke-width="1.5" stroke-opacity="1"/><line x1="202.4" y1="370.0" x2="358.6" y2="474.6" stroke="#7a7af6" stroke-width="1.5" stroke-opacity="1"/><line x1="213.9" y1="370.0" x2="389.6" y2="474.6" stroke="#7a7af6" stroke-width="1.5" stroke-opacity="1"/><line x1="225.5" y1="370.0" x2="420.6" y2="474.6" stroke="#7a7af6" stroke-width="1.5" stroke-opacity="1"/><line x1="94.0" y1="378.9" x2="78.6" y2="511.1" stroke="#7a7af6" stroke-width="1.5" stroke-opacity="1"/><line x1="105.6" y1="378.9" x2="109.6" y2="511.1" stroke="#7a7af6" stroke-width="1.5" stroke-opacity="1"/><line x1="117.1" y1="378.9" x2="140.6" y2="511.1" stroke="#7a7af6" stroke-width="1.5" stroke-opacity="1"/><line x1="128.6" y1="378.9" x2="171.6" y2="511.1" stroke="#7a7af6" stroke-width="1.5" stroke-opacity="1"/><line x1="140.2" y1="378.9" x2="187.1" y2="511.1" stroke="#7a7af6" stroke-width="1.5" stroke-opacity="1"/><line x1="151.8" y1="378.9" x2="202.6" y2="511.1" stroke="#7a7af6" stroke-width="1.5" stroke-opacity="1"/><line x1="167.2" y1="378.9" x2="218.1" y2="511.1" stroke="#7a7af6" stroke-width="1.5" stroke-opacity="1"/><line x1="240.4" y1="369.5" x2="129.1" y2="473.6" stroke="#3a9a3a" stroke-width="1.5" stroke-opacity="1"/><line x1="104.6" y1="594.8" x2="104.6" y2="686.0" stroke="#3a9a3a" stroke-width="1.6" stroke-opacity="1"/><line x1="130.1" y1="594.8" x2="121.4" y2="686.0" stroke="#3a9a3a" stroke-width="1.6" stroke-opacity="1"/><line x1="155.7" y1="594.8" x2="138.1" y2="686.0" stroke="#3a9a3a" stroke-width="1.6" stroke-opacity="1"/><line x1="181.2" y1="594.8" x2="154.9" y2="686.0" stroke="#3a9a3a" stroke-width="1.6" stroke-opacity="1"/><line x1="206.8" y1="594.8" x2="171.6" y2="686.0" stroke="#3a9a3a" stroke-width="1.6" stroke-opacity="1"/><line x1="232.3" y1="594.8" x2="188.4" y2="686.0" stroke="#3a9a3a" stroke-width="1.6" stroke-opacity="1"/><line x1="257.8" y1="594.8" x2="205.2" y2="686.0" stroke="#3a9a3a" stroke-width="1.6" stroke-opacity="1"/><line x1="283.4" y1="594.8" x2="221.9" y2="686.0" stroke="#3a9a3a" stroke-width="1.6" stroke-opacity="1"/><line x1="308.9" y1="594.8" x2="238.7" y2="686.0" stroke="#3a9a3a" stroke-width="1.6" stroke-opacity="1"/><line x1="334.5" y1="594.8" x2="255.4" y2="686.0" stroke="#3a9a3a" stroke-width="1.6" stroke-opacity="1"/><line x1="360.0" y1="594.8" x2="272.2" y2="686.0" stroke="#3a9a3a" stroke-width="1.6" stroke-opacity="1"/><line x1="385.5" y1="594.8" x2="289.0" y2="686.0" stroke="#3a9a3a" stroke-width="1.6" stroke-opacity="1"/><line x1="108.6" y1="631.3" x2="186.8" y2="686.0" stroke="#3a9a3a" stroke-width="1.6" stroke-opacity="1"/><line x1="134.1" y1="631.3" x2="204.5" y2="686.0" stroke="#3a9a3a" stroke-width="1.6" stroke-opacity="1"/><line x1="159.7" y1="631.3" x2="224.2" y2="686.0" stroke="#3a9a3a" stroke-width="1.6" stroke-opacity="1"/><path d="M239 352 L246 345.5 L249 352 L257 356.5 L248 363.5 L244 357 Z" fill="#0c7c0c"/><path d="M123.5 472.6 L128 463 L133 461.70000000000005 L142.5 472.6 Z" fill="#0c7c0c"/></svg>
<svg style="position:absolute;left:792px;top:411.3px;" width="82" height="16" viewBox="0 0 82 16"><path d="M0.8 7.6 L9.5 0 H81.5 V15.3 H9.5 Z" fill="#128512"/></svg>
<div class="t" style="left:802.20px;top:414.14px;font-size:10px;color:#fff;transform:scaleX(0.9114);">WO-20221005-1</div>
<svg style="position:absolute;left:792px;top:520.7px;" width="82" height="16" viewBox="0 0 82 16"><path d="M0.8 7.6 L9.5 0 H81.5 V15.3 H9.5 Z" fill="#128512"/></svg>
<div class="t" style="left:802.20px;top:523.53px;font-size:10px;color:#fff;transform:scaleX(0.9114);">WO-20221005-1</div>
<div style="left:873.30px;top:206.30px;width:422.70px;height:455.00px;background:#fff;border:1px solid #8f8f8f;"></div>
<div style="left:874.30px;top:628.20px;width:420.70px;height:31.80px;background:#d0d0d0;"></div>
<div class="t" style="left:885.10px;top:219.54px;font-size:15.9px;color:#333;transform:scaleX(1.0471);">Cabinet view</div>
<div class="t" style="left:886.70px;top:242.63px;font-size:10.6px;color:#444;transform:scaleX(0.9315);">Change Report Settings</div>
<div class="t" style="left:1247.40px;top:220.54px;font-size:12px;color:#777;transform:scaleX(0.8859);">?</div>
<svg style="position:absolute;left:1269px;top:222px;" width="12" height="12" viewBox="0 0 12 12"><path d="M1 1 L11 11 M11 1 L1 11" stroke="#666" stroke-width="1.1"/></svg>
<div class="t" style="left:914.70px;top:283.98px;font-size:10.3px;color:#333;transform:scaleX(0.9560);">Printer</div>
<div class="t" style="left:914.70px;top:304.68px;font-size:10.3px;color:#333;transform:scaleX(0.8895);">Paper Size</div>
<div class="t" style="left:914.70px;top:325.58px;font-size:10.3px;color:#333;">Orientation</div>
<div class="t" style="left:914.70px;top:346.48px;font-size:10.3px;color:#333;transform:scaleX(0.9316);">Legend</div>
<div class="t" style="left:914.70px;top:377.08px;font-size:10.3px;color:#333;transform:scaleX(0.9170);">Layer 1</div>
<div class="t" style="left:914.70px;top:398.38px;font-size:10.3px;color:#333;transform:scaleX(0.9170);">Layer 2</div>
<div class="t" style="left:914.70px;top:420.18px;font-size:10.3px;color:#333;transform:scaleX(0.9170);">Layer 3</div>
<div class="t" style="left:914.70px;top:442.28px;font-size:10.3px;color:#333;transform:scaleX(0.9170);">Layer 4</div>
<div style="left:980.20px;top:278.40px;width:272.40px;height:18.00px;background:#fff;border:1px solid #3d8ee6;"></div>
<div style="left:981.50px;top:279.70px;width:254.50px;height:15.40px;background:#0078d7;border:1px dotted #1a1a1a;"></div>
<div style="left:1236.20px;top:279.60px;width:15.30px;height:15.60px;background:#fdf6e5;"></div>
<div class="t" style="left:982.60px;top:283.68px;font-size:10.3px;color:#fff;transform:scaleX(0.9053);">PDF24</div>
<svg style="position:absolute;left:1240px;top:284.9px;" width="9" height="6" viewBox="0 0 9 6"><path d="M0.5 0.5 H8.5 L4.5 4.8 Z" fill="#555"/></svg>
<div style="left:980.20px;top:299.80px;width:272.40px;height:17.50px;background:#fff;border:1px solid #dcdcdc;"></div>
<div class="t" style="left:982.60px;top:304.88px;font-size:10.3px;color:#222;transform:scaleX(0.9440);">8x10</div>
<svg style="position:absolute;left:1240px;top:306.05px;" width="9" height="6" viewBox="0 0 9 6"><path d="M0.5 0.5 H8.5 L4.5 4.8 Z" fill="#555"/></svg>
<div style="left:980.20px;top:320.90px;width:272.40px;height:17.50px;background:#fff;border:1px solid #dcdcdc;"></div>
<div class="t" style="left:982.60px;top:325.98px;font-size:10.3px;color:#222;transform:scaleX(0.9844);">Portrait</div>
<svg style="position:absolute;left:1240px;top:327.15px;" width="9" height="6" viewBox="0 0 9 6"><path d="M0.5 0.5 H8.5 L4.5 4.8 Z" fill="#555"/></svg>
<div style="left:980.20px;top:342.30px;width:272.40px;height:17.50px;background:#fff;border:1px solid #dcdcdc;"></div>
<div class="t" style="left:982.60px;top:347.08px;font-size:10.3px;color:#222;transform:scaleX(0.9643);">none</div>
<svg style="position:absolute;left:1240px;top:348.55px;" width="9" height="6" viewBox="0 0 9 6"><path d="M0.5 0.5 H8.5 L4.5 4.8 Z" fill="#555"/></svg>
<div style="left:980.20px;top:372.90px;width:272.40px;height:17.50px;background:#fff;border:1px solid #dcdcdc;"></div>
<div class="t" style="left:982.60px;top:377.68px;font-size:10.3px;color:#222;transform:scaleX(0.9927);">front and rear</div>
<svg style="position:absolute;left:1240px;top:379.15px;" width="9" height="6" viewBox="0 0 9 6"><path d="M0.5 0.5 H8.5 L4.5 4.8 Z" fill="#555"/></svg>
<div style="left:980.20px;top:394.50px;width:272.40px;height:17.50px;background:#fff;border:1px solid #dcdcdc;"></div>
<div class="t" style="left:982.60px;top:398.38px;font-size:10.3px;color:#222;transform:scaleX(1.0164);">print front view</div>
<svg style="position:absolute;left:1240px;top:400.75px;" width="9" height="6" viewBox="0 0 9 6"><path d="M0.5 0.5 H8.5 L4.5 4.8 Z" fill="#555"/></svg>
<div style="left:980.20px;top:416.00px;width:272.40px;height:17.50px;background:#fff;border:1px solid #dcdcdc;"></div>
<div class="t" style="left:982.60px;top:420.78px;font-size:10.3px;color:#222;transform:scaleX(1.0436);">do not print</div>
<svg style="position:absolute;left:1240px;top:422.25px;" width="9" height="6" viewBox="0 0 9 6"><path d="M0.5 0.5 H8.5 L4.5 4.8 Z" fill="#555"/></svg>
<div style="left:980.20px;top:438.10px;width:272.40px;height:17.50px;background:#fff;border:1px solid #dcdcdc;"></div>
<div class="t" style="left:982.60px;top:442.88px;font-size:10.3px;color:#222;transform:scaleX(1.0436);">do not print</div>
<svg style="position:absolute;left:1240px;top:444.35px;" width="9" height="6" viewBox="0 0 9 6"><path d="M0.5 0.5 H8.5 L4.5 4.8 Z" fill="#555"/></svg>
<div style="left:982.00px;top:461.20px;width:12.10px;height:11.70px;border:1px solid #9a9a9a;background:#fff;"></div>
<svg style="position:absolute;left:982px;top:461.2px;" width="12" height="12" viewBox="0 0 12 12"><path d="M2.6 6.2 L5 8.6 L9.6 3" fill="none" stroke="#9a9a9a" stroke-width="1"/></svg>
<div class="t" style="left:999.70px;top:462.98px;font-size:10.3px;color:#333;transform:scaleX(0.9851);">Print Active Components</div>
<div style="left:982.00px;top:477.30px;width:12.10px;height:11.70px;border:1px solid #9a9a9a;background:#fff;"></div>
<svg style="position:absolute;left:982px;top:477.3px;" width="12" height="12" viewBox="0 0 12 12"><path d="M2.6 6.2 L5 8.6 L9.6 3" fill="none" stroke="#9a9a9a" stroke-width="1"/></svg>
<div class="t" style="left:999.70px;top:479.08px;font-size:10.3px;color:#333;transform:scaleX(0.9581);">Print Passive Components</div>
<div style="left:982.00px;top:493.80px;width:12.10px;height:11.70px;border:1px solid #9a9a9a;background:#fff;"></div>
<svg style="position:absolute;left:982px;top:493.8px;" width="12" height="12" viewBox="0 0 12 12"><path d="M2.6 6.2 L5 8.6 L9.6 3" fill="none" stroke="#9a9a9a" stroke-width="1"/></svg>
<div class="t" style="left:999.70px;top:495.58px;font-size:10.3px;color:#333;transform:scaleX(0.9737);">Print Footer</div>
<div style="left:982.00px;top:509.90px;width:12.10px;height:11.70px;border:1px solid #9a9a9a;background:#fff;"></div>
<svg style="position:absolute;left:982px;top:509.90000000000003px;" width="12" height="12" viewBox="0 0 12 12"><path d="M2.6 6.2 L5 8.6 L9.6 3" fill="none" stroke="#9a9a9a" stroke-width="1"/></svg>
<div class="t" style="left:999.70px;top:511.68px;font-size:10.3px;color:#333;transform:scaleX(0.9383);">Display Tags at Ports</div>
<div style="left:982.00px;top:526.30px;width:12.10px;height:11.70px;border:1px solid #9a9a9a;background:#fff;"></div>
<svg style="position:absolute;left:982px;top:526.3px;" width="12" height="12" viewBox="0 0 12 12"><path d="M2.6 6.2 L5 8.6 L9.6 3" fill="none" stroke="#9a9a9a" stroke-width="1"/></svg>
<div class="t" style="left:999.70px;top:528.08px;font-size:10.3px;color:#333;transform:scaleX(0.9515);">Display inherited Tags</div>
<div style="left:982.00px;top:542.50px;width:12.10px;height:11.70px;border:1px solid #9a9a9a;background:#fff;"></div>
<svg style="position:absolute;left:982px;top:542.5px;" width="12" height="12" viewBox="0 0 12 12"><path d="M2.6 6.2 L5 8.6 L9.6 3" fill="none" stroke="#9a9a9a" stroke-width="1"/></svg>
<div class="t" style="left:999.70px;top:544.28px;font-size:10.3px;color:#333;transform:scaleX(0.9845);">Display Connection Information</div>
<div style="left:982.00px;top:559.10px;width:12.10px;height:11.70px;border:1px solid #9a9a9a;background:#fff;"></div>
<div class="t" style="left:999.70px;top:560.88px;font-size:10.3px;color:#333;transform:scaleX(0.9779);">Display Component description</div>
<div style="left:1094.00px;top:635.70px;width:91.40px;height:18.20px;background:#3c3c3c;"></div>
<div class="t" style="left:1124.40px;top:640.48px;font-size:10.3px;color:#e8e8e8;transform:scaleX(0.9257);">Cancel</div>
<div style="left:1124.60px;top:650.60px;width:5.60px;height:0.80px;background:#ddd;"></div>
<div style="left:1194.80px;top:635.70px;width:91.40px;height:18.20px;background:#e8473f;"></div>
<div class="t" style="left:1233.90px;top:640.48px;font-size:10.3px;color:#fff;transform:scaleX(1.0200);">Ok</div>
<div style="left:1425.00px;top:81.00px;width:6.30px;height:258.60px;background:#bdbdbd;"></div>
<svg style="position:absolute;left:1392px;top:628px;" width="26" height="26" viewBox="0 0 26 26"><circle cx="11.3" cy="11" r="7.6" fill="none" stroke="#a3a3a3" stroke-width="2"/><path d="M11.3 7 V15 M7.3 11 H15.3" stroke="#a3a3a3" stroke-width="1.4"/><path d="M19 18.3 L23 21.8" stroke="#a3a3a3" stroke-width="2.4"/></svg>
<svg style="position:absolute;left:1392px;top:653px;" width="26" height="26" viewBox="0 0 26 26"><circle cx="11.3" cy="11.4" r="7.6" fill="none" stroke="#a3a3a3" stroke-width="2"/><path d="M7.3 11.4 H15.3" stroke="#a3a3a3" stroke-width="1.4"/><path d="M19 18.7 L23 22.2" stroke="#a3a3a3" stroke-width="2.4"/></svg>
<svg style="position:absolute;left:1395px;top:683px;" width="21" height="20" viewBox="0 0 21 20"><path d="M1.5 6 V1.5 H6 M15 1.5 H19.5 V6 M19.5 14 V18.5 H15 M6 18.5 H1.5 V14" fill="none" stroke="#a3a3a3" stroke-width="1.6"/></svg>
<svg style="position:absolute;left:1395px;top:708px;" width="22" height="22" viewBox="0 0 22 22"><rect x="2.5" y="2.5" width="16" height="16" fill="none" stroke="#a3a3a3" stroke-width="1.2"/><rect x="1" y="1" width="3" height="3" fill="#fff" stroke="#a3a3a3" stroke-width="1"/><rect x="17" y="1" width="3" height="3" fill="#fff" stroke="#a3a3a3" stroke-width="1"/><rect x="1" y="17" width="3" height="3" fill="#fff" stroke="#a3a3a3" stroke-width="1"/><rect x="17" y="17" width="3" height="3" fill="#fff" stroke="#a3a3a3" stroke-width="1"/><path d="M6.5 15.5 L10.5 5.5 L14.5 15.5 M8 12 H13" fill="none" stroke="#a3a3a3" stroke-width="1.1"/></svg>
<div class="t" style="left:77.50px;top:724.12px;font-size:16.4px;color:#555;transform:scaleX(0.9761);">Properties</div>
<div style="left:70.00px;top:747.00px;width:259.00px;height:1.00px;background:#d8d8d8;"></div>
<div style="left:0.00px;top:781.00px;width:1470.00px;height:36.00px;background:#f4f5f9;"></div>
<div style="left:33.00px;top:750.50px;width:1404.00px;height:30.50px;background:#333;"></div>
<svg style="position:absolute;left:1029px;top:755px;" width="8" height="24" viewBox="0 0 8 24"><path d="M6 1.5 H2 V22 H6" fill="none" stroke="#c8c8c8" stroke-width="1.6"/></svg>
<svg style="position:absolute;left:1124px;top:755px;" width="8" height="24" viewBox="0 0 8 24"><path d="M2 1.5 H6 V22 H2" fill="none" stroke="#c8c8c8" stroke-width="1.6"/></svg>
<svg style="position:absolute;left:1041px;top:755px;" width="26" height="23" viewBox="0 0 26 23"><path d="M7 6.5 H2 V21 H22.5 V6.5 H17.5" fill="none" stroke="#c8c8c8" stroke-width="1.2"/><path d="M12.2 1.5 V15 M8 11 L12.2 15.2 L16.4 11" fill="none" stroke="#c8c8c8" stroke-width="1.2"/></svg>
<div class="t" style="left:1071.30px;top:762.21px;font-size:10.5px;color:#c4c4c4;transform:scaleX(0.9663);">Drop here</div>
<div class="t" style="left:1145.50px;top:757.36px;font-size:8.2px;color:#bfbfbf;transform:scaleX(1.0200);">Licensed: tripunkt GmbH (Christin)</div>
<div class="t" style="left:1145.50px;top:770.86px;font-size:8.2px;color:#bfbfbf;transform:scaleX(1.0200);">Database: localhost\pathfinder_en [SQLite]</div>
<div class="t" style="left:1319.10px;top:757.36px;font-size:8.2px;color:#bfbfbf;transform:scaleX(1.0364);">© 2001-2023 tripunkt GmbH</div>
<div class="t" style="left:1319.10px;top:770.86px;font-size:8.2px;color:#bfbfbf;transform:scaleX(0.9449);">v3.9.0.376 (64 Bit)</div>
</body></html>
